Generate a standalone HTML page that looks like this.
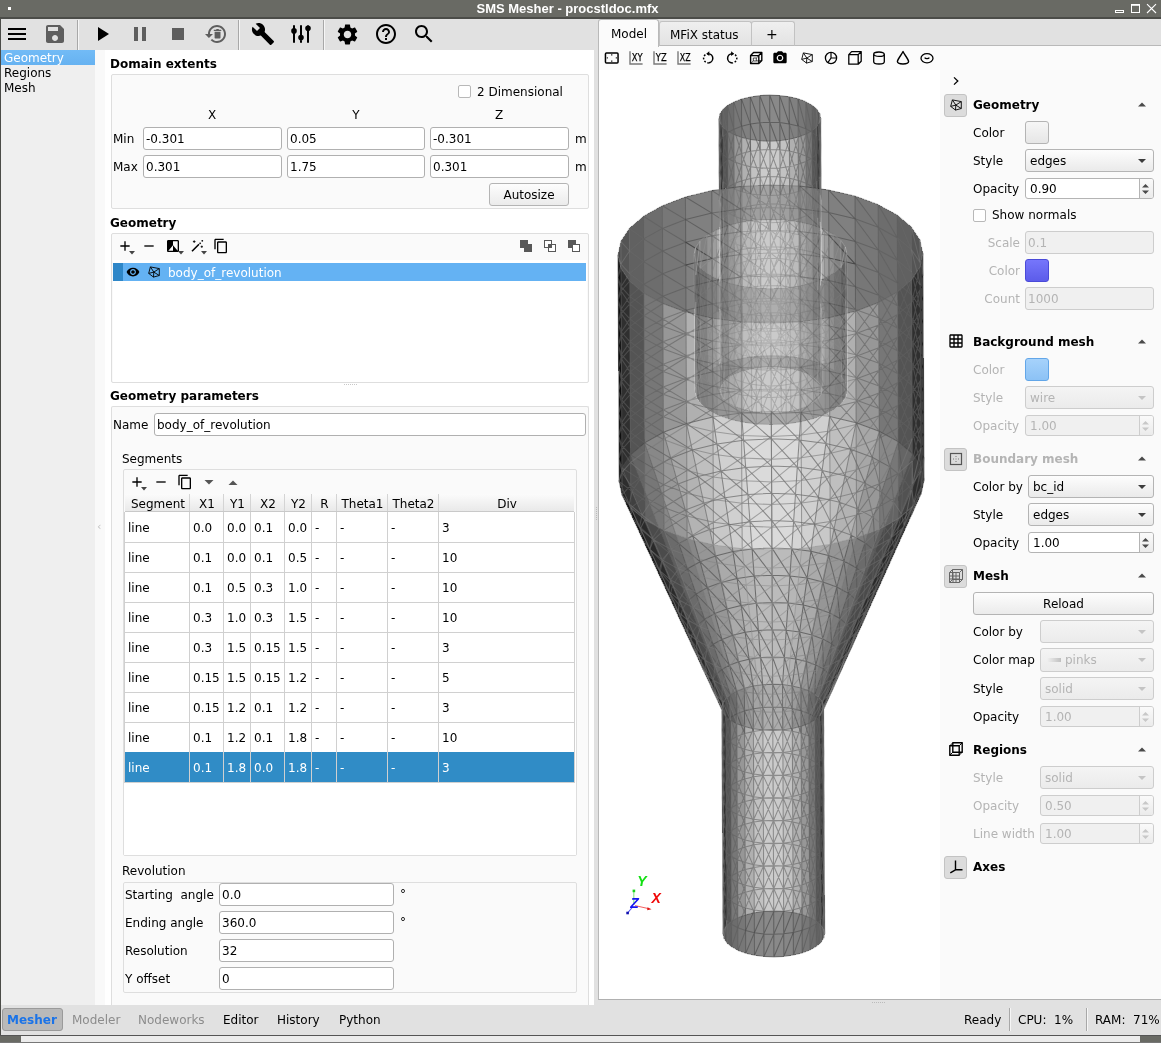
<!DOCTYPE html>
<html><head><meta charset="utf-8"><title>SMS Mesher - procstldoc.mfx</title>
<style>
html,body{margin:0;padding:0;}
body{width:1161px;height:1043px;overflow:hidden;position:relative;will-change:transform;background:#e1e1e1;font-family:"DejaVu Sans","Liberation Sans",sans-serif;font-size:12px;color:#000;}
div,svg{position:absolute;box-sizing:border-box;}
.t{white-space:nowrap;line-height:16px;height:16px;}
.b{font-weight:bold;}
.dis{color:#b4b4b4;}
.inp{background:#fff;border:1px solid #b0b0b0;border-radius:3px;}
.inp .t{left:2px;}
.btn{border:1px solid #b4b4b4;border-radius:3px;background:linear-gradient(#fdfdfd,#ebebeb);}
.grp{border:1px solid #dedede;border-radius:2px;background:#fafafa;}
</style></head><body>
<div style="left:0px;top:0px;width:1161px;height:17px;background:#696a64"></div>
<div style="left:0px;top:17px;width:1161px;height:2px;background:#4b4c48"></div>
<div class="t b" style="left:0;top:0;width:1135px;text-align:center;color:#fff;font-family:'Liberation Sans',sans-serif;font-size:13px;line-height:17px;height:17px">SMS Mesher - procstldoc.mfx</div>
<div style="left:8px;top:7px;width:3px;height:3px;background:#fff"></div>
<svg style="left:1112px;top:0" width="49" height="17" viewBox="0 0 49 17"><g fill="none" stroke="#fff"><rect x="3.5" y="10.5" width="8" height="2"/><rect x="19.5" y="5" width="8" height="7.5"/><rect x="19" y="4" width="9" height="1.6" fill="#fff" stroke="none"/><path d="M35 4.2L44 13M44 4.2L35 13" stroke-width="1.1"/></g></svg>
<div style="left:0px;top:19px;width:1px;height:1024px;background:#4b4c48"></div>
<div style="left:1px;top:19px;width:1160px;height:31px;background:#e1e1e1"></div>
<svg style="position:absolute;left:5px;top:22px" width="24" height="24" viewBox="0 0 24 24"><path fill="#000" d="M3 18h18v-2H3v2zm0-5h18v-2H3v2zm0-7v2h18V6H3z" /></svg>
<svg style="position:absolute;left:43px;top:22px" width="24" height="24" viewBox="0 0 24 24"><path fill="#5e5e5e" d="M17 3H5c-1.11 0-2 .9-2 2v14c0 1.1.89 2 2 2h14c1.1 0 2-.9 2-2V7l-4-4zm-5 16c-1.66 0-3-1.34-3-3s1.34-3 3-3 3 1.34 3 3-1.34 3-3 3zm3-10H5V5h10v4z" /></svg>
<svg style="position:absolute;left:90px;top:22px" width="24" height="24" viewBox="0 0 24 24"><path fill="#000" d="M8 5v14l11-7z" /></svg>
<svg style="position:absolute;left:128px;top:22px" width="24" height="24" viewBox="0 0 24 24"><path fill="#5e5e5e" d="M6 19h4V5H6v14zm8-14v14h4V5h-4z" /></svg>
<svg style="position:absolute;left:166px;top:22px" width="24" height="24" viewBox="0 0 24 24"><path fill="#5e5e5e" d="M6 6h12v12H6z" /></svg>
<svg style="position:absolute;left:204px;top:22px" width="24" height="24" viewBox="0 0 24 24"><path fill="#5e5e5e" d="M13 3c-4.97 0-9 4.030-9 9H1l3.890 3.890.070.140L9 12H6c0-3.870 3.130-7 7-7s7 3.130 7 7-3.130 7-7 7c-1.930 0-3.680-.790-4.940-2.060l-1.420 1.420C8.270 19.990 10.510 21 13 21c4.970 0 9-4.030 9-9s-4.030-9-9-9z M10.600 9.700h5.900v6.100a.7.700 0 0 1-.700.700h-4.500a.7.700 0 0 1-.700-.700z M9.800 7.700h7.500v1.300H9.800z M12.300 6.900h2.500v.900h-2.500z" /></svg>
<svg style="position:absolute;left:251px;top:22px" width="24" height="24" viewBox="0 0 24 24"><path fill="#000" d="M22.7 19l-9.1-9.1c.9-2.3.4-5-1.5-6.9-2-2-5-2.4-7.4-1.3L9 6 6 9 1.6 4.7C.4 7.1.9 10.1 2.9 12.1c1.9 1.9 4.6 2.4 6.9 1.5l9.1 9.1c.4.4 1 .4 1.4 0l2.3-2.3c.5-.4.5-1.1.1-1.4z" /></svg>
<svg style="position:absolute;left:289px;top:22px" width="24" height="24" viewBox="0 0 24 24"><path fill="#000" d="M4 3.200h2v17.600H4z M11 3.200h2v17.600h-2z M18 3.200h2v17.600h-2z M2.200 8.900a2.800 2.800 0 1 1 5.600 0a2.800 2.800 0 1 1-5.600 0z M9.200 15.600a2.800 2.800 0 1 1 5.600 0a2.800 2.800 0 1 1-5.600 0z M16.200 6.300a2.800 2.800 0 1 1 5.600 0a2.800 2.800 0 1 1-5.600 0z" /></svg>
<svg style="position:absolute;left:335.4px;top:21.5px" width="25" height="25" viewBox="0 0 24 24"><path fill="#000" d="M19.14 12.94c.04-.3.06-.61.06-.94 0-.32-.02-.64-.07-.94l2.03-1.58c.18-.14.23-.41.12-.61l-1.92-3.32c-.12-.22-.37-.29-.59-.22l-2.39.96c-.5-.38-1.03-.7-1.62-.94l-.36-2.54c-.04-.24-.24-.41-.48-.41h-3.84c-.24 0-.43.17-.47.41l-.36 2.54c-.59.24-1.13.57-1.62.94l-2.39-.96c-.22-.08-.47 0-.59.22L2.74 8.87c-.12.21-.08.47.12.61l2.03 1.58c-.05.3-.09.63-.09.94s.02.64.07.94l-2.03 1.58c-.18.14-.23.41-.12.61l1.92 3.32c.12.22.37.29.59.22l2.39-.96c.5.38 1.03.7 1.62.94l.36 2.54c.05.24.24.41.48.41h3.84c.24 0 .44-.17.47-.41l.36-2.54c.59-.24 1.13-.56 1.62-.94l2.39.96c.22.08.47 0 .59-.22l1.92-3.32c.12-.22.07-.47-.12-.61l-2.01-1.58zM12 15.6c-1.98 0-3.6-1.62-3.6-3.6s1.62-3.6 3.6-3.6 3.6 1.62 3.6 3.6-1.62 3.6-3.6 3.6z" /></svg>
<svg style="position:absolute;left:374px;top:22px" width="24" height="24" viewBox="0 0 24 24"><path fill="#000" d="M11 18h2v-2h-2v2zm1-16C6.48 2 2 6.48 2 12s4.48 10 10 10 10-4.48 10-10S17.52 2 12 2zm0 18c-4.41 0-8-3.59-8-8s3.59-8 8-8 8 3.59 8 8-3.59 8-8 8zm0-14c-2.21 0-4 1.79-4 4h2c0-1.1.9-2 2-2s2 .9 2 2c0 2-3 1.75-3 5h2c0-2.25 3-2.5 3-5 0-2.21-1.79-4-4-4z" /></svg>
<svg style="position:absolute;left:412px;top:22px" width="24" height="24" viewBox="0 0 24 24"><path fill="#000" d="M15.5 14h-.79l-.28-.27C15.41 12.59 16 11.11 16 9.5 16 5.91 13.09 3 9.5 3S3 5.91 3 9.5 5.91 16 9.5 16c1.61 0 3.09-.59 4.23-1.57l.27.28v.79l5 4.99L20.49 19l-4.99-5zm-6 0C7.01 14 5 11.99 5 9.5S7.01 5 9.5 5 14 7.01 14 9.5 11.99 14 9.5 14z" /></svg>
<div style="left:77px;top:20px;width:1px;height:30px;background:#a8a8a8"></div>
<div style="left:78px;top:20px;width:1px;height:30px;background:#f6f6f6"></div>
<div style="left:238px;top:20px;width:1px;height:30px;background:#a8a8a8"></div>
<div style="left:239px;top:20px;width:1px;height:30px;background:#f6f6f6"></div>
<div style="left:323px;top:20px;width:1px;height:30px;background:#a8a8a8"></div>
<div style="left:324px;top:20px;width:1px;height:30px;background:#f6f6f6"></div>
<div style="left:1px;top:50px;width:94px;height:955px;background:#efefef"></div>
<div style="left:1px;top:50px;width:94px;height:15px;background:linear-gradient(#72bbf6,#66b2f1)"></div>
<div class="t" style="left:4px;top:50px;color:#fff">Geometry</div>
<div class="t" style="left:4px;top:65px;">Regions</div>
<div class="t" style="left:4px;top:80px;">Mesh</div>
<div style="left:95px;top:50px;width:499px;height:955px;background:#fff"></div>
<div style="left:95px;top:50px;width:10px;height:955px;background:#f9f9f9"></div>
<div style="left:594px;top:50px;width:4px;height:955px;background:#e1e1e1"></div>
<div class="t" style="left:97px;top:519px;color:#c4c4c4;font-size:11px">&#8249;</div>
<div class="t b" style="left:110px;top:56px;">Domain extents</div>
<div class="grp" style="left:111px;top:74px;width:478px;height:135px;"></div>
<div style="left:458px;top:85px;width:13px;height:13px;background:#fff;border:1px solid #b8b8b8;border-radius:2px"></div>
<div class="t" style="left:477px;top:84px;">2 Dimensional</div>
<div class="t" style="left:192px;top:107px;width:40px;text-align:center">X</div>
<div class="t" style="left:336px;top:107px;width:40px;text-align:center">Y</div>
<div class="t" style="left:479px;top:107px;width:40px;text-align:center">Z</div>
<div class="t" style="left:113px;top:131px;">Min</div>
<div class="t" style="left:113px;top:159px;">Max</div>
<div class="inp" style="left:143px;top:127px;width:139px;height:23px;"><div class="t" style="top:3px">-0.301</div></div>
<div class="inp" style="left:143px;top:155px;width:139px;height:23px;"><div class="t" style="top:3px">0.301</div></div>
<div class="inp" style="left:287px;top:127px;width:138px;height:23px;"><div class="t" style="top:3px">0.05</div></div>
<div class="inp" style="left:287px;top:155px;width:138px;height:23px;"><div class="t" style="top:3px">1.75</div></div>
<div class="inp" style="left:430px;top:127px;width:139px;height:23px;"><div class="t" style="top:3px">-0.301</div></div>
<div class="inp" style="left:430px;top:155px;width:139px;height:23px;"><div class="t" style="top:3px">0.301</div></div>
<div class="t" style="left:575px;top:131px;">m</div>
<div class="t" style="left:575px;top:159px;">m</div>
<div class="btn" style="left:489px;top:183px;width:80px;height:23px;"><div class="t" style="left:0;width:78px;text-align:center;top:3px">Autosize</div></div>
<div class="t b" style="left:110px;top:215px;">Geometry</div>
<div class="grp" style="left:111px;top:233px;width:478px;height:150px;"></div>
<div style="left:113px;top:260px;width:474px;height:122px;background:#fff"></div>
<svg style="position:absolute;left:117px;top:238px" width="16" height="16" viewBox="0 0 24 24"><path fill="#000" d="M19 13h-6v6h-2v-6H5v-2h6V5h2v6h6v2z" /></svg>
<svg style="left:129px;top:251px" width="6" height="4" viewBox="0 0 6 4"><path d="M0 0h6L3 3.4z" fill="#444"/></svg>
<svg style="position:absolute;left:141px;top:238px" width="16" height="16" viewBox="0 0 24 24"><path fill="#000" d="M19 13H5v-2h14v2z" /></svg>
<svg style="position:absolute;left:165px;top:238px" width="16" height="16" viewBox="0 0 24 24"><path fill="#000" d="M19 3H5c-1.1 0-2 .9-2 2v14c0 1.1.9 2 2 2h14c1.1 0 2-.9 2-2V5c0-1.1-.9-2-2-2zm0 16l-7-8v8H5l7-8V5h7v14z" /></svg>
<svg style="left:178px;top:251px" width="6" height="4" viewBox="0 0 6 4"><path d="M0 0h6L3 3.4z" fill="#444"/></svg>
<svg style="left:189px;top:238px" width="16" height="16" viewBox="0 0 16 16"><g stroke="#000" fill="none"><path d="M3 13.300L10 6.300" stroke-width="1.600"/><path d="M10.600 5.700L11.600 4.700" stroke-width="1.600"/><path d="M5.200 2.300v2.600M3.900 3.600h2.600M12.800 7.600v2.200M11.700 8.700h2.200M13.300 2v1.600M12.500 2.800h1.600" stroke-width="0.900"/></g></svg>
<svg style="left:201px;top:251px" width="6" height="4" viewBox="0 0 6 4"><path d="M0 0h6L3 3.4z" fill="#444"/></svg>
<svg style="position:absolute;left:213px;top:238px" width="16" height="16" viewBox="0 0 24 24"><path fill="#000" d="M16 1H4c-1.1 0-2 .9-2 2v14h2V3h12V1zm3 4H8c-1.1 0-2 .9-2 2v14c0 1.1.9 2 2 2h11c1.1 0 2-.9 2-2V7c0-1.1-.9-2-2-2zm0 16H8V7h11v14z" /></svg>
<svg style="left:520px;top:240px" width="12" height="12"><rect x="0" y="0" width="8" height="8" fill="#585858"/><rect x="4" y="4" width="8" height="8" fill="#585858"/></svg>
<svg style="left:544px;top:240px" width="12" height="12"><rect x="0.5" y="0.5" width="7" height="7" fill="#fff" stroke="#585858"/><rect x="4.5" y="4.5" width="7" height="7" fill="#fff" stroke="#585858"/><rect x="4" y="4" width="4" height="4" fill="#585858"/><rect x="4.5" y="4.5" width="7" height="7" fill="none" stroke="#585858"/></svg>
<svg style="left:568px;top:240px" width="12" height="12"><rect x="0" y="0" width="8" height="8" fill="#585858"/><rect x="4.5" y="4.5" width="7" height="7" fill="#fff" stroke="#585858"/></svg>
<div style="left:113px;top:263px;width:473px;height:18px;background:#64b2f3"></div>
<div style="left:113px;top:263px;width:10px;height:18px;background:#2f87c8"></div>
<svg style="position:absolute;left:126px;top:265px" width="14" height="14" viewBox="0 0 24 24"><path fill="#000" d="M12 4.5C7 4.5 2.73 7.61 1 12c1.73 4.39 6 7.5 11 7.5s9.27-3.11 11-7.5c-1.73-4.39-6-7.5-11-7.5zM12 17c-2.76 0-5-2.24-5-5s2.24-5 5-5 5 2.24 5 5-2.24 5-5 5zm0-8c-1.66 0-3 1.34-3 3s1.34 3 3 3 3-1.34 3-3-1.34-3-3-3z" /></svg>
<svg style="left:148px;top:266px" width="12" height="12" viewBox="0 0 12 12"><g fill="none" stroke="#000" stroke-width="0.9" stroke-linejoin="round"><path d="M2.400 .900L11.300 2.600V9.500L5.500 11.100L.700 7.400Z"/><path d="M5.800 6.100L2.400 .900M5.800 6.100L11.300 2.600M5.800 6.100L11.300 9.500M5.800 6.100L5.500 11.100M5.800 6.100L.700 7.400"/></g></svg>
<div class="t" style="left:168px;top:265px;color:#fff">body_of_revolution</div>
<div style="left:344px;top:384px;width:14px;height:1px;background:repeating-linear-gradient(90deg,#c8c8c8 0 1px,transparent 1px 2px)"></div>
<div class="t b" style="left:110px;top:388px;">Geometry parameters</div>
<div class="grp" style="left:111px;top:406px;width:478px;height:620px;border-bottom:none"></div>
<div class="t" style="left:113px;top:417px;">Name</div>
<div class="inp" style="left:154px;top:413px;width:432px;height:23px;"><div class="t" style="top:3px">body_of_revolution</div></div>
<div class="t" style="left:122px;top:451px;">Segments</div>
<div class="grp" style="left:123px;top:469px;width:454px;height:387px;"></div>
<svg style="position:absolute;left:129px;top:474px" width="16" height="16" viewBox="0 0 24 24"><path fill="#000" d="M19 13h-6v6h-2v-6H5v-2h6V5h2v6h6v2z" /></svg>
<svg style="left:141px;top:487px" width="6" height="4" viewBox="0 0 6 4"><path d="M0 0h6L3 3.4z" fill="#444"/></svg>
<svg style="position:absolute;left:153px;top:474px" width="16" height="16" viewBox="0 0 24 24"><path fill="#000" d="M19 13H5v-2h14v2z" /></svg>
<svg style="position:absolute;left:177px;top:474px" width="16" height="16" viewBox="0 0 24 24"><path fill="#000" d="M16 1H4c-1.1 0-2 .9-2 2v14h2V3h12V1zm3 4H8c-1.1 0-2 .9-2 2v14c0 1.1.9 2 2 2h11c1.1 0 2-.9 2-2V7c0-1.1-.9-2-2-2zm0 16H8V7h11v14z" /></svg>
<svg style="left:204px;top:480px" width="10" height="5" viewBox="0 0 10 5"><path d="M0.5 0h9L5 4.5z" fill="#555"/></svg>
<svg style="left:228px;top:480px" width="10" height="5" viewBox="0 0 10 5"><path d="M0.5 5h9L5 0.5z" fill="#555"/></svg>
<div style="left:125px;top:494px;width:449px;height:18px;background:linear-gradient(#fbfbfb,#e9e9e9);border-bottom:1px solid #c9c9c9"></div>
<div class="t" style="left:126px;top:496px;width:64px;text-align:center">Segment</div>
<div class="t" style="left:190px;top:496px;width:34px;text-align:center">X1</div>
<div style="left:189px;top:494px;width:1px;height:17px;background:#d4d4d4"></div>
<div class="t" style="left:224px;top:496px;width:27px;text-align:center">Y1</div>
<div style="left:223px;top:494px;width:1px;height:17px;background:#d4d4d4"></div>
<div class="t" style="left:251px;top:496px;width:34px;text-align:center">X2</div>
<div style="left:250px;top:494px;width:1px;height:17px;background:#d4d4d4"></div>
<div class="t" style="left:285px;top:496px;width:27px;text-align:center">Y2</div>
<div style="left:284px;top:494px;width:1px;height:17px;background:#d4d4d4"></div>
<div class="t" style="left:312px;top:496px;width:25px;text-align:center">R</div>
<div style="left:311px;top:494px;width:1px;height:17px;background:#d4d4d4"></div>
<div class="t" style="left:337px;top:496px;width:51px;text-align:center">Theta1</div>
<div style="left:336px;top:494px;width:1px;height:17px;background:#d4d4d4"></div>
<div class="t" style="left:388px;top:496px;width:51px;text-align:center">Theta2</div>
<div style="left:387px;top:494px;width:1px;height:17px;background:#d4d4d4"></div>
<div class="t" style="left:439px;top:496px;width:136px;text-align:center">Div</div>
<div style="left:438px;top:494px;width:1px;height:17px;background:#d4d4d4"></div>
<div style="left:124px;top:512px;width:452px;height:343px;background:#fff"></div>
<div class="t" style="left:128px;top:520px;">line</div>
<div class="t" style="left:193px;top:520px;">0.0</div>
<div class="t" style="left:227px;top:520px;">0.0</div>
<div class="t" style="left:254px;top:520px;">0.1</div>
<div class="t" style="left:288px;top:520px;">0.0</div>
<div class="t" style="left:315px;top:520px;">-</div>
<div class="t" style="left:340px;top:520px;">-</div>
<div class="t" style="left:391px;top:520px;">-</div>
<div class="t" style="left:442px;top:520px;">3</div>
<div style="left:125px;top:542px;width:449px;height:1px;background:#d0d0d0"></div>
<div class="t" style="left:128px;top:550px;">line</div>
<div class="t" style="left:193px;top:550px;">0.1</div>
<div class="t" style="left:227px;top:550px;">0.0</div>
<div class="t" style="left:254px;top:550px;">0.1</div>
<div class="t" style="left:288px;top:550px;">0.5</div>
<div class="t" style="left:315px;top:550px;">-</div>
<div class="t" style="left:340px;top:550px;">-</div>
<div class="t" style="left:391px;top:550px;">-</div>
<div class="t" style="left:442px;top:550px;">10</div>
<div style="left:125px;top:572px;width:449px;height:1px;background:#d0d0d0"></div>
<div class="t" style="left:128px;top:580px;">line</div>
<div class="t" style="left:193px;top:580px;">0.1</div>
<div class="t" style="left:227px;top:580px;">0.5</div>
<div class="t" style="left:254px;top:580px;">0.3</div>
<div class="t" style="left:288px;top:580px;">1.0</div>
<div class="t" style="left:315px;top:580px;">-</div>
<div class="t" style="left:340px;top:580px;">-</div>
<div class="t" style="left:391px;top:580px;">-</div>
<div class="t" style="left:442px;top:580px;">10</div>
<div style="left:125px;top:602px;width:449px;height:1px;background:#d0d0d0"></div>
<div class="t" style="left:128px;top:610px;">line</div>
<div class="t" style="left:193px;top:610px;">0.3</div>
<div class="t" style="left:227px;top:610px;">1.0</div>
<div class="t" style="left:254px;top:610px;">0.3</div>
<div class="t" style="left:288px;top:610px;">1.5</div>
<div class="t" style="left:315px;top:610px;">-</div>
<div class="t" style="left:340px;top:610px;">-</div>
<div class="t" style="left:391px;top:610px;">-</div>
<div class="t" style="left:442px;top:610px;">10</div>
<div style="left:125px;top:632px;width:449px;height:1px;background:#d0d0d0"></div>
<div class="t" style="left:128px;top:640px;">line</div>
<div class="t" style="left:193px;top:640px;">0.3</div>
<div class="t" style="left:227px;top:640px;">1.5</div>
<div class="t" style="left:254px;top:640px;">0.15</div>
<div class="t" style="left:288px;top:640px;">1.5</div>
<div class="t" style="left:315px;top:640px;">-</div>
<div class="t" style="left:340px;top:640px;">-</div>
<div class="t" style="left:391px;top:640px;">-</div>
<div class="t" style="left:442px;top:640px;">3</div>
<div style="left:125px;top:662px;width:449px;height:1px;background:#d0d0d0"></div>
<div class="t" style="left:128px;top:670px;">line</div>
<div class="t" style="left:193px;top:670px;">0.15</div>
<div class="t" style="left:227px;top:670px;">1.5</div>
<div class="t" style="left:254px;top:670px;">0.15</div>
<div class="t" style="left:288px;top:670px;">1.2</div>
<div class="t" style="left:315px;top:670px;">-</div>
<div class="t" style="left:340px;top:670px;">-</div>
<div class="t" style="left:391px;top:670px;">-</div>
<div class="t" style="left:442px;top:670px;">5</div>
<div style="left:125px;top:692px;width:449px;height:1px;background:#d0d0d0"></div>
<div class="t" style="left:128px;top:700px;">line</div>
<div class="t" style="left:193px;top:700px;">0.15</div>
<div class="t" style="left:227px;top:700px;">1.2</div>
<div class="t" style="left:254px;top:700px;">0.1</div>
<div class="t" style="left:288px;top:700px;">1.2</div>
<div class="t" style="left:315px;top:700px;">-</div>
<div class="t" style="left:340px;top:700px;">-</div>
<div class="t" style="left:391px;top:700px;">-</div>
<div class="t" style="left:442px;top:700px;">3</div>
<div style="left:125px;top:722px;width:449px;height:1px;background:#d0d0d0"></div>
<div class="t" style="left:128px;top:730px;">line</div>
<div class="t" style="left:193px;top:730px;">0.1</div>
<div class="t" style="left:227px;top:730px;">1.2</div>
<div class="t" style="left:254px;top:730px;">0.1</div>
<div class="t" style="left:288px;top:730px;">1.8</div>
<div class="t" style="left:315px;top:730px;">-</div>
<div class="t" style="left:340px;top:730px;">-</div>
<div class="t" style="left:391px;top:730px;">-</div>
<div class="t" style="left:442px;top:730px;">10</div>
<div style="left:125px;top:752px;width:449px;height:1px;background:#d0d0d0"></div>
<div style="left:125px;top:752px;width:449px;height:30px;background:#308cc6"></div>
<div class="t" style="left:128px;top:760px;color:#fff">line</div>
<div class="t" style="left:193px;top:760px;color:#fff">0.1</div>
<div class="t" style="left:227px;top:760px;color:#fff">1.8</div>
<div class="t" style="left:254px;top:760px;color:#fff">0.0</div>
<div class="t" style="left:288px;top:760px;color:#fff">1.8</div>
<div class="t" style="left:315px;top:760px;color:#fff">-</div>
<div class="t" style="left:340px;top:760px;color:#fff">-</div>
<div class="t" style="left:391px;top:760px;color:#fff">-</div>
<div class="t" style="left:442px;top:760px;color:#fff">3</div>
<div style="left:125px;top:782px;width:449px;height:1px;background:#d0d0d0"></div>
<div style="left:189px;top:512px;width:1px;height:271px;background:#d0d0d0"></div>
<div style="left:223px;top:512px;width:1px;height:271px;background:#d0d0d0"></div>
<div style="left:250px;top:512px;width:1px;height:271px;background:#d0d0d0"></div>
<div style="left:284px;top:512px;width:1px;height:271px;background:#d0d0d0"></div>
<div style="left:311px;top:512px;width:1px;height:271px;background:#d0d0d0"></div>
<div style="left:336px;top:512px;width:1px;height:271px;background:#d0d0d0"></div>
<div style="left:387px;top:512px;width:1px;height:271px;background:#d0d0d0"></div>
<div style="left:438px;top:512px;width:1px;height:271px;background:#d0d0d0"></div>
<div style="left:574px;top:512px;width:1px;height:271px;background:#d0d0d0"></div>
<div style="left:124px;top:512px;width:1px;height:271px;background:#d0d0d0"></div>
<div class="t" style="left:122px;top:863px;">Revolution</div>
<div class="grp" style="left:123px;top:882px;width:454px;height:111px;"></div>
<div class="t" style="left:125px;top:887px;">Starting&nbsp; angle</div>
<div class="inp" style="left:219px;top:883px;width:175px;height:23px;"><div class="t" style="top:3px">0.0</div></div>
<div class="t" style="left:400px;top:886px;">&deg;</div>
<div class="t" style="left:125px;top:915px;">Ending angle</div>
<div class="inp" style="left:219px;top:911px;width:175px;height:23px;"><div class="t" style="top:3px">360.0</div></div>
<div class="t" style="left:400px;top:914px;">&deg;</div>
<div class="t" style="left:125px;top:943px;">Resolution</div>
<div class="inp" style="left:219px;top:939px;width:175px;height:23px;"><div class="t" style="top:3px">32</div></div>
<div class="t" style="left:125px;top:971px;">Y offset</div>
<div class="inp" style="left:219px;top:967px;width:175px;height:23px;"><div class="t" style="top:3px">0</div></div>
<div style="left:598px;top:45px;width:563px;height:955px;background:#fbfbfb;border-top:1px solid #b9b9b9;border-left:1px solid #b9b9b9;border-bottom:1px solid #b0b0b0"></div>
<div style="left:659px;top:21px;width:93px;height:25px;background:linear-gradient(#efefef,#e3e3e3);border:1px solid #c2c2c2;border-bottom:1px solid #b9b9b9;border-radius:3px 3px 0 0"></div>
<div style="left:751px;top:21px;width:44px;height:25px;background:linear-gradient(#efefef,#e3e3e3);border:1px solid #c2c2c2;border-bottom:1px solid #b9b9b9;border-radius:3px 3px 0 0"></div>
<div style="left:598px;top:19px;width:61px;height:28px;background:#fbfbfb;border:1px solid #b9b9b9;border-bottom:none;border-radius:3px 3px 0 0"></div>
<div class="t" style="left:611px;top:26px;">Model</div>
<div class="t" style="left:670px;top:27px;">MFiX status</div>
<div class="t" style="left:766px;top:25px;font-size:14px;line-height:18px;height:18px">+</div>
<div style="left:599px;top:70px;width:341px;height:929px;background:#fff"></div>
<svg style="left:600px;top:70px" width="340" height="928" viewBox="600 70 340 928">
<g shape-rendering="crispEdges" fill-rule="evenodd">
<path d="M823.7 929.2L820.8 924.9L816 920.9L809.7 917.4L802 914.6L793.2 912.5L783.6 911.3L773.7 910.9L763.8 911.4L754.3 912.7L745.5 914.9L737.8 917.8L731.5 921.3L726.8 925.3L723.9 929.7L723 934.2L724 938.7L726.9 943L731.6 946.9L738 950.4L745.7 953.2L754.5 955.3L764 956.6L773.9 957L783.9 956.5L793.4 955.1L802.2 952.9L809.9 950L816.2 946.5L820.9 942.5L823.7 938.2L824.7 933.7Z" fill="#686868"/>
<path d="M824.7 933.7L823.7 929.2L820.8 924.9L816 920.9L809.7 917.4L802 914.6L793.2 912.5L783.6 911.3L773.7 910.9L763.8 911.4L754.3 912.7L745.5 914.9L737.8 917.8L731.5 921.3L726.8 925.3L723.9 929.7L723 934.2L724 938.7L726.9 943L731.6 946.9L738 950.4L745.7 953.2L754.5 955.3L764 956.6L773.9 957L783.9 956.5L793.4 955.1L802.2 952.9L809.9 950L816.2 946.5L820.9 942.5L823.7 938.2Z" fill="#686868" fill-opacity=".500"/>
<path d="M723.9 929.7L722.8 703.1L721.9 707.6L723 934.2Z" fill="#0d0d0d"/>
<path d="M726.8 925.3L725.7 698.7L722.8 703.1L723.9 929.7Z" fill="#2f2f2f"/>
<path d="M731.5 921.3L730.4 694.7L725.7 698.7L726.8 925.3Z" fill="#545454"/>
<path d="M737.8 917.8L736.7 691.2L730.4 694.7L731.5 921.3Z" fill="#777777"/>
<path d="M745.5 914.9L744.4 688.3L736.7 691.2L737.8 917.8Z" fill="#979797"/>
<path d="M754.3 912.7L753.2 686.1L744.4 688.3L745.5 914.9Z" fill="#b0b0b0"/>
<path d="M763.8 911.4L762.7 684.7L753.2 686.1L754.3 912.7Z" fill="#c2c2c2"/>
<path d="M773.7 910.9L772.6 684.3L762.7 684.7L763.8 911.4ZM783.6 911.3L782.5 684.6L772.6 684.3L773.7 910.9Z" fill="#cbcbcb"/>
<path d="M793.2 912.5L792.1 685.9L782.5 684.6L783.6 911.3Z" fill="#c2c2c2"/>
<path d="M802 914.6L800.9 688L792.1 685.9L793.2 912.5Z" fill="#b0b0b0"/>
<path d="M809.7 917.4L808.6 690.8L800.9 688L802 914.6Z" fill="#979797"/>
<path d="M816 920.9L814.9 694.3L808.6 690.8L809.7 917.4Z" fill="#777777"/>
<path d="M820.8 924.9L819.6 698.3L814.9 694.3L816 920.9Z" fill="#545454"/>
<path d="M823.7 929.2L822.6 702.6L819.6 698.3L820.8 924.9Z" fill="#2f2f2f"/>
<path d="M824.7 933.7L823.6 707.1L822.6 702.6L823.7 929.2Z" fill="#0d0d0d"/>
<path d="M822.6 711.6L823.7 929.2L824.7 933.7L823.6 707.1Z" fill="#0d0d0d" fill-opacity=".500"/>
<path d="M824.7 933.7L823.7 929.2L823.7 938.2Z" fill="#0d0d0d" fill-opacity=".333"/>
<path d="M822.6 711.6L819.7 715.9L820.8 924.9L823.7 929.2Z" fill="#2f2f2f" fill-opacity=".500"/>
<path d="M823.7 938.2L823.7 929.2L820.8 924.9L820.9 942.5Z" fill="#2f2f2f" fill-opacity=".333"/>
<path d="M819.7 715.9L815.1 719.9L816 920.9L820.8 924.9Z" fill="#545454" fill-opacity=".500"/>
<path d="M820.9 942.5L820.8 924.9L816 920.9L816.2 946.5Z" fill="#545454" fill-opacity=".333"/>
<path d="M815.1 719.9L808.8 723.4L809.7 917.4L816 920.9Z" fill="#777777" fill-opacity=".500"/>
<path d="M816.2 946.5L816 920.9L809.7 917.4L809.9 950Z" fill="#777777" fill-opacity=".333"/>
<path d="M808.8 723.4L801.1 726.3L802 914.6L809.7 917.4Z" fill="#979797" fill-opacity=".500"/>
<path d="M809.9 950L809.7 917.4L802 914.6L802.2 952.9Z" fill="#979797" fill-opacity=".333"/>
<path d="M801.1 726.3L792.3 728.5L793.2 912.5L802 914.6Z" fill="#b0b0b0" fill-opacity=".500"/>
<path d="M802.2 952.9L802 914.6L793.2 912.5L793.4 955.1Z" fill="#b0b0b0" fill-opacity=".333"/>
<path d="M792.3 728.5L782.7 729.9L783.6 911.3L793.2 912.5Z" fill="#c2c2c2" fill-opacity=".500"/>
<path d="M793.4 955.1L793.2 912.5L783.6 911.3L783.9 956.5Z" fill="#c2c2c2" fill-opacity=".333"/>
<path d="M782.7 729.9L772.8 730.4L773.7 910.9L783.6 911.3Z" fill="#cbcbcb" fill-opacity=".500"/>
<path d="M783.9 956.5L783.6 911.3L773.7 910.9L773.9 957Z" fill="#cbcbcb" fill-opacity=".333"/>
<path d="M772.8 730.4L762.9 730L763.8 911.4L773.7 910.9Z" fill="#cbcbcb" fill-opacity=".500"/>
<path d="M773.9 957L773.7 910.9L763.8 911.4L764 956.6Z" fill="#cbcbcb" fill-opacity=".333"/>
<path d="M762.9 730L753.4 728.7L754.3 912.7L763.8 911.4Z" fill="#c2c2c2" fill-opacity=".500"/>
<path d="M764 956.6L763.8 911.4L754.3 912.7L754.5 955.3Z" fill="#c2c2c2" fill-opacity=".333"/>
<path d="M753.4 728.7L744.6 726.6L745.5 914.9L754.3 912.7Z" fill="#b0b0b0" fill-opacity=".500"/>
<path d="M754.5 955.3L754.3 912.7L745.5 914.9L745.7 953.2Z" fill="#b0b0b0" fill-opacity=".333"/>
<path d="M744.6 726.6L736.8 723.8L737.8 917.8L745.5 914.9Z" fill="#979797" fill-opacity=".500"/>
<path d="M745.7 953.2L745.5 914.9L737.8 917.8L738 950.4Z" fill="#979797" fill-opacity=".333"/>
<path d="M736.8 723.8L730.5 720.3L731.5 921.3L737.8 917.8Z" fill="#777777" fill-opacity=".500"/>
<path d="M738 950.4L737.8 917.8L731.5 921.3L731.6 946.9Z" fill="#777777" fill-opacity=".333"/>
<path d="M730.5 720.3L725.8 716.4L726.8 925.3L731.5 921.3Z" fill="#545454" fill-opacity=".500"/>
<path d="M731.6 946.9L731.5 921.3L726.8 925.3L726.9 943Z" fill="#545454" fill-opacity=".333"/>
<path d="M725.8 716.4L722.9 712L723.9 929.7L726.8 925.3Z" fill="#2f2f2f" fill-opacity=".500"/>
<path d="M726.9 943L726.8 925.3L723.9 929.7L724 938.7Z" fill="#2f2f2f" fill-opacity=".333"/>
<path d="M723 934.2L723.9 929.7L722.9 712L721.9 707.6Z" fill="#0d0d0d" fill-opacity=".500"/>
<path d="M724 938.7L723.9 929.7L723 934.2Z" fill="#0d0d0d" fill-opacity=".333"/>
<path d="M921.3 493.4L924.1 479.9L823.6 707.1L823.6 709.4Z" fill="#0d0d0d"/>
<path d="M822.6 711.6L823.6 709.4L823.6 707.1Z" fill="#0d0d0d" fill-opacity=".333"/>
<path d="M619.1 481.4L622 494.9L721.9 709.9L721.9 707.6Z" fill="#0d0d0d"/>
<path d="M721.9 707.6L721.9 709.9L722.9 712Z" fill="#0d0d0d" fill-opacity=".333"/>
<path d="M722.8 703.1L621.9 467.9L619.1 481.4L721.9 707.6Z" fill="#2d2d2d"/>
<path d="M725.7 698.7L630.5 454.9L621.9 467.9L722.8 703.1Z" fill="#515151"/>
<path d="M730.4 694.7L644.6 442.9L630.5 454.9L725.7 698.7Z" fill="#767676"/>
<path d="M736.7 691.2L663.5 432.3L644.6 442.9L730.4 694.7Z" fill="#989898"/>
<path d="M744.4 688.3L686.6 423.6L663.5 432.3L736.7 691.2Z" fill="#b6b6b6"/>
<path d="M753.2 686.1L712.9 417.1L686.6 423.6L744.4 688.3Z" fill="#cecece"/>
<path d="M762.7 684.7L741.5 413L712.9 417.1L753.2 686.1Z" fill="#dfdfdf"/>
<path d="M772.6 684.3L771.3 411.5L741.5 413L762.7 684.7ZM782.5 684.6L801 412.7L771.3 411.5L772.6 684.3Z" fill="#e8e8e8"/>
<path d="M792.1 685.9L829.7 416.5L801 412.7L782.5 684.6Z" fill="#dfdfdf"/>
<path d="M800.9 688L856.1 422.8L829.7 416.5L792.1 685.9Z" fill="#cecece"/>
<path d="M808.6 690.8L879.2 431.3L856.1 422.8L800.9 688Z" fill="#b6b6b6"/>
<path d="M814.9 694.3L898.2 441.6L879.2 431.3L808.6 690.8Z" fill="#989898"/>
<path d="M819.6 698.3L912.4 453.5L898.2 441.6L814.9 694.3Z" fill="#767676"/>
<path d="M822.6 702.6L921.1 466.5L912.4 453.5L819.6 698.3Z" fill="#515151"/>
<path d="M823.6 707.1L924.1 479.9L921.1 466.5L822.6 702.6Z" fill="#2d2d2d"/>
<path d="M822.6 711.6L823.5 707.5L819.7 715.9ZM912.7 506.5L823.6 707.3L823.6 709.4L921.3 493.4Z" fill="#0a0a0a" fill-opacity=".500"/>
<path d="M823.5 707.5L822.6 711.6L823.6 709.4L823.6 707.3Z" fill="#0a0a0a" fill-opacity=".250"/>
<path d="M819.7 715.9L823.5 707.5L823.6 707.1L823.6 707.3L912.7 506.5L898.6 518.5L815.1 719.9Z" fill="#282828" fill-opacity=".500"/>
<path d="M815.1 719.9L898.6 518.5L879.7 529.1L808.8 723.4Z" fill="#454545" fill-opacity=".500"/>
<path d="M808.8 723.4L879.7 529.1L856.6 537.8L801.1 726.3Z" fill="#606060" fill-opacity=".500"/>
<path d="M801.1 726.3L856.6 537.8L830.3 544.3L792.3 728.5Z" fill="#767676" fill-opacity=".500"/>
<path d="M792.3 728.5L830.3 544.3L801.7 548.4L782.7 729.9Z" fill="#868686" fill-opacity=".500"/>
<path d="M782.7 729.9L801.7 548.4L771.9 549.8L772.8 730.4ZM772.8 730.4L771.9 549.8L742.2 548.7L762.9 730Z" fill="#8e8e8e" fill-opacity=".500"/>
<path d="M762.9 730L742.2 548.7L713.5 544.9L753.4 728.7Z" fill="#868686" fill-opacity=".500"/>
<path d="M753.4 728.7L713.5 544.9L687.1 538.6L744.6 726.6Z" fill="#767676" fill-opacity=".500"/>
<path d="M744.6 726.6L687.1 538.6L664 530.1L736.8 723.8Z" fill="#606060" fill-opacity=".500"/>
<path d="M736.8 723.8L664 530.1L644.9 519.7L730.5 720.3Z" fill="#454545" fill-opacity=".500"/>
<path d="M730.5 720.3L644.9 519.7L630.8 507.8L721.9 707.8L721.9 707.6L722 708L725.8 716.4Z" fill="#282828" fill-opacity=".500"/>
<path d="M725.8 716.4L722 708L722.9 712ZM630.8 507.8L622 494.9L721.9 709.9L721.9 707.8Z" fill="#0a0a0a" fill-opacity=".500"/>
<path d="M721.9 707.8L721.9 709.9L722.9 712L722 708Z" fill="#0a0a0a" fill-opacity=".250"/>
<path d="M621.9 467.9L620.8 241.3L617.9 254.8L619.1 481.4Z" fill="#0d0d0d"/>
<path d="M630.5 454.9L629.4 228.3L620.8 241.3L621.9 467.9Z" fill="#2f2f2f"/>
<path d="M644.6 442.9L643.5 216.3L629.4 228.3L630.5 454.9Z" fill="#545454"/>
<path d="M663.5 432.3L662.4 205.7L643.5 216.3L644.6 442.9Z" fill="#777777"/>
<path d="M686.6 423.6L685.4 197L662.4 205.7L663.5 432.3Z" fill="#979797"/>
<path d="M712.9 417.1L711.8 190.5L685.4 197L686.6 423.6Z" fill="#b0b0b0"/>
<path d="M741.5 413L740.4 186.4L711.8 190.5L712.9 417.1Z" fill="#c2c2c2"/>
<path d="M771.3 411.5L770.1 184.9L740.4 186.4L741.5 413ZM801 412.7L799.9 186.1L770.1 184.9L771.3 411.5Z" fill="#cbcbcb"/>
<path d="M829.7 416.5L828.5 189.9L799.9 186.1L801 412.7Z" fill="#c2c2c2"/>
<path d="M856.1 422.8L855 196.1L828.5 189.9L829.7 416.5Z" fill="#b0b0b0"/>
<path d="M879.2 431.3L878.1 204.6L855 196.1L856.1 422.8Z" fill="#979797"/>
<path d="M898.2 441.6L897.1 215L878.1 204.6L879.2 431.3Z" fill="#777777"/>
<path d="M912.4 453.5L911.3 226.9L897.1 215L898.2 441.6Z" fill="#545454"/>
<path d="M921.1 466.5L920 239.8L911.3 226.9L912.4 453.5Z" fill="#2f2f2f"/>
<path d="M924.1 479.9L923 253.3L920 239.8L921.1 466.5Z" fill="#0d0d0d"/>
<path d="M924.1 479.9L923 253.3L920.2 266.8L921.3 493.4Z" fill="#0d0d0d" fill-opacity=".500"/>
<path d="M921.3 493.4L920.2 266.8L911.6 279.8L912.7 506.5Z" fill="#2f2f2f" fill-opacity=".500"/>
<path d="M912.7 506.5L911.6 279.8L897.5 291.9L898.6 518.5Z" fill="#545454" fill-opacity=".500"/>
<path d="M898.6 518.5L897.5 291.9L878.6 302.4L879.7 529.1Z" fill="#777777" fill-opacity=".500"/>
<path d="M879.7 529.1L878.6 302.4L855.5 311.2L856.6 537.8Z" fill="#979797" fill-opacity=".500"/>
<path d="M856.6 537.8L855.5 311.2L829.2 317.7L830.3 544.3Z" fill="#b0b0b0" fill-opacity=".500"/>
<path d="M830.3 544.3L829.2 317.7L800.6 321.8L801.7 548.4Z" fill="#c2c2c2" fill-opacity=".500"/>
<path d="M801.7 548.4L800.6 321.8L770.8 323.2L771.9 549.8ZM771.9 549.8L770.8 323.2L741.1 322L742.2 548.7Z" fill="#cbcbcb" fill-opacity=".500"/>
<path d="M742.2 548.7L741.1 322L712.4 318.3L713.5 544.9Z" fill="#c2c2c2" fill-opacity=".500"/>
<path d="M713.5 544.9L712.4 318.3L686 312L687.1 538.6Z" fill="#b0b0b0" fill-opacity=".500"/>
<path d="M687.1 538.6L686 312L662.9 303.5L664 530.1Z" fill="#979797" fill-opacity=".500"/>
<path d="M664 530.1L662.9 303.5L643.8 293.1L644.9 519.7Z" fill="#777777" fill-opacity=".500"/>
<path d="M644.9 519.7L643.8 293.1L629.7 281.2L630.8 507.8Z" fill="#545454" fill-opacity=".500"/>
<path d="M630.8 507.8L629.7 281.2L620.9 268.3L622 494.9Z" fill="#2f2f2f" fill-opacity=".500"/>
<path d="M622 494.9L620.9 268.3L617.9 254.8L619.1 481.4Z" fill="#0d0d0d" fill-opacity=".500"/>
<path d="M923 253.3L920 239.8L911.3 226.9L897.1 215L878.1 204.6L855 196.1L828.5 189.9L799.9 186.1L770.1 184.9L740.4 186.4L711.8 190.5L685.4 197L662.4 205.7L643.5 216.3L629.4 228.3L620.8 241.3L617.9 254.8L620.9 268.3L629.7 281.2L643.8 293.1L662.9 303.5L686 312L712.4 318.3L741.1 322L770.8 323.2L800.6 321.8L829.2 317.7L855.5 311.2L878.6 302.4L897.5 291.9L911.6 279.8L920.2 266.8ZM845.3 260.4L841 267L834 273L824.5 278.3L813 282.6L799.8 285.9L785.5 287.9L770.7 288.7L755.8 288.1L741.5 286.2L728.2 283L716.7 278.8L707.2 273.6L700.1 267.7L695.7 261.2L694.2 254.4L695.6 247.7L700 241.2L707 235.2L716.4 229.9L728 225.5L741.1 222.3L755.4 220.2L770.3 219.5L785.2 220.1L799.5 222L812.7 225.1L824.3 229.4L833.8 234.5L840.9 240.5L845.3 247L846.8 253.7Z" fill="#686868" fill-opacity=".500"/>
<path d="M620.9 268.3L629.7 281.2L643.8 293.1L662.9 303.5L686 312L712.4 318.3L741.1 322L770.8 323.2L800.6 321.8L829.2 317.7L855.5 311.2L878.6 302.4L897.5 291.9L911.6 279.8L920.2 266.8L923 253.3L920 239.8L911.3 226.9L897.1 215L878.1 204.6L855 196.1L828.5 189.9L799.9 186.1L770.1 184.9L740.4 186.4L711.8 190.5L685.4 197L662.4 205.7L643.5 216.3L629.4 228.3L620.8 241.3L617.9 254.8ZM845.3 260.4L841 267L834 273L824.5 278.3L813 282.6L799.8 285.9L785.5 287.9L770.7 288.7L755.8 288.1L741.5 286.2L728.2 283L716.7 278.8L707.2 273.6L700.1 267.7L695.7 261.2L694.2 254.4L695.6 247.7L700 241.2L707 235.2L716.4 229.9L728 225.5L741.1 222.3L755.4 220.2L770.3 219.5L785.2 220.1L799.5 222L812.7 225.1L824.3 229.4L833.8 234.5L840.9 240.5L845.3 247L846.8 253.7Z" fill="#686868" fill-opacity=".333"/>
<path d="M846 396.4L847.4 389.7L847.1 313.3L845.6 313.6Z" fill="#0d0d0d" fill-opacity=".333"/>
<path d="M845.3 260.4L845.6 313.6L847.1 313.3L846.8 253.7Z" fill="#0d0d0d" fill-opacity=".250"/>
<path d="M841.7 402.9L846 396.4L845.6 313.6L841.3 314.7Z" fill="#2f2f2f" fill-opacity=".333"/>
<path d="M841 267L841.3 314.7L845.6 313.6L845.3 260.4Z" fill="#2f2f2f" fill-opacity=".250"/>
<path d="M834.7 408.9L841.7 402.9L841.3 314.7L834.2 316.4Z" fill="#545454" fill-opacity=".333"/>
<path d="M834 273L834.2 316.4L841.3 314.7L841 267Z" fill="#545454" fill-opacity=".250"/>
<path d="M825.2 414.2L834.7 408.9L834.2 316.4L829.2 317.7L824.7 318.3Z" fill="#777777" fill-opacity=".333"/>
<path d="M824.5 278.3L824.7 318.3L829.2 317.7L834.2 316.4L834 273Z" fill="#777777" fill-opacity=".250"/>
<path d="M813.7 418.6L825.2 414.2L824.7 318.3L813.2 320Z" fill="#979797" fill-opacity=".333"/>
<path d="M813 282.6L813.2 320L824.7 318.3L824.5 278.3Z" fill="#979797" fill-opacity=".250"/>
<path d="M800.5 421.8L813.7 418.6L813.2 320L800.6 321.8L800 321.8Z" fill="#b0b0b0" fill-opacity=".333"/>
<path d="M799.8 285.9L800 321.8L800.6 321.8L813.2 320L813 282.6Z" fill="#b0b0b0" fill-opacity=".250"/>
<path d="M786.2 423.9L800.5 421.8L800 321.8L785.7 322.5Z" fill="#c2c2c2" fill-opacity=".333"/>
<path d="M785.5 287.9L785.7 322.5L800 321.8L799.8 285.9Z" fill="#c2c2c2" fill-opacity=".250"/>
<path d="M771.3 424.6L786.2 423.9L785.7 322.5L770.8 323.2Z" fill="#cbcbcb" fill-opacity=".333"/>
<path d="M770.7 288.7L770.8 323.2L785.7 322.5L785.5 287.9Z" fill="#cbcbcb" fill-opacity=".250"/>
<path d="M756.4 424L771.3 424.6L770.8 323.2L755.9 322.6Z" fill="#cbcbcb" fill-opacity=".333"/>
<path d="M755.8 288.1L755.9 322.6L770.8 323.2L770.7 288.7Z" fill="#cbcbcb" fill-opacity=".250"/>
<path d="M742.1 422.1L756.4 424L755.9 322.6L741.6 322.1Z" fill="#c2c2c2" fill-opacity=".333"/>
<path d="M741.5 286.2L741.6 322.1L755.9 322.6L755.8 288.1Z" fill="#c2c2c2" fill-opacity=".250"/>
<path d="M728.9 419L742.1 422.1L741.6 322.1L741.1 322L728.4 320.4Z" fill="#b0b0b0" fill-opacity=".333"/>
<path d="M728.2 283L728.4 320.4L741.1 322L741.6 322.1L741.5 286.2Z" fill="#b0b0b0" fill-opacity=".250"/>
<path d="M717.3 414.8L728.9 419L728.4 320.4L716.9 318.8Z" fill="#979797" fill-opacity=".333"/>
<path d="M716.7 278.8L716.9 318.8L728.4 320.4L728.2 283Z" fill="#979797" fill-opacity=".250"/>
<path d="M707.8 409.6L717.3 414.8L716.9 318.8L712.4 318.3L707.4 317.1Z" fill="#777777" fill-opacity=".333"/>
<path d="M707.2 273.6L707.4 317.1L712.4 318.3L716.9 318.8L716.7 278.8Z" fill="#777777" fill-opacity=".250"/>
<path d="M700.8 403.6L707.8 409.6L707.4 317.1L700.3 315.4Z" fill="#545454" fill-opacity=".333"/>
<path d="M700.1 267.7L700.3 315.4L707.4 317.1L707.2 273.6Z" fill="#545454" fill-opacity=".250"/>
<path d="M696.4 397.2L700.8 403.6L700.3 315.4L696 314.4Z" fill="#2f2f2f" fill-opacity=".333"/>
<path d="M695.7 261.2L696 314.4L700.3 315.4L700.1 267.7Z" fill="#2f2f2f" fill-opacity=".250"/>
<path d="M694.9 390.4L696.4 397.2L696 314.4L694.5 314Z" fill="#0d0d0d" fill-opacity=".333"/>
<path d="M694.2 254.4L694.5 314L696 314.4L695.7 261.2Z" fill="#0d0d0d" fill-opacity=".250"/>
<path d="M694.2 254.4L695.7 261.2L695.6 247.7Z" fill="#0d0d0d" fill-opacity=".500"/>
<path d="M696.3 383.7L696 314.4L694.5 314L694.9 390.4Z" fill="#0d0d0d" fill-opacity=".250"/>
<path d="M695.7 261.2L694.2 254.4L694.5 314L696 314.4Z" fill="#0d0d0d" fill-opacity=".200"/>
<path d="M695.6 247.7L695.7 261.2L700.1 267.7L700 241.2Z" fill="#2f2f2f" fill-opacity=".500"/>
<path d="M696.3 383.7L700.6 377.2L700.3 315.4L696 314.4Z" fill="#2f2f2f" fill-opacity=".250"/>
<path d="M700.1 267.7L695.7 261.2L696 314.4L700.3 315.4Z" fill="#2f2f2f" fill-opacity=".200"/>
<path d="M700 241.2L700.1 267.7L707.2 273.6L707 235.2Z" fill="#545454" fill-opacity=".500"/>
<path d="M700.6 377.2L707.6 371.1L707.4 317.1L700.3 315.4Z" fill="#545454" fill-opacity=".250"/>
<path d="M707.2 273.6L700.1 267.7L700.3 315.4L707.4 317.1Z" fill="#545454" fill-opacity=".200"/>
<path d="M707 235.2L707.2 273.6L716.7 278.8L716.4 229.9Z" fill="#777777" fill-opacity=".500"/>
<path d="M707.6 371.1L717.1 365.9L716.9 318.8L712.4 318.3L707.4 317.1Z" fill="#777777" fill-opacity=".250"/>
<path d="M716.7 278.8L707.2 273.6L707.4 317.1L712.4 318.3L716.9 318.8Z" fill="#777777" fill-opacity=".200"/>
<path d="M716.4 229.9L716.7 278.8L728.2 283L728 225.5Z" fill="#979797" fill-opacity=".500"/>
<path d="M717.1 365.9L728.6 361.5L728.4 320.4L716.9 318.8Z" fill="#979797" fill-opacity=".250"/>
<path d="M728.2 283L716.7 278.8L716.9 318.8L728.4 320.4Z" fill="#979797" fill-opacity=".200"/>
<path d="M728 225.5L728.2 283L741.5 286.2L741.1 222.3Z" fill="#b0b0b0" fill-opacity=".500"/>
<path d="M728.6 361.5L741.8 358.2L741.6 322.1L741.1 322L728.4 320.4Z" fill="#b0b0b0" fill-opacity=".250"/>
<path d="M741.5 286.2L728.2 283L728.4 320.4L741.1 322L741.6 322.1Z" fill="#b0b0b0" fill-opacity=".200"/>
<path d="M741.1 222.3L741.5 286.2L755.8 288.1L755.4 220.2Z" fill="#c2c2c2" fill-opacity=".500"/>
<path d="M741.8 358.2L756.1 356.2L755.9 322.6L741.6 322.1Z" fill="#c2c2c2" fill-opacity=".250"/>
<path d="M755.8 288.1L741.5 286.2L741.6 322.1L755.9 322.6Z" fill="#c2c2c2" fill-opacity=".200"/>
<path d="M755.4 220.2L755.8 288.1L770.7 288.7L770.3 219.5Z" fill="#cbcbcb" fill-opacity=".500"/>
<path d="M756.1 356.2L771 355.5L770.8 323.2L755.9 322.6Z" fill="#cbcbcb" fill-opacity=".250"/>
<path d="M770.7 288.7L755.8 288.1L755.9 322.6L770.8 323.2Z" fill="#cbcbcb" fill-opacity=".200"/>
<path d="M770.3 219.5L770.7 288.7L785.5 287.9L785.2 220.1Z" fill="#cbcbcb" fill-opacity=".500"/>
<path d="M771 355.5L785.9 356.1L785.7 322.5L770.8 323.2Z" fill="#cbcbcb" fill-opacity=".250"/>
<path d="M785.5 287.9L770.7 288.7L770.8 323.2L785.7 322.5Z" fill="#cbcbcb" fill-opacity=".200"/>
<path d="M785.2 220.1L785.5 287.9L799.8 285.9L799.5 222Z" fill="#c2c2c2" fill-opacity=".500"/>
<path d="M785.9 356.1L800.2 357.9L800 321.8L785.7 322.5Z" fill="#c2c2c2" fill-opacity=".250"/>
<path d="M799.8 285.9L785.5 287.9L785.7 322.5L800 321.8Z" fill="#c2c2c2" fill-opacity=".200"/>
<path d="M799.5 222L799.8 285.9L813 282.6L812.7 225.1Z" fill="#b0b0b0" fill-opacity=".500"/>
<path d="M800.2 357.9L813.4 361.1L813.2 320L800.6 321.8L800 321.8Z" fill="#b0b0b0" fill-opacity=".250"/>
<path d="M813 282.6L799.8 285.9L800 321.8L800.6 321.8L813.2 320Z" fill="#b0b0b0" fill-opacity=".200"/>
<path d="M812.7 225.1L813 282.6L824.5 278.3L824.3 229.4Z" fill="#979797" fill-opacity=".500"/>
<path d="M813.4 361.1L825 365.3L824.7 318.3L813.2 320Z" fill="#979797" fill-opacity=".250"/>
<path d="M824.5 278.3L813 282.6L813.2 320L824.7 318.3Z" fill="#979797" fill-opacity=".200"/>
<path d="M824.3 229.4L824.5 278.3L834 273L833.8 234.5Z" fill="#777777" fill-opacity=".500"/>
<path d="M825 365.3L834.5 370.5L834.2 316.4L829.2 317.7L824.7 318.3Z" fill="#777777" fill-opacity=".250"/>
<path d="M834 273L824.5 278.3L824.7 318.3L829.2 317.7L834.2 316.4Z" fill="#777777" fill-opacity=".200"/>
<path d="M833.8 234.5L834 273L841 267L840.9 240.5Z" fill="#545454" fill-opacity=".500"/>
<path d="M834.5 370.5L841.6 376.5L841.3 314.7L834.2 316.4Z" fill="#545454" fill-opacity=".250"/>
<path d="M841 267L834 273L834.2 316.4L841.3 314.7Z" fill="#545454" fill-opacity=".200"/>
<path d="M840.9 240.5L841 267L845.3 260.4L845.3 247Z" fill="#2f2f2f" fill-opacity=".500"/>
<path d="M841.6 376.5L845.9 382.9L845.6 313.6L841.3 314.7Z" fill="#2f2f2f" fill-opacity=".250"/>
<path d="M845.3 260.4L841 267L841.3 314.7L845.6 313.6Z" fill="#2f2f2f" fill-opacity=".200"/>
<path d="M845.3 247L845.3 260.4L846.8 253.7Z" fill="#0d0d0d" fill-opacity=".500"/>
<path d="M847.1 313.3L845.6 313.6L845.9 382.9L847.4 389.7Z" fill="#0d0d0d" fill-opacity=".250"/>
<path d="M845.6 313.6L847.1 313.3L846.8 253.7L845.3 260.4Z" fill="#0d0d0d" fill-opacity=".200"/>
<path d="M847.4 389.7L845.9 382.9L841.6 376.5L834.5 370.5L825 365.3L813.4 361.1L800.2 357.9L785.9 356.1L771 355.5L756.1 356.2L741.8 358.2L728.6 361.5L717.1 365.9L707.6 371.1L700.6 377.2L696.3 383.7L694.9 390.4L696.4 397.2L700.8 403.6L707.8 409.6L717.3 414.8L728.9 419L742.1 422.1L756.4 424L771.3 424.6L786.2 423.9L800.5 421.8L813.7 418.6L825.2 414.2L834.7 408.9L841.7 402.9L846 396.4ZM821 394.3L818.2 398.6L813.5 402.6L807.2 406.2L799.5 409.1L790.7 411.2L781.2 412.6L771.3 413.1L761.3 412.7L751.8 411.4L743 409.3L735.3 406.5L728.9 403.1L724.2 399.1L721.3 394.8L720.3 390.3L721.3 385.8L724.1 381.5L728.8 377.4L735.1 373.9L742.8 371L751.6 368.8L761.1 367.5L771 367L781 367.4L790.5 368.6L799.3 370.7L807 373.6L813.4 377L818.1 381L821 385.3L822 389.8Z" fill="#686868" fill-opacity=".250"/>
<path d="M847.4 389.7L845.9 382.9L841.6 376.5L834.5 370.5L825 365.3L813.4 361.1L800.2 357.9L785.9 356.1L771 355.5L756.1 356.2L741.8 358.2L728.6 361.5L717.1 365.9L707.6 371.1L700.6 377.2L696.3 383.7L694.9 390.4L696.4 397.2L700.8 403.6L707.8 409.6L717.3 414.8L728.9 419L742.1 422.1L756.4 424L771.3 424.6L786.2 423.9L800.5 421.8L813.7 418.6L825.2 414.2L834.7 408.9L841.7 402.9L846 396.4ZM821 394.3L818.2 398.6L813.5 402.6L807.2 406.2L799.5 409.1L790.7 411.2L781.2 412.6L771.3 413.1L761.3 412.7L751.8 411.4L743 409.3L735.3 406.5L728.9 403.1L724.2 399.1L721.3 394.8L720.3 390.3L721.3 385.8L724.1 381.5L728.8 377.4L735.1 373.9L742.8 371L751.6 368.8L761.1 367.5L771 367L781 367.4L790.5 368.6L799.3 370.7L807 373.6L813.4 377L818.1 381L821 385.3L822 389.8Z" fill="#686868" fill-opacity=".200"/>
<path d="M719.9 113.8L719 118.4L719.3 189.4L720.3 189.3Z" fill="#0d0d0d"/>
<path d="M720.5 228.4L719.5 228.7L719.8 279.9L720.7 280.3Z" fill="#0d0d0d" fill-opacity=".333"/>
<path d="M720.3 189.3L719.3 189.4L719.5 228.7L720.5 228.4Z" fill="#0d0d0d" fill-opacity=".250"/>
<path d="M720.9 319.4L720 319.3L720.2 364.7L721.2 364.3Z" fill="#0d0d0d" fill-opacity=".200"/>
<path d="M721.3 385.8L721.2 364.3L720.2 364.7L720.3 390.3ZM720.7 280.3L719.8 279.9L720 319.3L720.9 319.4Z" fill="#0d0d0d" fill-opacity=".167"/>
<path d="M722.8 109.5L719.9 113.8L720.3 189.3L723.2 188.8Z" fill="#2f2f2f"/>
<path d="M723.4 227.3L720.5 228.4L720.7 280.3L723.6 281.3Z" fill="#2f2f2f" fill-opacity=".333"/>
<path d="M723.2 188.8L720.3 189.3L720.5 228.4L723.4 227.3Z" fill="#2f2f2f" fill-opacity=".250"/>
<path d="M723.8 319.8L720.9 319.4L721.2 364.3L724 363.2Z" fill="#2f2f2f" fill-opacity=".200"/>
<path d="M724.1 381.5L724 363.2L721.2 364.3L721.3 385.8ZM723.6 281.3L720.7 280.3L720.9 319.4L723.8 319.8Z" fill="#2f2f2f" fill-opacity=".167"/>
<path d="M727.5 105.5L722.8 109.5L723.2 188.8L727.9 188.2Z" fill="#545454"/>
<path d="M728.1 225.5L728 225.5L723.4 227.3L723.6 281.3L728.2 283L728.3 283.1Z" fill="#545454" fill-opacity=".333"/>
<path d="M727.9 188.2L723.2 188.8L723.4 227.3L728 225.5L728.1 225.5Z" fill="#545454" fill-opacity=".250"/>
<path d="M728.5 320.4L723.8 319.8L724 363.2L728.6 361.5L728.7 361.5Z" fill="#545454" fill-opacity=".200"/>
<path d="M728.8 377.4L728.7 361.5L728.6 361.5L724 363.2L724.1 381.5ZM728.3 283.1L728.2 283L723.6 281.3L723.8 319.8L728.5 320.4Z" fill="#545454" fill-opacity=".167"/>
<path d="M733.8 102L727.5 105.5L727.9 188.2L734.2 187.3Z" fill="#777777"/>
<path d="M734.4 223.9L728.1 225.5L728.3 283.1L734.7 284.6Z" fill="#777777" fill-opacity=".333"/>
<path d="M734.2 187.3L727.9 188.2L728.1 225.5L734.4 223.9Z" fill="#777777" fill-opacity=".250"/>
<path d="M734.9 321.2L728.5 320.4L728.7 361.5L735 359.9Z" fill="#777777" fill-opacity=".200"/>
<path d="M735.1 373.9L735 359.9L728.7 361.5L728.8 377.4ZM734.7 284.6L728.3 283.1L728.5 320.4L734.9 321.2Z" fill="#777777" fill-opacity=".167"/>
<path d="M741.5 99.1L733.8 102L734.2 187.3L740.4 186.4L741.9 186.3Z" fill="#979797"/>
<path d="M742.1 222.1L741.1 222.3L734.4 223.9L734.7 284.6L741.5 286.2L742.4 286.3Z" fill="#979797" fill-opacity=".333"/>
<path d="M741.9 186.3L740.4 186.4L734.2 187.3L734.4 223.9L741.1 222.3L742.1 222.1Z" fill="#979797" fill-opacity=".250"/>
<path d="M742.6 322.1L741.1 322L734.9 321.2L735 359.9L741.8 358.2L742.7 358.1Z" fill="#979797" fill-opacity=".200"/>
<path d="M742.8 371L742.7 358.1L741.8 358.2L735 359.9L735.1 373.9ZM742.4 286.3L741.5 286.2L734.7 284.6L734.9 321.2L741.1 322L742.6 322.1Z" fill="#979797" fill-opacity=".167"/>
<path d="M750.3 96.9L741.5 99.1L741.9 186.3L750.7 185.9Z" fill="#b0b0b0"/>
<path d="M750.9 220.9L742.1 222.1L742.4 286.3L751.2 287.5Z" fill="#b0b0b0" fill-opacity=".333"/>
<path d="M750.7 185.9L741.9 186.3L742.1 222.1L750.9 220.9Z" fill="#b0b0b0" fill-opacity=".250"/>
<path d="M751.4 322.5L742.6 322.1L742.7 358.1L751.5 356.9Z" fill="#b0b0b0" fill-opacity=".200"/>
<path d="M751.6 368.8L751.5 356.9L742.7 358.1L742.8 371ZM751.2 287.5L742.4 286.3L742.6 322.1L751.4 322.5Z" fill="#b0b0b0" fill-opacity=".167"/>
<path d="M759.8 95.5L750.3 96.9L750.7 185.9L760.2 185.4Z" fill="#c2c2c2"/>
<path d="M760.4 220L755.4 220.2L750.9 220.9L751.2 287.5L755.8 288.1L760.7 288.3Z" fill="#c2c2c2" fill-opacity=".333"/>
<path d="M760.2 185.4L750.7 185.9L750.9 220.9L755.4 220.2L760.4 220Z" fill="#c2c2c2" fill-opacity=".250"/>
<path d="M760.9 322.8L751.4 322.5L751.5 356.9L756.1 356.2L761.1 356Z" fill="#c2c2c2" fill-opacity=".200"/>
<path d="M761.1 367.5L761.1 356L756.1 356.2L751.5 356.9L751.6 368.8ZM760.7 288.3L755.8 288.1L751.2 287.5L751.4 322.5L760.9 322.8Z" fill="#c2c2c2" fill-opacity=".167"/>
<path d="M769.7 95L759.8 95.5L760.2 185.4L770.1 184.9Z" fill="#cbcbcb"/>
<path d="M770.3 219.5L760.4 220L760.7 288.3L770.7 288.7Z" fill="#cbcbcb" fill-opacity=".333"/>
<path d="M770.1 184.9L760.2 185.4L760.4 220L770.3 219.5Z" fill="#cbcbcb" fill-opacity=".250"/>
<path d="M770.8 323.2L760.9 322.8L761.1 356L771 355.5Z" fill="#cbcbcb" fill-opacity=".200"/>
<path d="M771 367L771 355.5L761.1 356L761.1 367.5ZM770.7 288.7L760.7 288.3L760.9 322.8L770.8 323.2Z" fill="#cbcbcb" fill-opacity=".167"/>
<path d="M779.6 95.4L769.7 95L770.1 184.9L780.1 185.3Z" fill="#cbcbcb"/>
<path d="M780.2 219.9L770.3 219.5L770.7 288.7L780.6 288.2Z" fill="#cbcbcb" fill-opacity=".333"/>
<path d="M780.1 185.3L770.1 184.9L770.3 219.5L780.2 219.9Z" fill="#cbcbcb" fill-opacity=".250"/>
<path d="M780.7 322.7L770.8 323.2L771 355.5L780.9 355.9Z" fill="#cbcbcb" fill-opacity=".200"/>
<path d="M781 367.4L780.9 355.9L771 355.5L771 367ZM780.6 288.2L770.7 288.7L770.8 323.2L780.7 322.7Z" fill="#cbcbcb" fill-opacity=".167"/>
<path d="M789.2 96.7L779.6 95.4L780.1 185.3L789.6 185.7Z" fill="#c2c2c2"/>
<path d="M789.8 220.7L785.2 220.1L780.2 219.9L780.6 288.2L785.5 287.9L790.1 287.3Z" fill="#c2c2c2" fill-opacity=".333"/>
<path d="M789.6 185.7L780.1 185.3L780.2 219.9L785.2 220.1L789.8 220.7Z" fill="#c2c2c2" fill-opacity=".250"/>
<path d="M790.3 322.3L780.7 322.7L780.9 355.9L785.9 356.1L790.4 356.7Z" fill="#c2c2c2" fill-opacity=".200"/>
<path d="M790.5 368.6L790.4 356.7L785.9 356.1L780.9 355.9L781 367.4ZM790.1 287.3L785.5 287.9L780.6 288.2L780.7 322.7L790.3 322.3Z" fill="#c2c2c2" fill-opacity=".167"/>
<path d="M798 98.8L789.2 96.7L789.6 185.7L798.4 186Z" fill="#b0b0b0"/>
<path d="M798.6 221.9L789.8 220.7L790.1 287.3L798.9 286Z" fill="#b0b0b0" fill-opacity=".333"/>
<path d="M798.4 186L789.6 185.7L789.8 220.7L798.6 221.9Z" fill="#b0b0b0" fill-opacity=".250"/>
<path d="M799.1 321.8L790.3 322.3L790.4 356.7L799.2 357.8Z" fill="#b0b0b0" fill-opacity=".200"/>
<path d="M799.3 370.7L799.2 357.8L790.4 356.7L790.5 368.6ZM798.9 286L790.1 287.3L790.3 322.3L799.1 321.8Z" fill="#b0b0b0" fill-opacity=".167"/>
<path d="M805.7 101.6L798 98.8L798.4 186L799.9 186.1L806.1 186.9Z" fill="#979797"/>
<path d="M806.3 223.6L799.5 222L798.6 221.9L798.9 286L799.8 285.9L806.6 284.2Z" fill="#979797" fill-opacity=".333"/>
<path d="M806.1 186.9L799.9 186.1L798.4 186L798.6 221.9L799.5 222L806.3 223.6Z" fill="#979797" fill-opacity=".250"/>
<path d="M806.8 320.9L800.6 321.8L799.1 321.8L799.2 357.8L800.2 357.9L807 359.6Z" fill="#979797" fill-opacity=".200"/>
<path d="M807 373.6L807 359.6L800.2 357.9L799.2 357.8L799.3 370.7ZM806.6 284.2L799.8 285.9L798.9 286L799.1 321.8L800.6 321.8L806.8 320.9Z" fill="#979797" fill-opacity=".167"/>
<path d="M812 105.1L805.7 101.6L806.1 186.9L812.4 187.8Z" fill="#777777"/>
<path d="M812.6 225.1L806.3 223.6L806.6 284.2L812.9 282.6Z" fill="#777777" fill-opacity=".333"/>
<path d="M812.4 187.8L806.1 186.9L806.3 223.6L812.6 225.1Z" fill="#777777" fill-opacity=".250"/>
<path d="M813.1 320L806.8 320.9L807 359.6L813.3 361.1Z" fill="#777777" fill-opacity=".200"/>
<path d="M813.4 377L813.3 361.1L807 359.6L807 373.6ZM812.9 282.6L806.6 284.2L806.8 320.9L813.1 320Z" fill="#777777" fill-opacity=".167"/>
<path d="M816.7 109L812 105.1L812.4 187.8L817.1 188.4Z" fill="#545454"/>
<path d="M817.3 226.8L812.7 225.1L812.6 225.1L812.9 282.6L813 282.6L817.6 280.9Z" fill="#545454" fill-opacity=".333"/>
<path d="M817.1 188.4L812.4 187.8L812.6 225.1L812.7 225.1L817.3 226.8Z" fill="#545454" fill-opacity=".250"/>
<path d="M817.8 319.3L813.1 320L813.3 361.1L813.4 361.1L818 362.8Z" fill="#545454" fill-opacity=".200"/>
<path d="M818.1 381L818 362.8L813.4 361.1L813.3 361.1L813.4 377ZM817.6 280.9L813 282.6L812.9 282.6L813.1 320L817.8 319.3Z" fill="#545454" fill-opacity=".167"/>
<path d="M819.7 113.4L816.7 109L817.1 188.4L820 188.8Z" fill="#2f2f2f"/>
<path d="M820.2 227.9L817.3 226.8L817.6 280.9L820.5 279.8Z" fill="#2f2f2f" fill-opacity=".333"/>
<path d="M820 188.8L817.1 188.4L817.3 226.8L820.2 227.9Z" fill="#2f2f2f" fill-opacity=".250"/>
<path d="M820.7 318.9L817.8 319.3L818 362.8L820.9 363.8Z" fill="#2f2f2f" fill-opacity=".200"/>
<path d="M821 385.3L820.9 363.8L818 362.8L818.1 381ZM820.5 279.8L817.6 280.9L817.8 319.3L820.7 318.9Z" fill="#2f2f2f" fill-opacity=".167"/>
<path d="M820.7 117.9L819.7 113.4L820 188.8L821 188.9Z" fill="#0d0d0d"/>
<path d="M821.2 228.2L820.2 227.9L820.5 279.8L821.5 279.4Z" fill="#0d0d0d" fill-opacity=".333"/>
<path d="M821 188.9L820 188.8L820.2 227.9L821.2 228.2Z" fill="#0d0d0d" fill-opacity=".250"/>
<path d="M821.7 318.8L820.7 318.9L820.9 363.8L821.9 364.2Z" fill="#0d0d0d" fill-opacity=".200"/>
<path d="M822 389.8L821.9 364.2L820.9 363.8L821 385.3ZM821.5 279.4L820.5 279.8L820.7 318.9L821.7 318.8Z" fill="#0d0d0d" fill-opacity=".167"/>
<path d="M819.7 122.4L820 188.8L821 188.9L820.7 117.9Z" fill="#0d0d0d" fill-opacity=".500"/>
<path d="M822 389.8L821 385.3L821 394.3ZM820.5 279.8L821.5 279.4L821.3 250.3L821.2 228.2L820.2 227.9Z" fill="#0d0d0d" fill-opacity=".250"/>
<path d="M820.2 227.9L821.2 228.2L821 188.9L820 188.8Z" fill="#0d0d0d" fill-opacity=".200"/>
<path d="M820.9 363.8L821.9 364.2L821.7 318.8L820.7 318.9Z" fill="#0d0d0d" fill-opacity=".167"/>
<path d="M821 385.3L822 389.8L821.9 364.2L820.9 363.8ZM820.7 318.9L821.7 318.8L821.5 279.4L820.5 279.8Z" fill="#0d0d0d" fill-opacity=".143"/>
<path d="M819.7 122.4L816.8 126.7L817.1 188.4L820 188.8Z" fill="#2f2f2f" fill-opacity=".500"/>
<path d="M821 394.3L821 385.3L818.1 381L818.2 398.6ZM817.6 280.9L820.5 279.8L820.2 227.9L817.3 226.8Z" fill="#2f2f2f" fill-opacity=".250"/>
<path d="M817.3 226.8L820.2 227.9L820 188.8L817.1 188.4Z" fill="#2f2f2f" fill-opacity=".200"/>
<path d="M818 362.8L820.9 363.8L820.7 318.9L817.8 319.3Z" fill="#2f2f2f" fill-opacity=".167"/>
<path d="M818.1 381L821 385.3L820.9 363.8L818 362.8ZM817.8 319.3L820.7 318.9L820.5 279.8L817.6 280.9Z" fill="#2f2f2f" fill-opacity=".143"/>
<path d="M816.8 126.7L812.2 130.7L812.4 187.8L817.1 188.4Z" fill="#545454" fill-opacity=".500"/>
<path d="M818.2 398.6L818.1 381L813.4 377L813.5 402.6ZM812.9 282.6L813 282.6L817.6 280.9L817.3 226.8L812.7 225.1L812.6 225.1Z" fill="#545454" fill-opacity=".250"/>
<path d="M812.6 225.1L812.7 225.1L817.3 226.8L817.1 188.4L812.4 187.8Z" fill="#545454" fill-opacity=".200"/>
<path d="M813.3 361.1L813.4 361.1L818 362.8L817.8 319.3L813.1 320Z" fill="#545454" fill-opacity=".167"/>
<path d="M813.4 377L818.1 381L818 362.8L813.4 361.1L813.3 361.1ZM813.1 320L817.8 319.3L817.6 280.9L813 282.6L812.9 282.6Z" fill="#545454" fill-opacity=".143"/>
<path d="M812.2 130.7L805.9 134.2L806.1 186.9L812.4 187.8Z" fill="#777777" fill-opacity=".500"/>
<path d="M813.5 402.6L813.4 377L807 373.6L807.2 406.2ZM806.6 284.2L812.9 282.6L812.6 225.1L806.3 223.6Z" fill="#777777" fill-opacity=".250"/>
<path d="M806.3 223.6L812.6 225.1L812.4 187.8L806.1 186.9Z" fill="#777777" fill-opacity=".200"/>
<path d="M807 359.6L813.3 361.1L813.1 320L806.8 320.9Z" fill="#777777" fill-opacity=".167"/>
<path d="M807 373.6L813.4 377L813.3 361.1L807 359.6ZM806.8 320.9L813.1 320L812.9 282.6L806.6 284.2Z" fill="#777777" fill-opacity=".143"/>
<path d="M805.9 134.2L798.2 137.1L798.4 186L799.9 186.1L806.1 186.9Z" fill="#979797" fill-opacity=".500"/>
<path d="M807.2 406.2L807 373.6L799.3 370.7L799.5 409.1ZM798.9 286L799.8 285.9L806.6 284.2L806.3 223.6L799.5 222L798.6 221.9Z" fill="#979797" fill-opacity=".250"/>
<path d="M798.6 221.9L799.5 222L806.3 223.6L806.1 186.9L799.9 186.1L798.4 186Z" fill="#979797" fill-opacity=".200"/>
<path d="M799.2 357.8L800.2 357.9L807 359.6L806.8 320.9L800.6 321.8L799.1 321.8Z" fill="#979797" fill-opacity=".167"/>
<path d="M799.3 370.7L807 373.6L807 359.6L800.2 357.9L799.2 357.8ZM799.1 321.8L800.6 321.8L806.8 320.9L806.6 284.2L799.8 285.9L798.9 286Z" fill="#979797" fill-opacity=".143"/>
<path d="M798.2 137.1L789.4 139.3L789.6 185.7L798.4 186Z" fill="#b0b0b0" fill-opacity=".500"/>
<path d="M799.5 409.1L799.3 370.7L790.5 368.6L790.7 411.2ZM790.1 287.3L798.9 286L798.6 221.9L789.8 220.7Z" fill="#b0b0b0" fill-opacity=".250"/>
<path d="M789.8 220.7L798.6 221.9L798.4 186L789.6 185.7Z" fill="#b0b0b0" fill-opacity=".200"/>
<path d="M790.4 356.7L799.2 357.8L799.1 321.8L790.3 322.3Z" fill="#b0b0b0" fill-opacity=".167"/>
<path d="M790.5 368.6L799.3 370.7L799.2 357.8L790.4 356.7ZM790.3 322.3L799.1 321.8L798.9 286L790.1 287.3Z" fill="#b0b0b0" fill-opacity=".143"/>
<path d="M789.4 139.3L779.8 140.7L780.1 185.3L789.6 185.7Z" fill="#c2c2c2" fill-opacity=".500"/>
<path d="M790.7 411.2L790.5 368.6L781 367.4L781.2 412.6ZM780.6 288.2L785.5 287.9L790.1 287.3L789.8 220.7L785.2 220.1L780.2 219.9Z" fill="#c2c2c2" fill-opacity=".250"/>
<path d="M780.2 219.9L785.2 220.1L789.8 220.7L789.6 185.7L780.1 185.3Z" fill="#c2c2c2" fill-opacity=".200"/>
<path d="M780.9 355.9L785.9 356.1L790.4 356.7L790.3 322.3L780.7 322.7Z" fill="#c2c2c2" fill-opacity=".167"/>
<path d="M781 367.4L790.5 368.6L790.4 356.7L785.9 356.1L780.9 355.9ZM780.7 322.7L790.3 322.3L790.1 287.3L785.5 287.9L780.6 288.2Z" fill="#c2c2c2" fill-opacity=".143"/>
<path d="M779.8 140.7L769.9 141.2L770.1 184.9L780.1 185.3Z" fill="#cbcbcb" fill-opacity=".500"/>
<path d="M781.2 412.6L781 367.4L771 367L771.3 413.1ZM770.7 288.7L780.6 288.2L780.2 219.9L770.3 219.5Z" fill="#cbcbcb" fill-opacity=".250"/>
<path d="M770.3 219.5L780.2 219.9L780.1 185.3L770.1 184.9Z" fill="#cbcbcb" fill-opacity=".200"/>
<path d="M771 355.5L780.9 355.9L780.7 322.7L770.8 323.2Z" fill="#cbcbcb" fill-opacity=".167"/>
<path d="M771 367L781 367.4L780.9 355.9L771 355.5ZM770.8 323.2L780.7 322.7L780.6 288.2L770.7 288.7Z" fill="#cbcbcb" fill-opacity=".143"/>
<path d="M769.9 141.2L760 140.8L760.2 185.4L770.1 184.9Z" fill="#cbcbcb" fill-opacity=".500"/>
<path d="M771.3 413.1L771 367L761.1 367.5L761.3 412.7ZM760.7 288.3L770.7 288.7L770.3 219.5L760.4 220Z" fill="#cbcbcb" fill-opacity=".250"/>
<path d="M760.4 220L770.3 219.5L770.1 184.9L760.2 185.4Z" fill="#cbcbcb" fill-opacity=".200"/>
<path d="M761.1 356L771 355.5L770.8 323.2L760.9 322.8Z" fill="#cbcbcb" fill-opacity=".167"/>
<path d="M761.1 367.5L771 367L771 355.5L761.1 356ZM760.9 322.8L770.8 323.2L770.7 288.7L760.7 288.3Z" fill="#cbcbcb" fill-opacity=".143"/>
<path d="M760 140.8L750.5 139.5L750.7 185.9L760.2 185.4Z" fill="#c2c2c2" fill-opacity=".500"/>
<path d="M761.3 412.7L761.1 367.5L751.6 368.8L751.8 411.4ZM751.2 287.5L755.8 288.1L760.7 288.3L760.4 220L755.4 220.2L750.9 220.9Z" fill="#c2c2c2" fill-opacity=".250"/>
<path d="M750.9 220.9L755.4 220.2L760.4 220L760.2 185.4L750.7 185.9Z" fill="#c2c2c2" fill-opacity=".200"/>
<path d="M751.5 356.9L756.1 356.2L761.1 356L760.9 322.8L751.4 322.5Z" fill="#c2c2c2" fill-opacity=".167"/>
<path d="M751.6 368.8L761.1 367.5L761.1 356L756.1 356.2L751.5 356.9ZM751.4 322.5L760.9 322.8L760.7 288.3L755.8 288.1L751.2 287.5Z" fill="#c2c2c2" fill-opacity=".143"/>
<path d="M750.5 139.5L741.7 137.4L741.9 186.3L750.7 185.9Z" fill="#b0b0b0" fill-opacity=".500"/>
<path d="M751.8 411.4L751.6 368.8L742.8 371L743 409.3ZM742.4 286.3L751.2 287.5L750.9 220.9L742.1 222.1Z" fill="#b0b0b0" fill-opacity=".250"/>
<path d="M742.1 222.1L750.9 220.9L750.7 185.9L741.9 186.3Z" fill="#b0b0b0" fill-opacity=".200"/>
<path d="M742.7 358.1L751.5 356.9L751.4 322.5L742.6 322.1Z" fill="#b0b0b0" fill-opacity=".167"/>
<path d="M742.8 371L751.6 368.8L751.5 356.9L742.7 358.1ZM742.6 322.1L751.4 322.5L751.2 287.5L742.4 286.3Z" fill="#b0b0b0" fill-opacity=".143"/>
<path d="M741.7 137.4L733.9 134.6L734.2 187.3L740.4 186.4L741.9 186.3Z" fill="#979797" fill-opacity=".500"/>
<path d="M743 409.3L742.8 371L735.1 373.9L735.3 406.5ZM734.7 284.6L741.5 286.2L742.4 286.3L742.1 222.1L741.1 222.3L734.4 223.9Z" fill="#979797" fill-opacity=".250"/>
<path d="M734.4 223.9L741.1 222.3L742.1 222.1L741.9 186.3L740.4 186.4L734.2 187.3Z" fill="#979797" fill-opacity=".200"/>
<path d="M735 359.9L741.8 358.2L742.7 358.1L742.6 322.1L741.1 322L734.9 321.2Z" fill="#979797" fill-opacity=".167"/>
<path d="M735.1 373.9L742.8 371L742.7 358.1L741.8 358.2L735 359.9ZM734.9 321.2L741.1 322L742.6 322.1L742.4 286.3L741.5 286.2L734.7 284.6Z" fill="#979797" fill-opacity=".143"/>
<path d="M733.9 134.6L727.6 131.1L727.9 188.2L734.2 187.3Z" fill="#777777" fill-opacity=".500"/>
<path d="M735.3 406.5L735.1 373.9L728.8 377.4L728.9 403.1ZM728.3 283.1L734.7 284.6L734.4 223.9L728.1 225.5Z" fill="#777777" fill-opacity=".250"/>
<path d="M728.1 225.5L734.4 223.9L734.2 187.3L727.9 188.2Z" fill="#777777" fill-opacity=".200"/>
<path d="M728.7 361.5L735 359.9L734.9 321.2L728.5 320.4Z" fill="#777777" fill-opacity=".167"/>
<path d="M728.8 377.4L735.1 373.9L735 359.9L728.7 361.5ZM728.5 320.4L734.9 321.2L734.7 284.6L728.3 283.1Z" fill="#777777" fill-opacity=".143"/>
<path d="M727.6 131.1L722.9 127.2L723.2 188.8L727.9 188.2Z" fill="#545454" fill-opacity=".500"/>
<path d="M728.9 403.1L728.8 377.4L724.1 381.5L724.2 399.1ZM723.6 281.3L728.2 283L728.3 283.1L728.1 225.5L728 225.5L723.4 227.3Z" fill="#545454" fill-opacity=".250"/>
<path d="M723.4 227.3L728 225.5L728.1 225.5L727.9 188.2L723.2 188.8Z" fill="#545454" fill-opacity=".200"/>
<path d="M724 363.2L728.6 361.5L728.7 361.5L728.5 320.4L723.8 319.8Z" fill="#545454" fill-opacity=".167"/>
<path d="M724.1 381.5L728.8 377.4L728.7 361.5L728.6 361.5L724 363.2ZM723.8 319.8L728.5 320.4L728.3 283.1L728.2 283L723.6 281.3Z" fill="#545454" fill-opacity=".143"/>
<path d="M722.9 127.2L720 122.8L720.3 189.3L723.2 188.8Z" fill="#2f2f2f" fill-opacity=".500"/>
<path d="M724.2 399.1L724.1 381.5L721.3 385.8L721.3 394.8ZM720.7 280.3L723.6 281.3L723.4 227.3L720.5 228.4Z" fill="#2f2f2f" fill-opacity=".250"/>
<path d="M720.5 228.4L723.4 227.3L723.2 188.8L720.3 189.3Z" fill="#2f2f2f" fill-opacity=".200"/>
<path d="M721.2 364.3L724 363.2L723.8 319.8L720.9 319.4Z" fill="#2f2f2f" fill-opacity=".167"/>
<path d="M721.3 385.8L724.1 381.5L724 363.2L721.2 364.3ZM720.9 319.4L723.8 319.8L723.6 281.3L720.7 280.3Z" fill="#2f2f2f" fill-opacity=".143"/>
<path d="M720 122.8L719 118.4L719.3 189.4L720.3 189.3Z" fill="#0d0d0d" fill-opacity=".500"/>
<path d="M721.3 394.8L721.3 385.8L720.3 390.3ZM719.8 279.9L720.7 280.3L720.5 228.4L719.5 228.7L719.6 256.6Z" fill="#0d0d0d" fill-opacity=".250"/>
<path d="M720.3 189.3L719.3 189.4L719.5 228.7L720.5 228.4Z" fill="#0d0d0d" fill-opacity=".200"/>
<path d="M720.2 364.7L721.2 364.3L720.9 319.4L720 319.3Z" fill="#0d0d0d" fill-opacity=".167"/>
<path d="M720.3 390.3L721.3 385.8L721.2 364.3L720.2 364.7ZM720 319.3L720.9 319.4L720.7 280.3L719.8 279.9Z" fill="#0d0d0d" fill-opacity=".143"/>
<path d="M820.7 117.9L819.7 113.4L816.7 109L812 105.1L805.7 101.6L798 98.8L789.2 96.7L779.6 95.4L769.7 95L759.8 95.5L750.3 96.9L741.5 99.1L733.8 102L727.5 105.5L722.8 109.5L719.9 113.8L719 118.4L720 122.8L722.9 127.2L727.6 131.1L733.9 134.6L741.7 137.4L750.5 139.5L760 140.8L769.9 141.2L779.8 140.7L789.4 139.3L798.2 137.1L805.9 134.2L812.2 130.7L816.8 126.7L819.7 122.4Z" fill="#686868" fill-opacity=".500"/>
<path d="M720 122.8L722.9 127.2L727.6 131.1L733.9 134.6L741.7 137.4L750.5 139.5L760 140.8L769.9 141.2L779.8 140.7L789.4 139.3L798.2 137.1L805.9 134.2L812.2 130.7L816.8 126.7L819.7 122.4L820.7 117.9L819.7 113.4L816.7 109L812 105.1L805.7 101.6L798 98.8L789.2 96.7L779.6 95.4L769.7 95L759.8 95.5L750.3 96.9L741.5 99.1L733.8 102L727.5 105.5L722.8 109.5L719.9 113.8L719 118.4Z" fill="#686868" fill-opacity=".333"/>
</g>
<g fill="none" stroke-width="1.05">
<path d="M711.8 190.5L740.4 186.4M799.9 186.1L828.5 189.9" stroke="#000000" stroke-opacity="0.35"/>
<path d="M712.9 417.1L741.5 413M801 412.7L829.7 416.5M686 310.3L712.3 303.8M829.1 303.2L855.5 309.5M685.9 287.6L712.2 281.1M829 280.5L855.4 286.8M711.9 213.1L740.5 209M800 208.8L828.7 212.5M829.2 317.7L855.5 311.2M686 312L712.4 318.3M685.9 287.6L712.3 303.8M685.8 265L712.2 281.1M711.9 213.1L740.6 231.7M711.8 190.5L740.5 209M800 208.8L828.8 235.2M799.9 186.1L828.7 212.5M829 280.5L855.5 309.5M828.9 257.9L855.4 286.8" stroke="#181818" stroke-opacity="0.25"/>
<path d="M712.7 371.8L741.3 367.7M800.8 367.4L829.4 371.2M712.3 303.8L740.9 299.7M800.5 299.4L829.1 303.2M800.8 367.1L829.4 363M712.6 363.6L741.3 367.4M800.9 389.7L829.4 363M712.8 386.2L741.3 367.4M712.3 303.8L741.1 322.4M712.2 281.1L740.9 299.7M800.5 299.4L829.2 325.9M800.4 276.7L829.1 303.2" stroke="#242424" stroke-opacity="0.15"/>
<path d="M800.6 321.8L829.2 317.7M712.4 318.3L741.1 322" stroke="#242424" stroke-opacity="0.2"/>
<path d="M712.3 303.8L712.5 326.4M712.2 281.1L712.3 303.8M829.1 303.2L829.2 325.9M829 280.5L829.1 303.2" stroke="#242424" stroke-opacity="0.25"/>
<path d="M686.3 378.3L712.7 371.8M829.4 371.2L855.8 377.4M686.2 355.6L712.6 349.1M829.3 348.5L855.7 354.8M686.1 333L712.5 326.4M829.2 325.9L855.6 332.1M712.2 281.1L740.8 277M800.4 276.7L829 280.5M712.1 258.4L740.7 254.4M800.2 254.1L828.9 257.9M829.4 363L855.7 356.5M686.2 357.3L712.6 363.6M712 235.8L740.6 231.7M800.1 231.4L828.8 235.2M829.3 340.3L855.6 333.8M686.1 334.7L712.5 340.9M829.5 385.7L855.7 356.5M829.4 363L855.6 333.8M829.3 340.3L855.5 311.2M686.4 380L712.6 363.6M686.2 357.3L712.5 340.9M686.1 334.7L712.4 318.3M686.2 355.6L712.7 371.8M686.1 333L712.6 349.1M686 310.3L712.5 326.4M712.1 258.4L740.8 277M712 235.8L740.7 254.4M800.2 254.1L829 280.5M800.1 231.4L828.9 257.9M829.3 348.5L855.8 377.4M829.2 325.9L855.7 354.8M829.1 303.2L855.6 332.1" stroke="#242424" stroke-opacity="0.3"/>
<path d="M783.9 956.5L793.4 955.1M773.9 957L783.9 956.5M764 956.6L773.9 957M754.5 955.3L764 956.6M783.7 933.8L793.3 932.5M773.8 934.3L783.7 933.8M763.9 933.9L773.8 934.3M754.4 932.7L763.9 933.9M783.9 956.5L793.3 932.5M783.7 933.8L793.2 909.8M783.7 933.8L783.9 956.5M783.6 911.2L783.7 933.8M773.9 957L783.7 933.8M773.8 934.3L783.6 911.2M773.8 934.3L773.9 957M773.7 911.7L773.8 934.3M764 956.6L773.8 934.3M763.9 933.9L773.7 911.7M763.9 933.9L764 956.6M763.8 911.3L763.9 933.9M754.5 955.3L763.9 933.9M754.4 932.7L763.8 911.3M750.4 124.1L759.9 122.7M759.9 122.7L769.8 122.2M769.8 122.2L779.8 122.6M779.8 122.6L789.3 123.9M750.3 96.9L759.8 95.5M759.8 95.5L769.7 95M769.7 95L779.6 95.4M779.6 95.4L789.2 96.7M750.4 124.1L760.1 149.9M750.3 96.9L759.9 122.7M759.9 122.7L760.1 149.9M759.8 95.5L759.9 122.7M759.9 122.7L770 149.4M759.8 95.5L769.8 122.2M769.8 122.2L770 149.4M769.7 95L769.8 122.2M769.8 122.2L779.9 149.8M769.7 95L779.8 122.6M779.8 122.6L779.9 149.8M779.6 95.4L779.8 122.6M779.8 122.6L789.4 151.1M779.6 95.4L789.3 123.9" stroke="#242424" stroke-opacity="0.4"/>
<path d="M685.8 265L712.1 258.4M828.9 257.9L855.3 264.1M685.7 242.3L712.1 258.4M828.8 235.2L855.3 264.1" stroke="#242424" stroke-opacity="0.6"/>
<path d="M712.6 349.1L741.2 345M800.7 344.7L829.3 348.5M712.5 326.4L741.1 322.4M800.6 322.1L829.2 325.9M800.7 344.4L829.3 340.3M712.5 340.9L741.2 344.7M800.8 367.1L829.3 340.3M800.7 344.4L829.2 317.7M712.6 363.6L741.2 344.7M712.5 340.9L741.1 322M712.6 349.1L741.3 367.7M712.5 326.4L741.2 345M800.7 344.7L829.4 371.2M800.6 322.1L829.3 348.5" stroke="#303030" stroke-opacity="0.2"/>
<path d="M741.5 413L771.3 411.5M771.3 411.5L801 412.7M686.5 400.9L712.8 394.4M829.6 393.8L856 400.1M829.5 385.7L855.9 379.1M686.4 380L712.8 386.2M829.6 408.3L855.9 379.1M686.5 402.6L712.8 386.2M686.3 378.3L712.8 394.4M740.5 209L740.6 231.7M740.4 186.4L740.5 209M800 208.8L800.1 231.4M799.9 186.1L800 208.8M829.4 371.2L856 400.1M716.4 229.9L728 225.5M812.7 225.1L824.3 229.4" stroke="#303030" stroke-opacity="0.25"/>
<path d="M793.4 955.1L802.2 952.9M745.7 953.2L754.5 955.3M793.3 932.5L802.1 930.3M745.6 930.6L754.4 932.7M793.4 955.1L802.1 930.3M793.3 932.5L802 907.6M793.3 932.5L793.4 955.1M793.2 909.8L793.3 932.5M754.4 932.7L754.5 955.3M754.3 910L754.4 932.7M745.7 953.2L754.4 932.7M745.6 930.6L754.3 910M685.7 242.3L712 235.8M828.8 235.2L855.2 241.5M685.6 219.6L711.9 213.1M828.7 212.5L855.1 218.8M685.4 197L711.8 190.5M828.5 189.9L855 196.1M685.6 219.6L712 235.8M685.4 197L711.9 213.1M711.9 213.1L712 235.8M711.8 190.5L711.9 213.1M828.7 212.5L828.8 235.2M828.5 189.9L828.7 212.5M828.7 212.5L855.2 241.5M828.5 189.9L855.1 218.8M741.6 126.3L750.4 124.1M789.3 123.9L798.1 126M741.5 99.1L750.3 96.9M789.2 96.7L798 98.8M741.5 99.1L750.4 124.1M750.4 124.1L750.5 151.3M750.3 96.9L750.4 124.1M789.3 123.9L789.4 151.1M789.2 96.7L789.3 123.9M789.2 96.7L798.1 126" stroke="#303030" stroke-opacity="0.4"/>
<path d="M740.9 299.7L741.1 322.4M740.8 277L740.9 299.7M800.5 299.4L800.6 322.1M800.4 276.7L800.5 299.4M813.1 309.8L824.7 305.5M716.8 306L728.4 310.2M716.7 284.3L728.2 279.9M813 279.5L824.6 283.7M716.8 311.5L728.4 307.1M813.1 306.7L824.7 310.9M813 282.6L824.7 305.5M716.7 278.8L728.4 310.2M716.8 311.5L728.2 279.9M813.1 306.7L824.6 283.7" stroke="#3c3c3c" stroke-opacity="0.15"/>
<path d="M813 282.6L824.5 278.3M716.7 278.8L728.2 283" stroke="#3c3c3c" stroke-opacity="0.2"/>
<path d="M801 412.4L829.6 408.3M771.3 413.9L801 412.4M741.5 412.7L771.3 413.9M712.9 408.9L741.5 412.7M740.5 209L770.3 207.6M770.3 207.6L800 208.8M829.5 385.7L829.6 408.3M829.4 363L829.5 385.7M712.8 386.2L712.9 408.9M712.6 363.6L712.8 386.2M712.8 394.4L712.9 417.1M712.7 371.8L712.8 394.4M712.8 394.4L741.5 413M740.5 209L770.4 230.2M740.4 186.4L770.3 207.6M770.3 207.6L770.4 230.2M770.1 184.9L770.3 207.6M770.3 207.6L800.1 231.4M770.1 184.9L800 208.8M800.9 390L829.7 416.5M829.6 393.8L829.7 416.5M829.4 371.2L829.6 393.8M750.8 205.7L760.3 204.3M760.3 204.3L770.2 203.8M770.2 203.8L780.2 204.2M780.2 204.2L789.7 205.5M780.1 195.1L789.6 193.7M770.2 195.5L780.1 195.1M760.3 195.1L770.2 195.5M750.7 193.9L760.3 195.1M780.2 222.2L789.6 193.7M780.1 195.1L780.2 222.2M770.3 222.7L780.1 195.1M770.2 195.5L770.3 222.7M760.4 222.3L770.2 195.5M760.3 195.1L760.4 222.3M750.9 221.1L760.3 195.1M750.8 205.7L760.5 231.5M750.7 178.5L760.3 204.3M760.3 204.3L760.5 231.5M760.2 177.1L760.3 204.3M760.3 204.3L770.4 231M760.2 177.1L770.2 203.8M770.2 203.8L770.4 231M770.1 176.6L770.2 203.8M770.2 203.8L780.3 231.4M770.1 176.6L780.2 204.2M780.2 204.2L780.3 231.4M780 177L780.2 204.2M780.2 204.2L789.8 232.7M780 177L789.7 205.5" stroke="#3c3c3c" stroke-opacity="0.25"/>
<path d="M712.8 394.4L741.4 390.3M800.9 390L829.6 393.8M800.9 389.7L829.5 385.7M712.8 386.2L741.4 390M801 412.4L829.5 385.7M712.9 408.9L741.4 390M712.7 371.8L741.4 390.3M800.8 367.4L829.6 393.8M716.6 257.1L728.1 252.7M812.9 252.3L824.4 256.5M716.6 257.1L728 225.5M716.7 284.3L728.1 252.7M812.9 252.3L824.3 229.4M813 279.5L824.4 256.5" stroke="#3c3c3c" stroke-opacity="0.3"/>
<path d="M802.1 930.3L802.2 952.9M802 907.6L802.1 930.3M745.6 930.6L745.7 953.2M745.5 907.9L745.6 930.6M685.9 287.6L686 310.3M685.8 265L685.9 287.6M685.7 242.3L685.8 265M685.6 219.6L685.7 242.3M685.4 197L685.6 219.6M855.4 286.8L855.5 309.5M855.3 264.1L855.4 286.8M855.2 241.5L855.3 264.1M855.1 218.8L855.2 241.5M855 196.1L855.1 218.8M741.5 99.1L741.6 126.3M798 98.8L798.1 126" stroke="#3c3c3c" stroke-opacity="0.4"/>
<path d="M738.6 661.8L749.1 659.2M749.1 659.2L760.6 657.6M760.6 657.6L772.5 657M772.5 657L784.4 657.5M784.4 657.5L795.8 659M795.8 659L806.4 661.5M732.8 635.3L745.1 632.3M745.1 632.3L758.4 630.4M758.4 630.4L772.3 629.7M772.3 629.7L786.2 630.3M786.2 630.3L799.6 632M799.6 632L811.9 635M727 608.9L741.1 605.4M741.1 605.4L756.3 603.2M756.3 603.2L772.2 602.4M772.2 602.4L788.1 603.1M788.1 603.1L803.3 605.1M803.3 605.1L817.4 608.4M721.2 582.4L737.1 578.5M737.1 578.5L754.2 576M754.2 576L772.1 575.2M772.1 575.2L789.9 575.9M789.9 575.9L807.1 578.1M807.1 578.1L822.9 581.9M715.5 555.9L733 551.6M733 551.6L752.1 548.9M791.8 548.7L810.9 551.2M810.9 551.2L828.5 555.4M738.6 661.8L753.2 686.1M732.8 635.3L749.1 659.2M727 608.9L745.1 632.3M721.2 582.4L741.1 605.4M715.5 555.9L737.1 578.5M749.1 659.2L753.2 686.1M745.1 632.3L749.1 659.2M741.1 605.4L745.1 632.3M737.1 578.5L741.1 605.4M733 551.6L737.1 578.5M749.1 659.2L762.7 684.7M745.1 632.3L760.6 657.6M741.1 605.4L758.4 630.4M737.1 578.5L756.3 603.2M733 551.6L754.2 576M760.6 657.6L762.7 684.7M758.4 630.4L760.6 657.6M756.3 603.2L758.4 630.4M754.2 576L756.3 603.2M752.1 548.9L754.2 576M760.6 657.6L772.6 684.3M758.4 630.4L772.5 657M756.3 603.2L772.3 629.7M754.2 576L772.2 602.4M752.1 548.9L772.1 575.2M772.5 657L772.6 684.3M772.3 629.7L772.5 657M772.2 602.4L772.3 629.7M772.1 575.2L772.2 602.4M771.9 547.9L772.1 575.2M772.5 657L782.5 684.6M772.3 629.7L784.4 657.5M772.2 602.4L786.2 630.3M772.1 575.2L788.1 603.1M771.9 547.9L789.9 575.9M782.5 684.6L784.4 657.5M784.4 657.5L786.2 630.3M786.2 630.3L788.1 603.1M788.1 603.1L789.9 575.9M789.9 575.9L791.8 548.7M784.4 657.5L792.1 685.9M786.2 630.3L795.8 659M788.1 603.1L799.6 632M789.9 575.9L803.3 605.1M791.8 548.7L807.1 578.1M792.1 685.9L795.8 659M795.8 659L799.6 632M799.6 632L803.3 605.1M803.3 605.1L807.1 578.1M807.1 578.1L810.9 551.2M795.8 659L800.9 688M799.6 632L806.4 661.5M803.3 605.1L811.9 635M807.1 578.1L817.4 608.4M810.9 551.2L822.9 581.9" stroke="#3c3c3c" stroke-opacity="0.6"/>
<path d="M741.3 367.7L771 366.2M771 366.2L800.8 367.4M741.1 322.4L770.8 320.9M770.8 320.9L800.6 322.1M740.9 299.7L770.7 298.2M770.7 298.2L800.5 299.4M770.9 345.9L771 368.6M740.9 299.7L770.8 320.9M770.7 298.2L770.8 320.9M770.7 298.2L800.6 322.1M800 313.1L813.1 309.8M785.7 315.1L800 313.1M770.8 315.8L785.7 315.1M755.9 315.3L770.8 315.8M741.6 313.4L755.9 315.3M728.4 310.2L741.6 313.4M800.2 367.5L813.4 364.2M785.9 369.5L800.2 367.5M741.9 367.7L756.2 369.6M728.7 364.6L741.9 367.7M728.4 307.1L741.5 303.8M741.5 303.8L755.8 301.8M755.8 301.8L770.7 301.1M770.7 301.1L785.6 301.7M785.6 301.7L799.9 303.6M799.9 303.6L813.1 306.7M813.4 364.2L825.1 387M813 282.6L813.1 309.8M799.8 285.9L813.1 309.8M799.8 285.9L800 313.1M785.5 287.9L800 313.1M785.5 287.9L785.7 315.1M770.7 288.7L785.7 315.1M770.9 343L785.9 369.5M770.7 288.7L770.8 315.8M770.9 343L771.1 370.2M755.8 288.1L770.8 315.8M756 342.4L771.1 370.2M755.8 288.1L755.9 315.3M741.5 286.2L755.9 315.3M741.5 286.2L741.6 313.4M728.2 283L741.6 313.4M728.2 283L728.4 310.2M717.1 360.4L728.8 391.8M728.2 279.9L728.4 307.1M728.4 307.1L741.4 276.7M728.5 334.3L741.5 303.8M741.4 276.7L741.5 303.8M741.5 303.8L741.7 331M741.5 303.8L755.7 274.6M741.7 331L755.8 301.8M755.7 274.6L755.8 301.8M755.8 301.8L756 329M756 329L770.7 301.1M770.7 301.1L770.8 328.3M770.8 328.3L785.6 301.7M785.5 274.5L785.6 301.7M785.6 301.7L785.7 328.9M785.6 301.7L799.8 276.4M785.7 328.9L799.9 303.6M799.8 276.4L799.9 303.6M799.9 303.6L800.1 330.8M799.9 303.6L813 279.5M800.1 330.8L813.1 306.7M813 279.5L813.1 306.7M771 358.7L780.9 358.2M761.1 358.3L771 358.7M760.9 313.1L770.8 312.6M770.8 312.6L780.7 313M770.7 304.3L780.6 303.8M760.8 303.9L770.7 304.3M780.8 331L790.2 302.5M780.6 303.8L790 275.3M780.6 303.8L780.8 331M780.5 276.6L780.6 303.8M770.9 331.5L780.6 303.8M770.7 304.3L780.5 276.6M770.7 304.3L770.9 331.5M770.6 277.1L770.7 304.3M760.9 331.1L770.7 304.3M760.8 303.9L770.6 277.1M760.8 303.9L760.9 331.1M760.7 276.7L760.8 303.9M751.4 329.9L760.8 303.9M751.3 302.7L760.7 276.7M751.2 287.3L760.9 313.1M760.7 285.9L760.9 313.1M760.7 285.9L770.8 312.6M770.6 285.4L770.8 312.6M770.6 285.4L780.7 313M780.6 285.8L780.7 313M780.6 285.8L790.2 314.3" stroke="#484848" stroke-opacity="0.15"/>
<path d="M717.1 365.9L728.6 361.5M813.4 361.1L825 365.3" stroke="#484848" stroke-opacity="0.2"/>
<path d="M741.1 222.3L755.4 220.2M785.2 220.1L799.5 222M742 207.8L750.8 205.7M789.7 205.5L798.5 207.6M789.8 220.9L798.6 218.7M742.1 219L750.9 221.1M789.6 193.7L798.4 191.5M741.9 191.8L750.7 193.9M789.8 220.9L798.4 191.5M789.6 193.7L789.8 220.9M750.7 193.9L750.9 221.1M742.1 219L750.7 193.9M742 207.8L750.9 232.9M741.9 180.7L750.8 205.7M750.8 205.7L750.9 232.9M750.7 178.5L750.8 205.7M789.7 205.5L789.8 232.7M789.6 178.3L789.7 205.5M789.7 205.5L798.6 234.8M789.6 178.3L798.5 207.6" stroke="#484848" stroke-opacity="0.25"/>
<path d="M829.3 340.3L829.4 363M829.2 317.7L829.3 340.3M712.5 340.9L712.6 363.6M712.4 318.3L712.5 340.9M712.6 349.1L712.7 371.8M712.5 326.4L712.6 349.1M740.7 254.4L740.8 277M740.6 231.7L740.7 254.4M800.2 254.1L800.4 276.7M800.1 231.4L800.2 254.1M829.3 348.5L829.4 371.2M829.2 325.9L829.3 348.5M728 225.5L728.1 252.7M728.1 252.7L728.2 279.9M812.7 225.1L812.9 252.3M812.9 252.3L813 279.5" stroke="#484848" stroke-opacity="0.3"/>
<path d="M740.4 186.4L770.1 184.9M770.1 184.9L799.9 186.1" stroke="#484848" stroke-opacity="0.35"/>
<path d="M802.2 952.9L809.9 950M738 950.4L745.7 953.2M802.1 930.3L809.8 927.4M737.8 927.7L745.6 930.6M802.2 952.9L809.8 927.4M802.1 930.3L809.6 904.7M738 950.4L745.6 930.6M737.8 927.7L745.5 907.9M662.8 296.3L685.9 287.6M855.4 286.8L878.6 295.3M662.7 273.7L685.8 265M855.3 264.1L878.4 272.6M662.6 251L685.7 242.3M855.2 241.5L878.3 250M662.5 228.4L685.6 219.6M855.1 218.8L878.2 227.3M662.4 205.7L685.4 197M855 196.1L878.1 204.6M662.8 296.3L686 310.3M662.7 273.7L685.9 287.6M662.6 251L685.8 265M662.5 228.4L685.7 242.3M662.4 205.7L685.6 219.6M855.4 286.8L878.7 317.9M855.3 264.1L878.6 295.3M855.2 241.5L878.4 272.6M855.1 218.8L878.3 250M855 196.1L878.2 227.3M733.9 129.2L741.6 126.3M798.1 126L805.8 128.8M733.8 102L741.5 99.1M798 98.8L805.7 101.6M733.8 102L741.6 126.3M798 98.8L805.8 128.8" stroke="#484848" stroke-opacity="0.4"/>
<path d="M745.5 914.9L754.3 912.7M754.3 912.7L763.8 911.4M763.8 911.4L773.7 910.9M773.7 910.9L783.6 911.3M783.6 911.3L793.2 912.5M793.2 912.5L802 914.6M773.7 911.7L783.6 911.2M763.8 911.3L773.7 911.7M789.4 139.3L798.2 137.1M779.8 140.7L789.4 139.3M769.9 141.2L779.8 140.7M760 140.8L769.9 141.2M750.5 139.5L760 140.8M741.7 137.4L750.5 139.5M741.6 126.3L750.5 151.3" stroke="#484848" stroke-opacity="0.5"/>
<path d="M730.5 717.4L736.8 713.8M744.5 710.9L753.3 708.8M753.3 708.8L762.8 707.4M762.8 707.4L772.7 706.9M772.7 706.9L782.6 707.3M782.6 707.3L792.2 708.6M792.2 708.6L801 710.7M808.7 713.5L815 716.9M762.7 684.7L772.6 684.3M772.6 684.3L782.5 684.6M736.8 713.8L744.6 733.6M744.5 710.9L744.6 733.6M744.4 688.3L744.5 710.9M744.5 710.9L753.4 731.4M753.3 708.8L753.4 731.4M753.2 686.1L753.3 708.8M753.3 708.8L762.9 730.1M753.2 686.1L762.8 707.4M762.8 707.4L762.9 730.1M762.7 684.7L762.8 707.4M762.8 707.4L772.8 729.6M762.7 684.7L772.7 706.9M772.7 706.9L772.8 729.6M772.6 684.3L772.7 706.9M772.7 706.9L782.7 730M772.6 684.3L782.6 707.3M782.6 707.3L782.7 730M782.5 684.6L782.6 707.3M782.6 707.3L792.3 731.2M782.5 684.6L792.2 708.6M792.2 708.6L792.3 731.2M792.1 685.9L792.2 708.6M792.2 708.6L801.1 733.3M801 710.7L801.1 733.3M800.9 688L801 710.7M801 710.7L808.8 736.1M721.8 669.5L729.4 665.3M729.4 665.3L738.6 661.8M806.4 661.5L815.7 664.9M815.7 664.9L823.3 669M713.2 644.3L722 639.4M722 639.4L732.8 635.3M811.9 635L822.7 638.9M822.7 638.9L831.6 643.8M704.6 619.2L714.7 613.5M714.7 613.5L727 608.9M817.4 608.4L829.8 613M829.8 613L839.9 618.5M696.1 594L707.4 587.6M707.4 587.6L721.2 582.4M822.9 581.9L836.8 587M836.8 587L848.3 593.2M687.5 568.8L700.1 561.7M700.1 561.7L715.5 555.9M828.5 555.4L843.9 561M843.9 561L856.6 568M678.9 543.6L692.8 535.9M851 535.1L864.9 542.7M619.1 481.4L621.9 467.9M621.9 467.9L630.5 454.9M630.5 454.9L644.6 442.9M644.6 442.9L663.5 432.3M663.5 432.3L686.6 423.6M686.6 423.6L712.9 417.1M829.7 416.5L856.1 422.8M856.1 422.8L879.2 431.3M879.2 431.3L898.2 441.6M898.2 441.6L912.4 453.5M912.4 453.5L921.1 466.5M921.1 466.5L924.1 479.9M721.8 669.5L736.7 691.2M713.2 644.3L729.4 665.3M704.6 619.2L722 639.4M696.1 594L714.7 613.5M687.5 568.8L707.4 587.6M678.9 543.6L700.1 561.7M729.4 665.3L736.7 691.2M722 639.4L729.4 665.3M714.7 613.5L722 639.4M707.4 587.6L714.7 613.5M700.1 561.7L707.4 587.6M692.8 535.9L700.1 561.7M729.4 665.3L744.4 688.3M722 639.4L738.6 661.8M714.7 613.5L732.8 635.3M707.4 587.6L727 608.9M700.1 561.7L721.2 582.4M692.8 535.9L715.5 555.9M738.6 661.8L744.4 688.3M732.8 635.3L738.6 661.8M727 608.9L732.8 635.3M721.2 582.4L727 608.9M715.5 555.9L721.2 582.4M800.9 688L806.4 661.5M806.4 661.5L811.9 635M811.9 635L817.4 608.4M817.4 608.4L822.9 581.9M822.9 581.9L828.5 555.4M806.4 661.5L808.6 690.8M811.9 635L815.7 664.9M817.4 608.4L822.7 638.9M822.9 581.9L829.8 613M828.5 555.4L836.8 587M834 528.9L843.9 561M808.6 690.8L815.7 664.9M815.7 664.9L822.7 638.9M822.7 638.9L829.8 613M829.8 613L836.8 587M836.8 587L843.9 561M843.9 561L851 535.1M814.9 694.3L815.7 664.9M822.7 638.9L823.3 669M829.8 613L831.6 643.8M836.8 587L839.9 618.5M843.9 561L848.3 593.2M851 535.1L856.6 568M712.1 258.4L712.2 281.1M712 235.8L712.1 258.4M828.9 257.9L829 280.5M828.8 235.2L828.9 257.9" stroke="#484848" stroke-opacity="0.6"/>
<path d="M780.9 358.2L790.4 356.9M751.5 357L761.1 358.3M742.5 316.6L751.3 314.5M751.3 314.5L760.9 313.1M780.7 313L790.2 314.3M790.2 314.3L799 316.3M742.4 289.4L751.2 287.3M790.1 287.1L798.9 289.2M790.2 302.5L799 300.3M780.6 303.8L790.2 302.5M751.3 302.7L760.8 303.9M742.5 300.6L751.3 302.7M790.6 384.1L799.2 354.7M790.3 329.7L799 300.3M790.2 302.5L798.8 273.1M790.2 302.5L790.3 329.7M790 275.3L790.2 302.5M751.3 302.7L751.4 329.9M751.1 275.5L751.3 302.7M742.6 327.8L751.3 302.7M742.5 300.6L751.1 275.5M742.4 289.4L751.3 314.5M751.2 287.3L751.3 314.5M790.1 287.1L790.2 314.3M790.1 287.1L799 316.3" stroke="#545454" stroke-opacity="0.15"/>
<path d="M771 368.6L800.8 367.1M741.3 367.4L771 368.6M770.8 323.2L800.6 321.8M741.1 322L770.8 323.2M800.7 344.4L800.8 367.1M800.6 321.8L800.7 344.4M771 368.6L800.7 344.4M741.3 367.4L770.9 345.9M741.2 344.7L741.3 367.4M741.1 322L741.2 344.7M741.2 345L741.3 367.7M741.1 322.4L741.2 345M740.8 277L770.7 298.2M770.6 275.6L800.5 299.4M800.7 344.7L800.8 367.4M800.6 322.1L800.7 344.7M799.8 285.9L813 282.6M785.5 287.9L799.8 285.9M770.7 288.7L785.5 287.9M755.8 288.1L770.7 288.7M741.5 286.2L755.8 288.1M728.2 283L741.5 286.2M813.3 337L824.8 332.6M716.9 333.2L728.5 337.4M813.4 364.2L824.9 359.8M717.1 360.4L728.7 364.6M717 338.7L728.5 334.3M813.3 333.9L824.8 338.1M728.6 361.5L741.8 358.2M741.8 358.2L756.1 356.2M756.1 356.2L771 355.5M771 355.5L785.9 356.1M785.9 356.1L800.2 357.9M800.2 357.9L813.4 361.1M813.1 309.8L824.8 332.6M813.3 337L824.9 359.8M813.1 309.8L813.3 337M813.3 337L813.4 364.2M728.4 310.2L728.5 337.4M728.5 337.4L728.7 364.6M716.8 306L728.5 337.4M716.9 333.2L728.7 364.6M717 338.7L728.4 307.1M717.1 365.9L728.5 334.3M728.4 307.1L728.5 334.3M728.5 334.3L728.6 361.5M813.1 306.7L813.3 333.9M813.3 333.9L813.4 361.1M813.3 333.9L824.7 310.9M813.4 361.1L824.8 338.1M761.1 367.5L771 367M771 367L781 367.4" stroke="#545454" stroke-opacity="0.2"/>
<path d="M728 225.5L741.1 222.3M755.4 220.2L770.3 219.5M770.3 219.5L785.2 220.1M799.5 222L812.7 225.1M813.5 391.4L813.7 418.6M800.4 394.7L813.7 418.6M728.8 391.8L728.9 419M771.3 413.1L781.2 412.6M761.3 412.7L771.3 413.1M734.3 210.8L742 207.8M798.5 207.6L806.2 210.4M798.6 218.7L806.3 215.8M734.3 216.2L742.1 219M798.4 191.5L806.1 188.6M734.2 189L741.9 191.8M798.6 218.7L806.1 188.6M798.4 191.5L798.6 218.7M741.9 191.8L742.1 219M734.3 216.2L741.9 191.8M734.3 210.8L742.1 235M734.2 183.6L742 207.8M742 207.8L742.1 235M741.9 180.7L742 207.8M798.5 207.6L798.6 234.8M798.4 180.4L798.5 207.6M798.4 180.4L806.2 210.4" stroke="#545454" stroke-opacity="0.25"/>
<path d="M800.9 389.7L801 412.4M800.8 367.1L800.9 389.7M741.4 390L741.5 412.7M741.3 367.4L741.4 390M741.4 390.3L741.5 413M741.3 367.7L741.4 390.3M800.9 390L801 412.7M800.8 367.4L800.9 390M728.1 252.7L741.1 222.3M728.2 279.9L741.3 249.5M741.1 222.3L741.3 249.5M741.3 249.5L741.4 276.7M799.5 222L799.6 249.2M799.6 249.2L799.8 276.4M799.6 249.2L812.7 225.1M799.8 276.4L812.9 252.3" stroke="#545454" stroke-opacity="0.3"/>
<path d="M809.9 950L816.2 946.5M731.6 946.9L738 950.4M809.8 927.4L816.1 923.9M731.5 924.3L737.8 927.7M809.9 950L816.1 923.9M809.8 927.4L809.9 950M737.8 927.7L738 950.4M731.6 946.9L737.8 927.7M643.8 284.3L662.7 273.7M878.4 272.6L897.5 283M643.7 261.6L662.6 251M878.3 250L897.4 260.3M643.6 238.9L662.5 228.4M878.2 227.3L897.2 237.7M643.5 216.3L662.4 205.7M878.1 204.6L897.1 215M643.8 284.3L662.8 296.3M643.7 261.6L662.7 273.7M643.6 238.9L662.6 251M643.5 216.3L662.5 228.4M662.7 273.7L662.8 296.3M662.6 251L662.7 273.7M662.5 228.4L662.6 251M662.4 205.7L662.5 228.4M878.4 272.6L878.6 295.3M878.3 250L878.4 272.6M878.2 227.3L878.3 250M878.1 204.6L878.2 227.3M878.4 272.6L897.6 305.7M878.3 250L897.5 283M878.2 227.3L897.4 260.3M878.1 204.6L897.2 237.7M727.6 132.7L733.9 129.2M805.8 128.8L812.2 132.3M727.5 105.5L733.8 102M805.7 101.6L812 105.1M727.5 105.5L733.9 129.2M733.8 102L733.9 129.2M805.7 101.6L805.8 128.8M805.7 101.6L812.2 132.3" stroke="#545454" stroke-opacity="0.4"/>
<path d="M737.8 917.8L745.5 914.9M802 914.6L809.7 917.4M855.5 311.2L878.6 302.4M662.9 303.5L686 312M798.2 137.1L805.9 134.2M733.9 134.6L741.7 137.4" stroke="#545454" stroke-opacity="0.5"/>
<path d="M762.9 730.1L772.8 729.6M772.8 729.6L782.7 730M736.8 713.8L744.5 710.9M801 710.7L808.7 713.5M815.1 719.9L819.7 715.9M808.8 723.4L815.1 719.9M801.1 726.3L808.8 723.4M792.3 728.5L801.1 726.3M782.7 729.9L792.3 728.5M772.8 730.4L782.7 729.9M762.9 730L772.8 730.4M753.4 728.7L762.9 730M744.6 726.6L753.4 728.7M736.8 723.8L744.6 726.6M730.5 720.3L736.8 723.8M725.8 716.4L730.5 720.3M744.4 688.3L753.2 686.1M753.2 686.1L762.7 684.7M782.5 684.6L792.1 685.9M792.1 685.9L800.9 688M722.8 703.1L725.8 721.4M730.4 694.7L736.8 713.8M736.7 691.2L736.8 713.8M736.7 691.2L744.5 710.9M744.4 688.3L753.3 708.8M792.1 685.9L801 710.7M800.9 688L808.7 713.5M808.6 690.8L808.7 713.5M808.6 690.8L815 716.9M819.6 698.3L822.7 725.2M716.2 674.3L721.8 669.5M823.3 669L828.9 673.8M706.7 650L713.2 644.3M831.6 643.8L838.2 649.3M697.1 625.6L704.6 619.2M839.9 618.5L847.5 624.8M687.6 601.2L696.1 594M848.3 593.2L856.8 600.4M678.1 576.8L687.5 568.8M752.1 548.9L771.9 547.9M771.9 547.9L791.8 548.7M856.6 568L866 575.9M668.6 552.4L678.9 543.6M729 524.7L750 521.7M750 521.7L771.8 520.6M771.8 520.6L793.6 521.5M793.6 521.5L814.6 524.3M864.9 542.7L875.3 551.4M725 497.8L747.9 494.5M747.9 494.5L771.7 493.3M771.7 493.3L795.5 494.3M795.5 494.3L818.4 497.3M698.1 476.5L721 470.9M721 470.9L745.7 467.4M745.7 467.4L771.5 466.1M771.5 466.1L797.3 467.1M797.3 467.1L822.1 470.4M822.1 470.4L845 475.8M653.2 468.1L670.8 458.2M670.8 458.2L692.3 450.1M692.3 450.1L716.9 444M716.9 444L743.6 440.2M743.6 440.2L771.4 438.8M771.4 438.8L799.2 439.9M799.2 439.9L825.9 443.4M825.9 443.4L850.5 449.3M850.5 449.3L872.2 457.2M872.2 457.2L889.9 466.9M642.1 515L652.2 538.5M716.2 674.3L725.7 698.7M706.7 650L716.2 674.3M697.1 625.6L706.7 650M687.6 601.2L697.1 625.6M678.1 576.8L687.6 601.2M668.6 552.4L678.1 576.8M659.1 528.1L668.6 552.4M716.2 674.3L730.4 694.7M706.7 650L721.8 669.5M697.1 625.6L713.2 644.3M687.6 601.2L704.6 619.2M678.1 576.8L696.1 594M668.6 552.4L687.5 568.8M659.1 528.1L678.9 543.6M630.5 454.9L653.2 468.1M721.8 669.5L730.4 694.7M713.2 644.3L721.8 669.5M704.6 619.2L713.2 644.3M696.1 594L704.6 619.2M687.5 568.8L696.1 594M678.9 543.6L687.5 568.8M644.6 442.9L670.8 458.2M670.8 458.2L698.1 476.5M663.5 432.3L692.3 450.1M698.1 476.5L725 497.8M692.3 450.1L721 470.9M686.6 423.6L716.9 444M729 524.7L733 551.6M725 497.8L729 524.7M721 470.9L725 497.8M716.9 444L721 470.9M712.9 417.1L716.9 444M729 524.7L752.1 548.9M725 497.8L750 521.7M721 470.9L747.9 494.5M716.9 444L745.7 467.4M712.9 417.1L743.6 440.2M750 521.7L752.1 548.9M747.9 494.5L750 521.7M745.7 467.4L747.9 494.5M743.6 440.2L745.7 467.4M741.5 413L743.6 440.2M750 521.7L771.9 547.9M747.9 494.5L771.8 520.6M745.7 467.4L771.7 493.3M743.6 440.2L771.5 466.1M741.5 413L771.4 438.8M771.8 520.6L771.9 547.9M771.7 493.3L771.8 520.6M771.5 466.1L771.7 493.3M771.4 438.8L771.5 466.1M771.3 411.5L771.4 438.8M771.8 520.6L791.8 548.7M771.7 493.3L793.6 521.5M771.5 466.1L795.5 494.3M771.4 438.8L797.3 467.1M771.3 411.5L799.2 439.9M791.8 548.7L793.6 521.5M793.6 521.5L795.5 494.3M795.5 494.3L797.3 467.1M797.3 467.1L799.2 439.9M799.2 439.9L801 412.7M793.6 521.5L810.9 551.2M795.5 494.3L814.6 524.3M797.3 467.1L818.4 497.3M799.2 439.9L822.1 470.4M801 412.7L825.9 443.4M810.9 551.2L814.6 524.3M814.6 524.3L818.4 497.3M818.4 497.3L822.1 470.4M822.1 470.4L825.9 443.4M825.9 443.4L829.7 416.5M822.1 470.4L839.5 502.3M825.9 443.4L845 475.8M829.7 416.5L850.5 449.3M850.5 449.3L865.1 483.2M856.1 422.8L872.2 457.2M879.2 431.3L889.9 466.9M814.9 694.3L823.3 669M823.3 669L831.6 643.8M831.6 643.8L839.9 618.5M839.9 618.5L848.3 593.2M848.3 593.2L856.6 568M856.6 568L864.9 542.7M819.6 698.3L823.3 669M828.9 673.8L831.6 643.8M838.2 649.3L839.9 618.5M847.5 624.8L848.3 593.2M856.6 568L856.8 600.4M864.9 542.7L866 575.9M873.3 517.4L875.3 551.4M898.2 441.6L903.1 478M819.6 698.3L828.9 673.8M828.9 673.8L838.2 649.3M838.2 649.3L847.5 624.8M847.5 624.8L856.8 600.4M856.8 600.4L866 575.9M866 575.9L875.3 551.4M875.3 551.4L884.6 526.9M891.6 537.3L901.4 513.7M912.6 483.8L912.7 506.5M898.5 495.8L898.6 518.5M644.8 497.1L644.9 519.7M630.7 485.2L630.8 507.8" stroke="#545454" stroke-opacity="0.6"/>
<path d="M734.8 319.5L742.5 316.6M799 316.3L806.8 319.2M734.7 292.3L742.4 289.4M798.9 289.2L806.6 292M799 300.3L806.7 297.4M734.7 297.7L742.5 300.6M799.1 327.5L806.7 297.4M799.2 354.7L799.4 381.9M799 300.3L799.1 327.5M798.8 273.1L799 300.3M742.7 355L742.9 382.2M742.5 300.6L742.6 327.8M742.3 273.4L742.5 300.6M734.9 324.9L742.5 300.6M734.7 297.7L742.3 273.4M734.7 292.3L742.5 316.6M742.4 289.4L742.5 316.6M798.9 289.2L799 316.3M798.9 289.2L806.8 319.2" stroke="#606060" stroke-opacity="0.15"/>
<path d="M741.2 345L770.9 343.5M770.9 343.5L800.7 344.7M770.9 345.9L800.7 344.4M741.2 344.7L770.9 345.9M770.9 345.9L800.6 321.8M770.8 323.2L770.9 345.9M741.2 344.7L770.8 323.2M741.2 345L771 366.2M741.1 322.4L770.9 343.5M770.9 343.5L771 366.2M770.8 320.9L770.9 343.5M770.9 343.5L800.8 367.4M770.8 320.9L800.7 344.7M800.1 340.3L813.3 337M785.8 342.3L800.1 340.3M770.9 343L785.8 342.3M756 342.4L770.9 343M741.7 340.6L756 342.4M728.5 337.4L741.7 340.6M728.5 334.3L741.7 331M741.7 331L756 329M756 329L770.8 328.3M770.8 328.3L785.7 328.9M785.7 328.9L800.1 330.8M800.1 330.8L813.3 333.9M800 313.1L813.3 337M800.1 340.3L813.4 364.2M800 313.1L800.1 340.3M800.1 340.3L800.2 367.5M785.7 315.1L800.1 340.3M785.8 342.3L800.2 367.5M785.7 315.1L785.8 342.3M785.8 342.3L785.9 369.5M770.8 315.8L785.8 342.3M770.8 315.8L770.9 343M755.9 315.3L770.9 343M755.9 315.3L756 342.4M756 342.4L756.2 369.6M741.6 313.4L756 342.4M741.7 340.6L756.2 369.6M741.6 313.4L741.7 340.6M741.7 340.6L741.9 367.7M728.4 310.2L741.7 340.6M728.5 337.4L741.9 367.7M728.6 361.5L741.7 331M741.7 331L741.8 358.2M741.8 358.2L756 329M756 329L756.1 356.2M756.1 356.2L770.8 328.3M770.8 328.3L771 355.5M771 355.5L785.7 328.9M785.7 328.9L785.9 356.1M785.9 356.1L800.1 330.8M800.1 330.8L800.2 357.9M800.2 357.9L813.3 333.9M751.6 368.8L761.1 367.5M781 367.4L790.5 368.6M761 340.3L770.9 339.8M770.9 339.8L780.8 340.2M770.9 331.5L780.8 331M760.9 331.1L770.9 331.5M771 358.7L780.8 331M770.9 331.5L771 358.7M761.1 358.3L770.9 331.5M761 340.3L771 367M760.9 313.1L770.9 339.8M770.9 339.8L771 367M770.8 312.6L770.9 339.8M770.9 339.8L781 367.4M770.8 312.6L780.8 340.2" stroke="#606060" stroke-opacity="0.2"/>
<path d="M824.5 278.3L824.7 305.5M813.5 391.4L825.2 414.2M728.8 391.8L742.1 422.1M717.2 387.6L728.9 419M716.7 278.8L716.8 306M716.7 284.3L716.8 311.5M824.6 283.7L824.7 310.9M790.7 411.2L799.5 409.1M781.2 412.6L790.7 411.2M751.8 411.4L761.3 412.7M743 409.3L751.8 411.4M806.1 188.6L806.3 215.8M734.2 189L734.3 216.2M734.2 183.6L734.3 210.8M806.1 183.2L806.2 210.4" stroke="#606060" stroke-opacity="0.25"/>
<path d="M741.4 390.3L771.1 388.9M771.1 388.9L800.9 390M740.8 277L770.6 275.6M770.6 275.6L800.4 276.7M771.2 391.2L800.9 389.7M741.4 390L771.2 391.2M740.7 254.4L770.5 252.9M770.5 252.9L800.2 254.1M740.6 231.7L770.4 230.2M770.4 230.2L800.1 231.4M771.3 413.9L800.9 389.7M771.2 391.2L800.8 367.1M771.2 391.2L771.3 413.9M771 368.6L771.2 391.2M741.5 412.7L771.2 391.2M741.4 390L771 368.6M741.4 390.3L771.3 411.5M741.3 367.7L771.1 388.9M740.7 254.4L770.6 275.6M740.6 231.7L770.5 252.9M771.1 388.9L771.3 411.5M771 366.2L771.1 388.9M770.6 275.6L770.7 298.2M770.5 252.9L770.6 275.6M770.4 230.2L770.5 252.9M771.1 388.9L801 412.7M771 366.2L800.9 390M770.5 252.9L800.4 276.7M770.4 230.2L800.2 254.1M728.1 252.7L741.3 249.5M741.3 249.5L755.6 247.4M755.6 247.4L770.4 246.7M770.4 246.7L785.3 247.3M785.3 247.3L799.6 249.2M799.6 249.2L812.9 252.3M728.2 279.9L741.4 276.7M741.4 276.7L755.7 274.6M755.7 274.6L770.6 273.9M770.6 273.9L785.5 274.5M785.5 274.5L799.8 276.4M799.8 276.4L813 279.5M771.1 370.2L785.9 369.5M756.2 369.6L771.1 370.2M813.5 391.4L825.1 387M786.1 396.7L800.4 394.7M771.2 397.4L786.1 396.7M756.3 396.8L771.2 397.4M742 394.9L756.3 396.8M717.2 387.6L728.8 391.8M813.4 364.2L813.5 391.4M800.2 367.5L813.5 391.4M800.2 367.5L800.4 394.7M800.4 394.7L800.5 421.8M785.9 369.5L800.4 394.7M786.1 396.7L800.5 421.8M785.9 369.5L786.1 396.7M786.1 396.7L786.2 423.9M771.1 370.2L786.1 396.7M771.2 397.4L786.2 423.9M771.1 370.2L771.2 397.4M771.2 397.4L771.3 424.6M756.2 369.6L771.2 397.4M756.3 396.8L771.3 424.6M756.2 369.6L756.3 396.8M756.3 396.8L756.4 424M741.9 367.7L756.3 396.8M742 394.9L756.4 424M741.9 367.7L742 394.9M742 394.9L742.1 422.1M728.7 364.6L742 394.9M728.7 364.6L728.8 391.8M741.3 249.5L755.4 220.2M741.4 276.7L755.6 247.4M755.4 220.2L755.6 247.4M755.6 247.4L755.7 274.6M755.6 247.4L770.3 219.5M755.7 274.6L770.4 246.7M755.8 301.8L770.6 273.9M770.3 219.5L770.4 246.7M770.4 246.7L770.6 273.9M770.6 273.9L770.7 301.1M770.4 246.7L785.2 220.1M770.6 273.9L785.3 247.3M770.7 301.1L785.5 274.5M785.2 220.1L785.3 247.3M785.3 247.3L785.5 274.5M785.3 247.3L799.5 222M785.5 274.5L799.6 249.2M771.1 385.9L781.1 385.4M761.2 385.5L771.1 385.9M760.7 285.9L770.6 285.4M770.6 285.4L780.6 285.8M760.6 258.7L770.5 258.2M770.5 258.2L780.4 258.6M770.6 277.1L780.5 276.6M760.7 276.7L770.6 277.1M760.5 231.5L770.4 231M770.4 231L780.3 231.4M770.5 249.9L780.4 249.4M760.5 249.5L770.5 249.9M770.3 222.7L780.2 222.2M760.4 222.3L770.3 222.7M771.3 413.1L781.1 385.4M771.1 385.9L780.9 358.2M770.6 277.1L780.4 249.4M770.5 249.9L780.2 222.2M771.1 385.9L771.3 413.1M771 358.7L771.1 385.9M770.5 249.9L770.6 277.1M770.3 222.7L770.5 249.9M761.3 412.7L771.1 385.9M761.2 385.5L771 358.7M760.7 276.7L770.5 249.9M760.5 249.5L770.3 222.7M760.6 258.7L770.6 285.4M760.5 231.5L770.5 258.2M770.5 258.2L770.6 285.4M770.4 231L770.5 258.2M770.5 258.2L780.6 285.8M770.4 231L780.4 258.6" stroke="#606060" stroke-opacity="0.3"/>
<path d="M786.2 423.9L800.5 421.8M771.3 424.6L786.2 423.9M756.4 424L771.3 424.6M742.1 422.1L756.4 424" stroke="#606060" stroke-opacity="0.35"/>
<path d="M816.1 923.9L816.2 946.5M731.5 924.3L731.6 946.9M643.7 261.6L643.8 284.3M643.6 238.9L643.7 261.6M643.5 216.3L643.6 238.9M897.4 260.3L897.5 283M897.2 237.7L897.4 260.3M897.1 215L897.2 237.7M727.5 105.5L727.6 132.7M812 105.1L812.2 132.3" stroke="#606060" stroke-opacity="0.4"/>
<path d="M731.5 921.3L737.8 917.8M809.7 917.4L816 920.9M878.6 302.4L897.5 291.9M643.8 293.1L662.9 303.5M805.9 134.2L812.2 130.7M727.6 131.1L733.9 134.6" stroke="#606060" stroke-opacity="0.5"/>
<path d="M820.7 919.8L823.6 915.5M816.1 923.9L820.7 919.8M726.8 920.3L731.5 924.3M723.9 916L726.8 920.3M723.8 907L726.7 902.7M726.7 902.7L731.4 898.7M731.4 898.7L737.7 895.1M737.7 895.1L745.4 892.2M745.4 892.2L754.2 890.1M754.2 890.1L763.7 888.7M763.7 888.7L773.6 888.2M773.6 888.2L783.5 888.6M783.5 888.6L793.1 889.9M793.1 889.9L801.9 892M801.9 892L809.6 894.8M809.6 894.8L815.9 898.2M815.9 898.2L820.7 902.2M820.7 902.2L823.6 906.5M820.6 897.2L823.5 892.8M815.9 901.2L820.6 897.2M809.6 904.7L815.9 901.2M802 907.6L809.6 904.7M793.2 909.8L802 907.6M783.6 911.2L793.2 909.8M754.3 910L763.8 911.3M745.5 907.9L754.3 910M737.7 905.1L745.5 907.9M731.4 901.6L737.7 905.1M726.7 897.7L731.4 901.6M723.8 893.3L726.7 897.7M723.7 884.3L726.6 880M726.6 880L731.3 876M731.3 876L737.6 872.5M737.6 872.5L745.3 869.6M745.3 869.6L754 867.4M754 867.4L763.6 866M763.6 866L773.5 865.5M773.5 865.5L783.4 865.9M783.4 865.9L793 867.2M793 867.2L801.8 869.3M801.8 869.3L809.5 872.1M809.5 872.1L815.8 875.6M815.8 875.6L820.5 879.5M820.5 879.5L823.5 883.9M820.5 874.5L823.4 870.2M815.8 878.5L820.5 874.5M809.5 882.1L815.8 878.5M801.8 885L809.5 882.1M793.1 887.1L801.8 885M783.5 888.5L793.1 887.1M773.6 889L783.5 888.5M763.7 888.6L773.6 889M754.1 887.3L763.7 888.6M745.3 885.2L754.1 887.3M737.6 882.4L745.3 885.2M731.3 879L737.6 882.4M726.6 875L731.3 879M723.6 870.7L726.6 875M723.6 861.7L726.5 857.3M726.5 857.3L731.2 853.3M731.2 853.3L737.5 849.8M737.5 849.8L745.2 846.9M745.2 846.9L753.9 844.7M753.9 844.7L763.5 843.4M763.5 843.4L773.4 842.9M773.4 842.9L783.3 843.3M783.3 843.3L792.8 844.5M792.8 844.5L801.7 846.6M801.7 846.6L809.4 849.5M809.4 849.5L815.7 852.9M815.7 852.9L820.4 856.9M820.4 856.9L823.3 861.2M820.4 851.9L823.3 847.5M815.7 855.9L820.4 851.9M809.4 859.4L815.7 855.9M801.7 862.3L809.4 859.4M792.9 864.5L801.7 862.3M783.4 865.8L792.9 864.5M773.5 866.3L783.4 865.8M763.6 865.9L773.5 866.3M754 864.7L763.6 865.9M745.2 862.6L754 864.7M737.5 859.8L745.2 862.6M731.2 856.3L737.5 859.8M726.4 852.3L731.2 856.3M723.5 848L726.4 852.3M723.5 839L726.4 834.7M726.4 834.7L731 830.7M731 830.7L737.3 827.1M737.3 827.1L745 824.2M745 824.2L753.8 822.1M753.8 822.1L763.4 820.7M763.4 820.7L773.3 820.2M773.3 820.2L783.2 820.6M783.2 820.6L792.7 821.9M792.7 821.9L801.5 824M801.5 824L809.3 826.8M809.3 826.8L815.6 830.3M815.6 830.3L820.3 834.2M820.3 834.2L823.2 838.5M820.3 829.2L823.2 824.9M815.6 833.2L820.3 829.2M809.3 836.7L815.6 833.2M801.6 839.6L809.3 836.7M792.8 841.8L801.6 839.6M783.3 843.2L792.8 841.8M773.4 843.7L783.3 843.2M763.5 843.3L773.4 843.7M753.9 842L763.5 843.3M745.1 839.9L753.9 842M737.4 837.1L745.1 839.9M731.1 833.6L737.4 837.1M726.3 829.7L731.1 833.6M723.4 825.4L726.3 829.7M723.4 816.4L726.3 812M726.3 812L730.9 808M730.9 808L737.2 804.5M737.2 804.5L744.9 801.6M744.9 801.6L753.7 799.4M753.7 799.4L763.2 798.1M763.2 798.1L773.2 797.6M773.2 797.6L783.1 798M783.1 798L792.6 799.2M792.6 799.2L801.4 801.3M801.4 801.3L809.1 804.1M809.1 804.1L815.5 807.6M815.5 807.6L820.2 811.6M820.2 811.6L823.1 815.9M820.2 806.5L823.1 802.2M815.5 810.6L820.2 806.5M809.2 814.1L815.5 810.6M801.5 817L809.2 814.1M792.7 819.2L801.5 817M783.2 820.5L792.7 819.2M773.3 821L783.2 820.5M763.4 820.6L773.3 821M753.8 819.3L763.4 820.6M745 817.3L753.8 819.3M737.3 814.4L745 817.3M730.9 811L737.3 814.4M726.2 807L730.9 811M723.3 802.7L726.2 807M723.3 793.7L726.1 789.4M726.1 789.4L730.8 785.4M730.8 785.4L737.1 781.8M737.1 781.8L744.8 778.9M744.8 778.9L753.6 776.7M753.6 776.7L763.1 775.4M763.1 775.4L773 774.9M773 774.9L783 775.3M783 775.3L792.5 776.6M792.5 776.6L801.3 778.6M801.3 778.6L809 781.5M809 781.5L815.4 784.9M815.4 784.9L820.1 788.9M820.1 788.9L823 793.2M820.1 783.9L822.9 779.5M815.4 787.9L820.1 783.9M809.1 791.4L815.4 787.9M801.4 794.3L809.1 791.4M792.6 796.5L801.4 794.3M783.1 797.9L792.6 796.5M773.2 798.3L783.1 797.9M763.2 797.9L773.2 798.3M753.7 796.7L763.2 797.9M744.9 794.6L753.7 796.7M737.2 791.8L744.9 794.6M730.8 788.3L737.2 791.8M726.1 784.3L730.8 788.3M723.2 780L726.1 784.3M723.2 771L726 766.7M726 766.7L730.7 762.7M730.7 762.7L737 759.2M737 759.2L744.7 756.3M744.7 756.3L753.5 754.1M753.5 754.1L763 752.7M763 752.7L772.9 752.2M772.9 752.2L782.9 752.6M782.9 752.6L792.4 753.9M792.4 753.9L801.2 756M801.2 756L808.9 758.8M808.9 758.8L815.3 762.3M815.3 762.3L820 766.2M820 766.2L822.9 770.5M820 761.2L822.8 756.9M815.3 765.2L820 761.2M809 768.8L815.3 765.2M801.3 771.7L809 768.8M792.5 773.8L801.3 771.7M783 775.2L792.5 773.8M773.1 775.7L783 775.2M763.1 775.3L773.1 775.7M753.6 774L763.1 775.3M744.8 771.9L753.6 774M737.1 769.1L744.8 771.9M730.7 765.6L737.1 769.1M726 761.7L730.7 765.6M723.1 757.4L726 761.7M723 748.4L725.9 744M725.9 744L730.6 740M730.6 740L736.9 736.5M736.9 736.5L744.6 733.6M744.6 733.6L753.4 731.4M753.4 731.4L762.9 730.1M782.7 730L792.3 731.2M792.3 731.2L801.1 733.3M801.1 733.3L808.8 736.1M808.8 736.1L815.2 739.6M815.2 739.6L819.9 743.6M819.9 743.6L822.8 747.9M819.8 738.6L822.7 734.2M815.2 742.6L819.8 738.6M808.9 746.1L815.2 742.6M801.2 749L808.9 746.1M792.4 751.2L801.2 749M782.9 752.5L792.4 751.2M772.9 753L782.9 752.5M763 752.6L772.9 753M753.5 751.4L763 752.6M744.7 749.3L753.5 751.4M737 746.4L744.7 749.3M730.6 743L737 746.4M725.9 739L730.6 743M723 734.7L725.9 739M722.9 725.7L725.8 721.4M725.8 721.4L730.5 717.4M815 716.9L819.8 720.9M819.8 720.9L822.7 725.2M819.7 715.9L822.6 711.6M722.9 712L725.8 716.4M730.4 694.7L736.7 691.2M736.7 691.2L744.4 688.3M800.9 688L808.6 690.8M808.6 690.8L814.9 694.3M824.6 911L824.7 933.7M824.5 888.3L824.6 911M824.3 865.7L824.5 888.3M824.2 843L824.3 865.7M824.1 820.4L824.2 843M824 797.7L824.1 820.4M823.9 775L824 797.7M823.8 752.4L823.9 775M823.7 729.7L823.8 752.4M823.6 707.1L823.7 729.7M823.6 915.5L823.7 938.2M823.5 892.8L823.6 915.5M823.4 870.2L823.5 892.8M823.3 847.5L823.4 870.2M823.2 824.9L823.3 847.5M823.1 802.2L823.2 824.9M822.9 779.5L823.1 802.2M822.8 756.9L822.9 779.5M822.7 734.2L822.8 756.9M822.6 711.6L822.7 734.2M820.7 919.8L823.5 892.8M820.6 897.2L823.4 870.2M820.5 874.5L823.3 847.5M820.4 851.9L823.2 824.9M820.3 829.2L823.1 802.2M820.2 806.5L822.9 779.5M820.1 783.9L822.8 756.9M820 761.2L822.7 734.2M819.8 738.6L822.6 711.6M820.6 897.2L820.7 919.8M820.5 874.5L820.6 897.2M820.4 851.9L820.5 874.5M820.3 829.2L820.4 851.9M820.2 806.5L820.3 829.2M820.1 783.9L820.2 806.5M820 761.2L820.1 783.9M819.8 738.6L820 761.2M819.7 715.9L819.8 738.6M816.1 923.9L820.6 897.2M815.9 901.2L820.5 874.5M815.8 878.5L820.4 851.9M815.7 855.9L820.3 829.2M815.6 833.2L820.2 806.5M815.5 810.6L820.1 783.9M815.4 787.9L820 761.2M815.3 765.2L819.8 738.6M815.2 742.6L819.7 715.9M815.9 901.2L816.1 923.9M815.8 878.5L815.9 901.2M815.7 855.9L815.8 878.5M815.6 833.2L815.7 855.9M815.5 810.6L815.6 833.2M815.4 787.9L815.5 810.6M815.3 765.2L815.4 787.9M815.2 742.6L815.3 765.2M815.1 719.9L815.2 742.6M809.8 927.4L815.9 901.2M809.6 904.7L815.8 878.5M809.5 882.1L815.7 855.9M809.4 859.4L815.6 833.2M809.3 836.7L815.5 810.6M809.2 814.1L815.4 787.9M809.1 791.4L815.3 765.2M809 768.8L815.2 742.6M808.9 746.1L815.1 719.9M809.6 904.7L809.8 927.4M809.5 882.1L809.6 904.7M809.4 859.4L809.5 882.1M809.3 836.7L809.4 859.4M809.2 814.1L809.3 836.7M809.1 791.4L809.2 814.1M809 768.8L809.1 791.4M808.9 746.1L809 768.8M808.8 723.4L808.9 746.1M802 907.6L809.5 882.1M801.8 885L809.4 859.4M801.7 862.3L809.3 836.7M801.6 839.6L809.2 814.1M801.5 817L809.1 791.4M801.4 794.3L809 768.8M801.3 771.7L808.9 746.1M801.2 749L808.8 723.4M801.8 885L802 907.6M801.7 862.3L801.8 885M801.6 839.6L801.7 862.3M801.5 817L801.6 839.6M801.4 794.3L801.5 817M801.3 771.7L801.4 794.3M801.2 749L801.3 771.7M801.1 726.3L801.2 749M793.2 909.8L801.8 885M793.1 887.1L801.7 862.3M792.9 864.5L801.6 839.6M792.8 841.8L801.5 817M792.7 819.2L801.4 794.3M792.6 796.5L801.3 771.7M792.5 773.8L801.2 749M792.4 751.2L801.1 726.3M793.1 887.1L793.2 909.8M792.9 864.5L793.1 887.1M792.8 841.8L792.9 864.5M792.7 819.2L792.8 841.8M792.6 796.5L792.7 819.2M792.5 773.8L792.6 796.5M792.4 751.2L792.5 773.8M792.3 728.5L792.4 751.2M783.6 911.2L793.1 887.1M783.5 888.5L792.9 864.5M783.4 865.8L792.8 841.8M783.3 843.2L792.7 819.2M783.2 820.5L792.6 796.5M783.1 797.9L792.5 773.8M783 775.2L792.4 751.2M782.9 752.5L792.3 728.5M783.5 888.5L783.6 911.2M783.4 865.8L783.5 888.5M783.3 843.2L783.4 865.8M783.2 820.5L783.3 843.2M783.1 797.9L783.2 820.5M783 775.2L783.1 797.9M782.9 752.5L783 775.2M782.7 729.9L782.9 752.5M773.7 911.7L783.5 888.5M773.6 889L783.4 865.8M773.5 866.3L783.3 843.2M773.4 843.7L783.2 820.5M773.3 821L783.1 797.9M773.2 798.3L783 775.2M773.1 775.7L782.9 752.5M772.9 753L782.7 729.9M773.6 889L773.7 911.7M773.5 866.3L773.6 889M773.4 843.7L773.5 866.3M773.3 821L773.4 843.7M773.2 798.3L773.3 821M773.1 775.7L773.2 798.3M772.9 753L773.1 775.7M772.8 730.4L772.9 753M763.8 911.3L773.6 889M763.7 888.6L773.5 866.3M763.6 865.9L773.4 843.7M763.5 843.3L773.3 821M763.4 820.6L773.2 798.3M763.2 797.9L773.1 775.7M763.1 775.3L772.9 753M763 752.6L772.8 730.4M763.7 888.6L763.8 911.3M763.6 865.9L763.7 888.6M763.5 843.3L763.6 865.9M763.4 820.6L763.5 843.3M763.2 797.9L763.4 820.6M763.1 775.3L763.2 797.9M763 752.6L763.1 775.3M762.9 730L763 752.6M754.3 910L763.7 888.6M754.1 887.3L763.6 865.9M754 864.7L763.5 843.3M753.9 842L763.4 820.6M753.8 819.3L763.2 797.9M753.7 796.7L763.1 775.3M753.6 774L763 752.6M753.5 751.4L762.9 730M754.1 887.3L754.3 910M754 864.7L754.1 887.3M753.9 842L754 864.7M753.8 819.3L753.9 842M753.7 796.7L753.8 819.3M753.6 774L753.7 796.7M753.5 751.4L753.6 774M753.4 728.7L753.5 751.4M745.5 907.9L754.1 887.3M745.3 885.2L754 864.7M745.2 862.6L753.9 842M745.1 839.9L753.8 819.3M745 817.3L753.7 796.7M744.9 794.6L753.6 774M744.8 771.9L753.5 751.4M744.7 749.3L753.4 728.7M745.3 885.2L745.5 907.9M745.2 862.6L745.3 885.2M745.1 839.9L745.2 862.6M745 817.3L745.1 839.9M744.9 794.6L745 817.3M744.8 771.9L744.9 794.6M744.7 749.3L744.8 771.9M744.6 726.6L744.7 749.3M737.7 905.1L745.3 885.2M737.6 882.4L745.2 862.6M737.5 859.8L745.1 839.9M737.4 837.1L745 817.3M737.3 814.4L744.9 794.6M737.2 791.8L744.8 771.9M737.1 769.1L744.7 749.3M737 746.4L744.6 726.6M737.7 905.1L737.8 927.7M737.6 882.4L737.7 905.1M737.5 859.8L737.6 882.4M737.4 837.1L737.5 859.8M737.3 814.4L737.4 837.1M737.2 791.8L737.3 814.4M737.1 769.1L737.2 791.8M737 746.4L737.1 769.1M736.8 723.8L737 746.4M731.5 924.3L737.7 905.1M731.4 901.6L737.6 882.4M731.3 879L737.5 859.8M731.2 856.3L737.4 837.1M731.1 833.6L737.3 814.4M730.9 811L737.2 791.8M730.8 788.3L737.1 769.1M730.7 765.6L737 746.4M730.6 743L736.8 723.8M731.4 901.6L731.5 924.3M731.3 879L731.4 901.6M731.2 856.3L731.3 879M731.1 833.6L731.2 856.3M730.9 811L731.1 833.6M730.8 788.3L730.9 811M730.7 765.6L730.8 788.3M730.6 743L730.7 765.6M730.5 720.3L730.6 743M726.8 920.3L731.4 901.6M726.7 897.7L731.3 879M726.6 875L731.2 856.3M726.4 852.3L731.1 833.6M726.3 829.7L730.9 811M726.2 807L730.8 788.3M726.1 784.3L730.7 765.6M726 761.7L730.6 743M725.9 739L730.5 720.3M726.7 897.7L726.8 920.3M726.6 875L726.7 897.7M726.4 852.3L726.6 875M726.3 829.7L726.4 852.3M726.2 807L726.3 829.7M726.1 784.3L726.2 807M726 761.7L726.1 784.3M725.9 739L726 761.7M725.8 716.4L725.9 739M723.9 916L726.7 897.7M723.8 893.3L726.6 875M723.6 870.7L726.4 852.3M723.5 848L726.3 829.7M723.4 825.4L726.2 807M723.3 802.7L726.1 784.3M723.2 780L726 761.7M723.1 757.4L725.9 739M723 734.7L725.8 716.4M723.9 916L724 938.7M723.8 893.3L723.9 916M723.6 870.7L723.8 893.3M723.5 848L723.6 870.7M723.4 825.4L723.5 848M723.3 802.7L723.4 825.4M723.2 780L723.3 802.7M723.1 757.4L723.2 780M723 734.7L723.1 757.4M722.9 712L723 734.7M722.9 911.5L723 934.2M722.8 888.8L722.9 911.5M722.6 866.2L722.8 888.8M722.5 843.5L722.6 866.2M722.4 820.9L722.5 843.5M722.3 798.2L722.4 820.9M722.2 775.5L722.3 798.2M722.1 752.9L722.2 775.5M722 730.2L722.1 752.9M721.9 707.6L722 730.2M723.8 907L723.9 929.7M723.7 884.3L723.8 907M723.6 861.7L723.7 884.3M723.5 839L723.6 861.7M723.4 816.4L723.5 839M723.3 793.7L723.4 816.4M723.2 771L723.3 793.7M723 748.4L723.2 771M722.9 725.7L723 748.4M722.8 703.1L722.9 725.7M723.8 907L726.8 925.3M723.7 884.3L726.7 902.7M723.6 861.7L726.6 880M723.5 839L726.5 857.3M723.4 816.4L726.4 834.7M723.3 793.7L726.3 812M723.2 771L726.1 789.4M723 748.4L726 766.7M722.9 725.7L725.9 744M726.7 902.7L726.8 925.3M726.6 880L726.7 902.7M726.5 857.3L726.6 880M726.4 834.7L726.5 857.3M726.3 812L726.4 834.7M726.1 789.4L726.3 812M726 766.7L726.1 789.4M725.9 744L726 766.7M725.8 721.4L725.9 744M725.7 698.7L725.8 721.4M726.7 902.7L731.5 921.3M726.6 880L731.4 898.7M726.5 857.3L731.3 876M726.4 834.7L731.2 853.3M726.3 812L731 830.7M726.1 789.4L730.9 808M726 766.7L730.8 785.4M725.9 744L730.7 762.7M725.8 721.4L730.6 740M725.7 698.7L730.5 717.4M731.4 898.7L731.5 921.3M731.3 876L731.4 898.7M731.2 853.3L731.3 876M731 830.7L731.2 853.3M730.9 808L731 830.7M730.8 785.4L730.9 808M730.7 762.7L730.8 785.4M730.6 740L730.7 762.7M730.5 717.4L730.6 740M730.4 694.7L730.5 717.4M731.4 898.7L737.8 917.8M731.3 876L737.7 895.1M731.2 853.3L737.6 872.5M731 830.7L737.5 849.8M730.9 808L737.3 827.1M730.8 785.4L737.2 804.5M730.7 762.7L737.1 781.8M730.6 740L737 759.2M730.5 717.4L736.9 736.5M737.7 895.1L737.8 917.8M737.6 872.5L737.7 895.1M737.5 849.8L737.6 872.5M737.3 827.1L737.5 849.8M737.2 804.5L737.3 827.1M737.1 781.8L737.2 804.5M737 759.2L737.1 781.8M736.9 736.5L737 759.2M736.8 713.8L736.9 736.5M737.7 895.1L745.5 914.9M737.6 872.5L745.4 892.2M737.5 849.8L745.3 869.6M737.3 827.1L745.2 846.9M737.2 804.5L745 824.2M737.1 781.8L744.9 801.6M737 759.2L744.8 778.9M736.9 736.5L744.7 756.3M745.4 892.2L745.5 914.9M745.3 869.6L745.4 892.2M745.2 846.9L745.3 869.6M745 824.2L745.2 846.9M744.9 801.6L745 824.2M744.8 778.9L744.9 801.6M744.7 756.3L744.8 778.9M744.6 733.6L744.7 756.3M745.4 892.2L754.3 912.7M745.3 869.6L754.2 890.1M745.2 846.9L754 867.4M745 824.2L753.9 844.7M744.9 801.6L753.8 822.1M744.8 778.9L753.7 799.4M744.7 756.3L753.6 776.7M744.6 733.6L753.5 754.1M754.2 890.1L754.3 912.7M754 867.4L754.2 890.1M753.9 844.7L754 867.4M753.8 822.1L753.9 844.7M753.7 799.4L753.8 822.1M753.6 776.7L753.7 799.4M753.5 754.1L753.6 776.7M753.4 731.4L753.5 754.1M754.2 890.1L763.8 911.4M754 867.4L763.7 888.7M753.9 844.7L763.6 866M753.8 822.1L763.5 843.4M753.7 799.4L763.4 820.7M753.6 776.7L763.2 798.1M753.5 754.1L763.1 775.4M753.4 731.4L763 752.7M763.7 888.7L763.8 911.4M763.6 866L763.7 888.7M763.5 843.4L763.6 866M763.4 820.7L763.5 843.4M763.2 798.1L763.4 820.7M763.1 775.4L763.2 798.1M763 752.7L763.1 775.4M762.9 730.1L763 752.7M763.7 888.7L773.7 910.9M763.6 866L773.6 888.2M763.5 843.4L773.5 865.5M763.4 820.7L773.4 842.9M763.2 798.1L773.3 820.2M763.1 775.4L773.2 797.6M763 752.7L773 774.9M762.9 730.1L772.9 752.2M773.6 888.2L773.7 910.9M773.5 865.5L773.6 888.2M773.4 842.9L773.5 865.5M773.3 820.2L773.4 842.9M773.2 797.6L773.3 820.2M773 774.9L773.2 797.6M772.9 752.2L773 774.9M772.8 729.6L772.9 752.2M773.6 888.2L783.6 911.3M773.5 865.5L783.5 888.6M773.4 842.9L783.4 865.9M773.3 820.2L783.3 843.3M773.2 797.6L783.2 820.6M773 774.9L783.1 798M772.9 752.2L783 775.3M772.8 729.6L782.9 752.6M783.5 888.6L783.6 911.3M783.4 865.9L783.5 888.6M783.3 843.3L783.4 865.9M783.2 820.6L783.3 843.3M783.1 798L783.2 820.6M783 775.3L783.1 798M782.9 752.6L783 775.3M782.7 730L782.9 752.6M783.5 888.6L793.2 912.5M783.4 865.9L793.1 889.9M783.3 843.3L793 867.2M783.2 820.6L792.8 844.5M783.1 798L792.7 821.9M783 775.3L792.6 799.2M782.9 752.6L792.5 776.6M782.7 730L792.4 753.9M793.1 889.9L793.2 912.5M793 867.2L793.1 889.9M792.8 844.5L793 867.2M792.7 821.9L792.8 844.5M792.6 799.2L792.7 821.9M792.5 776.6L792.6 799.2M792.4 753.9L792.5 776.6M792.3 731.2L792.4 753.9M793.1 889.9L802 914.6M793 867.2L801.9 892M792.8 844.5L801.8 869.3M792.7 821.9L801.7 846.6M792.6 799.2L801.5 824M792.5 776.6L801.4 801.3M792.4 753.9L801.3 778.6M792.3 731.2L801.2 756M801.9 892L802 914.6M801.8 869.3L801.9 892M801.7 846.6L801.8 869.3M801.5 824L801.7 846.6M801.4 801.3L801.5 824M801.3 778.6L801.4 801.3M801.2 756L801.3 778.6M801.1 733.3L801.2 756M801.9 892L809.7 917.4M801.8 869.3L809.6 894.8M801.7 846.6L809.5 872.1M801.5 824L809.4 849.5M801.4 801.3L809.3 826.8M801.3 778.6L809.1 804.1M801.2 756L809 781.5M801.1 733.3L808.9 758.8M809.6 894.8L809.7 917.4M809.5 872.1L809.6 894.8M809.4 849.5L809.5 872.1M809.3 826.8L809.4 849.5M809.1 804.1L809.3 826.8M809 781.5L809.1 804.1M808.9 758.8L809 781.5M808.8 736.1L808.9 758.8M808.7 713.5L808.8 736.1M809.6 894.8L816 920.9M809.5 872.1L815.9 898.2M809.4 849.5L815.8 875.6M809.3 826.8L815.7 852.9M809.1 804.1L815.6 830.3M809 781.5L815.5 807.6M808.9 758.8L815.4 784.9M808.8 736.1L815.3 762.3M808.7 713.5L815.2 739.6M815.9 898.2L816 920.9M815.8 875.6L815.9 898.2M815.7 852.9L815.8 875.6M815.6 830.3L815.7 852.9M815.5 807.6L815.6 830.3M815.4 784.9L815.5 807.6M815.3 762.3L815.4 784.9M815.2 739.6L815.3 762.3M815 716.9L815.2 739.6M814.9 694.3L815 716.9M815.9 898.2L820.8 924.9M815.8 875.6L820.7 902.2M815.7 852.9L820.5 879.5M815.6 830.3L820.4 856.9M815.5 807.6L820.3 834.2M815.4 784.9L820.2 811.6M815.3 762.3L820.1 788.9M815.2 739.6L820 766.2M815 716.9L819.9 743.6M814.9 694.3L819.8 720.9M820.7 902.2L820.8 924.9M820.5 879.5L820.7 902.2M820.4 856.9L820.5 879.5M820.3 834.2L820.4 856.9M820.2 811.6L820.3 834.2M820.1 788.9L820.2 811.6M820 766.2L820.1 788.9M819.9 743.6L820 766.2M819.8 720.9L819.9 743.6M819.6 698.3L819.8 720.9M820.7 902.2L823.7 929.2M820.5 879.5L823.6 906.5M820.4 856.9L823.5 883.9M820.3 834.2L823.3 861.2M820.2 811.6L823.2 838.5M820.1 788.9L823.1 815.9M820 766.2L823 793.2M819.9 743.6L822.9 770.5M819.8 720.9L822.8 747.9M823.6 906.5L823.7 929.2M823.5 883.9L823.6 906.5M823.3 861.2L823.5 883.9M823.2 838.5L823.3 861.2M823.1 815.9L823.2 838.5M823 793.2L823.1 815.9M822.9 770.5L823 793.2M822.8 747.9L822.9 770.5M822.7 725.2L822.8 747.9M822.6 702.6L822.7 725.2M815.8 704L823.4 699.8M721.9 700.3L729.6 704.4M711.6 684.9L712.7 679.5M712.7 679.5L716.2 674.3M828.9 673.8L832.4 679M832.4 679L833.6 684.3M701.3 662.3L702.6 656M702.6 656L706.7 650M838.2 649.3L842.3 655.3M842.3 655.3L843.7 661.6M847.6 653.1L852.2 646.1M692.6 646.9L697.3 653.8M691 639.7L692.5 632.5M692.5 632.5L697.1 625.6M847.5 624.8L852.1 631.7M852.1 631.7L853.7 638.9M862.1 624.3L863.8 616.2M856.9 632.1L862.1 624.3M682.5 625.2L687.8 633M680.7 617.1L682.5 625.2M680.7 617.1L682.5 609M682.5 609L687.6 601.2M856.8 600.4L862 608.1M862 608.1L863.8 616.2M871.9 602.5L873.9 593.5M866.2 611.2L871.9 602.5M672.5 603.5L678.3 612.1M670.5 594.5L672.5 603.5M670.5 594.5L672.4 585.5M672.4 585.5L678.1 576.8M866 575.9L871.9 584.5M871.9 584.5L873.9 593.5M881.8 580.7L883.9 570.8M875.5 590.2L881.8 580.7M662.4 581.8L668.8 591.3M660.2 571.9L662.4 581.8M660.2 571.9L662.3 562M662.3 562L668.6 552.4M692.8 535.9L709.7 529.5M709.7 529.5L729 524.7M814.6 524.3L834 528.9M834 528.9L851 535.1M875.3 551.4L881.7 560.9M881.7 560.9L883.9 570.8M891.7 558.9L894 548.1M884.8 569.3L891.7 558.9M652.3 560.1L659.3 570.4M649.9 549.3L652.3 560.1M649.9 549.3L652.2 538.5M652.2 538.5L659.1 528.1M670.3 518.4L685.4 510M685.4 510L703.9 503M703.9 503L725 497.8M818.4 497.3L839.5 502.3M839.5 502.3L858 509.1M858 509.1L873.3 517.4M884.6 526.9L891.6 537.3M891.6 537.3L894 548.1M901.5 537.1L904 525.4M894.1 548.3L901.5 537.1M642.2 538.3L649.8 549.5M639.6 526.7L642.2 538.3M639.6 526.7L642.1 515M649.6 503.7L661.7 493.3M661.7 493.3L678.1 484.1M678.1 484.1L698.1 476.5M845 475.8L865.1 483.2M865.1 483.2L881.6 492.2M881.6 492.2L893.9 502.5M901.4 513.7L904 525.4M911.4 515.3L914.1 502.6M903.4 527.4L911.4 515.3M632.1 516.6L640.3 528.7M629.3 504.1L632.1 516.6M632 491.4L640 479.3M640 479.3L653.2 468.1M889.9 466.9L903.1 478M903.1 478L911.3 490.1M921.3 493.4L924.1 479.9M619.1 481.4L622 494.9M823.6 707.1L833.6 684.3M833.6 684.3L843.7 661.6M843.7 661.6L853.7 638.9M853.7 638.9L863.8 616.2M863.8 616.2L873.9 593.5M873.9 593.5L883.9 570.8M883.9 570.8L894 548.1M894 548.1L904 525.4M904 525.4L914.1 502.6M871.9 602.5L883.9 570.8M881.8 580.7L894 548.1M891.7 558.9L904 525.4M901.5 537.1L914.1 502.6M822.6 711.6L832.5 689.7M832.5 689.7L842.3 667.9M842.3 667.9L852.2 646.1M852.2 646.1L862.1 624.3M862.1 624.3L871.9 602.5M871.9 602.5L881.8 580.7M881.8 580.7L891.7 558.9M891.7 558.9L901.5 537.1M901.5 537.1L911.4 515.3M911.4 515.3L921.3 493.4M847.6 653.1L862.1 624.3M856.9 632.1L871.9 602.5M866.2 611.2L881.8 580.7M875.5 590.2L891.7 558.9M884.8 569.3L901.5 537.1M894.1 548.3L911.4 515.3M903.4 527.4L921.3 493.4M815.1 719.9L829 695M678.3 612.1L682.5 625.2M668.8 591.3L672.5 603.5M659.3 570.4L662.4 581.8M649.8 549.5L652.3 560.1M640.3 528.7L642.2 538.3M630.8 507.8L632.1 516.6M712.8 690.3L722.9 712M702.7 668.6L712.8 690.3M692.6 646.9L702.7 668.6M682.5 625.2L692.6 646.9M672.5 603.5L682.5 625.2M662.4 581.8L672.5 603.5M652.3 560.1L662.4 581.8M642.2 538.3L652.3 560.1M632.1 516.6L642.2 538.3M622 494.9L632.1 516.6M682.5 625.2L691 639.7M672.5 603.5L680.7 617.1M662.4 581.8L670.5 594.5M652.3 560.1L660.2 571.9M642.2 538.3L649.9 549.3M632.1 516.6L639.6 526.7M711.6 684.9L721.9 707.6M701.3 662.3L711.6 684.9M691 639.7L701.3 662.3M680.7 617.1L691 639.7M670.5 594.5L680.7 617.1M660.2 571.9L670.5 594.5M649.9 549.3L660.2 571.9M639.6 526.7L649.9 549.3M629.3 504.1L639.6 526.7M711.6 684.9L722.8 703.1M701.3 662.3L712.7 679.5M691 639.7L702.6 656M680.7 617.1L692.5 632.5M670.5 594.5L682.5 609M660.2 571.9L672.4 585.5M649.9 549.3L662.3 562M639.6 526.7L652.2 538.5M619.1 481.4L632 491.4M712.7 679.5L722.8 703.1M702.6 656L712.7 679.5M692.5 632.5L702.6 656M682.5 609L692.5 632.5M672.4 585.5L682.5 609M662.3 562L672.4 585.5M652.2 538.5L662.3 562M621.9 467.9L632 491.4M712.7 679.5L725.7 698.7M702.6 656L716.2 674.3M692.5 632.5L706.7 650M682.5 609L697.1 625.6M672.4 585.5L687.6 601.2M662.3 562L678.1 576.8M652.2 538.5L668.6 552.4M632 491.4L649.6 503.7M621.9 467.9L640 479.3M640 479.3L649.6 503.7M630.5 454.9L640 479.3M649.6 503.7L670.3 518.4M640 479.3L661.7 493.3M653.2 468.1L661.7 493.3M644.6 442.9L653.2 468.1M670.3 518.4L692.8 535.9M661.7 493.3L685.4 510M653.2 468.1L678.1 484.1M678.1 484.1L685.4 510M670.8 458.2L678.1 484.1M663.5 432.3L670.8 458.2M685.4 510L709.7 529.5M678.1 484.1L703.9 503M709.7 529.5L715.5 555.9M703.9 503L709.7 529.5M698.1 476.5L703.9 503M692.3 450.1L698.1 476.5M686.6 423.6L692.3 450.1M709.7 529.5L733 551.6M703.9 503L729 524.7M814.6 524.3L828.5 555.4M818.4 497.3L834 528.9M828.5 555.4L834 528.9M834 528.9L839.5 502.3M839.5 502.3L845 475.8M845 475.8L850.5 449.3M850.5 449.3L856.1 422.8M839.5 502.3L851 535.1M845 475.8L858 509.1M858 509.1L865.1 483.2M865.1 483.2L872.2 457.2M872.2 457.2L879.2 431.3M858 509.1L864.9 542.7M865.1 483.2L873.3 517.4M872.2 457.2L881.6 492.2M881.6 492.2L889.9 466.9M889.9 466.9L898.2 441.6M881.6 492.2L884.6 526.9M889.9 466.9L893.9 502.5M893.9 502.5L903.1 478M903.1 478L912.4 453.5M822.6 702.6L828.9 673.8M832.4 679L838.2 649.3M842.3 655.3L847.5 624.8M852.1 631.7L856.8 600.4M862 608.1L866 575.9M871.9 584.5L875.3 551.4M881.7 560.9L884.6 526.9M901.4 513.7L903.1 478M911.3 490.1L912.4 453.5M822.6 702.6L832.4 679M832.4 679L842.3 655.3M842.3 655.3L852.1 631.7M852.1 631.7L862 608.1M862 608.1L871.9 584.5M871.9 584.5L881.7 560.9M881.7 560.9L891.6 537.3M911.3 490.1L921.1 466.5M823.6 707.1L832.4 679M833.6 684.3L842.3 655.3M843.7 661.6L852.1 631.7M853.7 638.9L862 608.1M863.8 616.2L871.9 584.5M873.9 593.5L881.7 560.9M883.9 570.8L891.6 537.3M894 548.1L901.4 513.7M914.1 502.6L921.1 466.5M921.2 470.8L924 457.3M898.5 495.8L912.6 483.8M879.6 506.4L898.5 495.8M856.5 515.1L879.6 506.4M663.9 507.5L687 515.9M644.8 497.1L663.9 507.5M630.7 485.2L644.8 497.1M618.9 458.8L621.9 472.3M618.9 458.8L621.8 445.3M621.8 445.3L630.4 432.3M630.4 432.3L644.5 420.2M644.5 420.2L663.4 409.7M663.4 409.7L686.5 400.9M856 400.1L879.1 408.6M879.1 408.6L898.1 419M898.1 419L912.3 430.9M912.3 430.9L921 443.8M921 443.8L924 457.3M921.1 448.1L923.9 434.6M912.4 461.1L921.1 448.1M879.5 483.7L898.4 473.2M856.4 492.5L879.5 483.7M663.7 484.8L686.9 493.3M644.7 474.4L663.7 484.8M621.8 449.6L630.6 462.5M618.8 436.1L621.8 449.6M618.8 436.1L621.7 422.6M621.7 422.6L630.3 409.6M630.3 409.6L644.3 397.6M644.3 397.6L663.3 387M663.3 387L686.3 378.3M855.8 377.4L879 385.9M879 385.9L898 396.3M898 396.3L912.2 408.2M912.2 408.2L920.9 421.1M920.9 421.1L923.9 434.6M920.9 425.5L923.8 412M912.3 438.5L920.9 425.5M898.3 450.5L912.3 438.5M630.5 439.9L644.6 451.8M621.7 426.9L630.5 439.9M618.7 413.5L621.7 426.9M618.7 413.5L621.6 399.9M621.6 399.9L630.2 386.9M630.2 386.9L644.2 374.9M644.2 374.9L663.2 364.3M663.2 364.3L686.2 355.6M855.7 354.8L878.9 363.3M878.9 363.3L897.9 373.7M897.9 373.7L912.1 385.5M912.1 385.5L920.8 398.5M920.8 398.5L923.8 412M920.8 402.8L923.7 389.3M912.2 415.8L920.8 402.8M898.2 427.8L912.2 415.8M879.3 438.4L898.2 427.8M644.5 429.1L663.5 439.5M630.3 417.2L644.5 429.1M621.6 404.3L630.3 417.2M618.6 390.8L621.6 404.3M618.6 390.8L621.5 377.3M621.5 377.3L630.1 364.3M630.1 364.3L644.1 352.2M644.1 352.2L663 341.7M663 341.7L686.1 333M855.6 332.1L878.8 340.6M878.8 340.6L897.8 351M897.8 351L912 362.9M912 362.9L920.7 375.8M920.7 375.8L923.7 389.3M920.7 380.1L923.6 366.6M912.1 393.2L920.7 380.1M898.1 405.2L912.1 393.2M879.2 415.8L898.1 405.2M856.1 424.5L879.2 415.8M663.4 416.8L686.6 425.3M644.4 406.4L663.4 416.8M630.2 394.5L644.4 406.4M621.5 381.6L630.2 394.5M618.5 368.1L621.5 381.6M618.5 368.1L621.4 354.6M621.4 354.6L630 341.6M630 341.6L644 329.6M644 329.6L662.9 319M662.9 319L686 310.3M855.5 309.5L878.7 317.9M878.7 317.9L897.7 328.3M897.7 328.3L911.8 340.2M911.8 340.2L920.6 353.2M920.6 353.2L923.6 366.6M920.6 357.5L923.5 344M912 370.5L920.6 357.5M898 382.5L912 370.5M879 393.1L898 382.5M856 401.8L879 393.1M829.6 408.3L856 401.8M686.5 402.6L712.9 408.9M663.3 394.2L686.5 402.6M644.3 383.8L663.3 394.2M630.1 371.9L644.3 383.8M621.4 358.9L630.1 371.9M618.4 345.5L621.4 358.9M618.4 345.5L621.2 332M621.2 332L629.9 318.9M629.9 318.9L643.9 306.9M643.9 306.9L662.8 296.3M878.6 295.3L897.6 305.7M897.6 305.7L911.7 317.6M911.7 317.6L920.5 330.5M920.5 330.5L923.5 344M920.5 334.8L923.4 321.3M911.9 347.8L920.5 334.8M897.8 359.9L911.9 347.8M878.9 370.4L897.8 359.9M855.9 379.1L878.9 370.4M663.2 371.5L686.4 380M644.2 361.1L663.2 371.5M630 349.2L644.2 361.1M621.3 336.3L630 349.2M618.3 322.8L621.3 336.3M618.3 322.8L621.1 309.3M621.1 309.3L629.8 296.3M629.8 296.3L643.8 284.3M897.5 283L911.6 294.9M911.6 294.9L920.4 307.8M920.4 307.8L923.4 321.3M920.4 312.2L923.3 298.6M911.8 325.2L920.4 312.2M897.7 337.2L911.8 325.2M878.8 347.8L897.7 337.2M855.7 356.5L878.8 347.8M663.1 348.8L686.2 357.3M644.1 338.4L663.1 348.8M629.9 326.6L644.1 338.4M621.2 313.6L629.9 326.6M618.2 300.1L621.2 313.6M618.2 300.1L621 286.6M621 286.6L629.6 273.6M911.5 272.2L920.3 285.2M920.3 285.2L923.3 298.6M920.3 289.5L923.1 276M911.7 302.5L920.3 289.5M897.6 314.5L911.7 302.5M878.7 325.1L897.6 314.5M855.6 333.8L878.7 325.1M663 326.2L686.1 334.7M643.9 315.8L663 326.2M629.8 303.9L643.9 315.8M621 291L629.8 303.9M618 277.5L621 291M618 277.5L620.9 264M920.1 262.5L923.1 276M924 457.3L924.1 479.9M923.9 434.6L924 457.3M923.8 412L923.9 434.6M923.7 389.3L923.8 412M923.6 366.6L923.7 389.3M923.5 344L923.6 366.6M923.4 321.3L923.5 344M923.3 298.6L923.4 321.3M923.1 276L923.3 298.6M923 253.3L923.1 276M921.2 470.8L923.9 434.6M921.1 448.1L923.8 412M920.9 425.5L923.7 389.3M920.8 402.8L923.6 366.6M920.7 380.1L923.5 344M920.6 357.5L923.4 321.3M920.5 334.8L923.3 298.6M920.4 312.2L923.1 276M920.3 289.5L923 253.3M921.1 448.1L921.2 470.8M920.9 425.5L921.1 448.1M920.8 402.8L920.9 425.5M920.7 380.1L920.8 402.8M920.6 357.5L920.7 380.1M920.5 334.8L920.6 357.5M920.4 312.2L920.5 334.8M920.3 289.5L920.4 312.2M920.2 266.8L920.3 289.5M912.7 506.5L921.2 470.8M912.4 461.1L920.9 425.5M912.3 438.5L920.8 402.8M912.2 415.8L920.7 380.1M912.1 393.2L920.6 357.5M912 370.5L920.5 334.8M911.9 347.8L920.4 312.2M911.8 325.2L920.3 289.5M911.7 302.5L920.2 266.8M912.3 438.5L912.4 461.1M912.2 415.8L912.3 438.5M912.1 393.2L912.2 415.8M912 370.5L912.1 393.2M911.9 347.8L912 370.5M911.8 325.2L911.9 347.8M911.7 302.5L911.8 325.2M911.6 279.8L911.7 302.5M898.6 518.5L912.6 483.8M898.5 495.8L912.4 461.1M898.3 450.5L912.2 415.8M898.2 427.8L912.1 393.2M898.1 405.2L912 370.5M898 382.5L911.9 347.8M897.8 359.9L911.8 325.2M897.7 337.2L911.7 302.5M897.6 314.5L911.6 279.8M898.2 427.8L898.3 450.5M898.1 405.2L898.2 427.8M898 382.5L898.1 405.2M897.8 359.9L898 382.5M897.7 337.2L897.8 359.9M897.6 314.5L897.7 337.2M897.5 291.9L897.6 314.5M879.7 529.1L898.5 495.8M879.6 506.4L898.4 473.2M879.3 438.4L898.1 405.2M879.2 415.8L898 382.5M879 393.1L897.8 359.9M878.9 370.4L897.7 337.2M878.8 347.8L897.6 314.5M878.7 325.1L897.5 291.9M879.6 506.4L879.7 529.1M879.2 415.8L879.3 438.4M879 393.1L879.2 415.8M878.9 370.4L879 393.1M878.8 347.8L878.9 370.4M878.7 325.1L878.8 347.8M878.6 302.4L878.7 325.1M856.6 537.8L879.6 506.4M856.5 515.1L879.5 483.7M856.4 492.5L879.4 461.1M856.1 424.5L879 393.1M856 401.8L878.9 370.4M855.9 379.1L878.8 347.8M855.7 356.5L878.7 325.1M855.6 333.8L878.6 302.4M856.5 515.1L856.6 537.8M856 401.8L856.1 424.5M855.9 379.1L856 401.8M855.7 356.5L855.9 379.1M855.6 333.8L855.7 356.5M855.5 311.2L855.6 333.8M829.7 431L856 401.8M686.6 425.3L712.9 408.9M687 515.9L687.1 538.6M686.5 402.6L686.6 425.3M686.4 380L686.5 402.6M686.2 357.3L686.4 380M686.1 334.7L686.2 357.3M686 312L686.1 334.7M664 530.1L687 515.9M663.9 507.5L686.9 493.3M663.7 484.8L686.8 470.6M663.4 416.8L686.5 402.6M663.3 394.2L686.4 380M663.2 371.5L686.2 357.3M663.1 348.8L686.1 334.7M663 326.2L686 312M663.9 507.5L664 530.1M663.4 416.8L663.5 439.5M663.3 394.2L663.4 416.8M663.2 371.5L663.3 394.2M663.1 348.8L663.2 371.5M663 326.2L663.1 348.8M662.9 303.5L663 326.2M644.9 519.7L663.9 507.5M644.8 497.1L663.7 484.8M644.5 429.1L663.4 416.8M644.4 406.4L663.3 394.2M644.3 383.8L663.2 371.5M644.2 361.1L663.1 348.8M644.1 338.4L663 326.2M643.9 315.8L662.9 303.5M644.5 429.1L644.6 451.8M644.4 406.4L644.5 429.1M644.3 383.8L644.4 406.4M644.2 361.1L644.3 383.8M644.1 338.4L644.2 361.1M643.9 315.8L644.1 338.4M643.8 293.1L643.9 315.8M630.8 507.8L644.8 497.1M630.7 485.2L644.7 474.4M630.5 439.9L644.5 429.1M630.3 417.2L644.4 406.4M630.2 394.5L644.3 383.8M630.1 371.9L644.2 361.1M630 349.2L644.1 338.4M629.9 326.6L643.9 315.8M629.8 303.9L643.8 293.1M630.5 439.9L630.6 462.5M630.3 417.2L630.5 439.9M630.2 394.5L630.3 417.2M630.1 371.9L630.2 394.5M630 349.2L630.1 371.9M629.9 326.6L630 349.2M629.8 303.9L629.9 326.6M629.7 281.2L629.8 303.9M622 494.9L630.7 485.2M621.8 449.6L630.5 439.9M621.7 426.9L630.3 417.2M621.6 404.3L630.2 394.5M621.5 381.6L630.1 371.9M621.4 358.9L630 349.2M621.3 336.3L629.9 326.6M621.2 313.6L629.8 303.9M621 291L629.7 281.2M621.8 449.6L621.9 472.3M621.7 426.9L621.8 449.6M621.6 404.3L621.7 426.9M621.5 381.6L621.6 404.3M621.4 358.9L621.5 381.6M621.3 336.3L621.4 358.9M621.2 313.6L621.3 336.3M621 291L621.2 313.6M620.9 268.3L621 291M618.9 458.8L621.8 449.6M618.8 436.1L621.7 426.9M618.7 413.5L621.6 404.3M618.6 390.8L621.5 381.6M618.5 368.1L621.4 358.9M618.4 345.5L621.3 336.3M618.3 322.8L621.2 313.6M618.2 300.1L621 291M618 277.5L620.9 268.3M618.9 458.8L619.1 481.4M618.8 436.1L618.9 458.8M618.7 413.5L618.8 436.1M618.6 390.8L618.7 413.5M618.5 368.1L618.6 390.8M618.4 345.5L618.5 368.1M618.3 322.8L618.4 345.5M618.2 300.1L618.3 322.8M618 277.5L618.2 300.1M617.9 254.8L618 277.5M618.9 458.8L621.9 467.9M618.8 436.1L621.8 445.3M618.7 413.5L621.7 422.6M618.6 390.8L621.6 399.9M618.5 368.1L621.5 377.3M618.4 345.5L621.4 354.6M618.3 322.8L621.2 332M618.2 300.1L621.1 309.3M618 277.5L621 286.6M621.8 445.3L621.9 467.9M621.7 422.6L621.8 445.3M621.6 399.9L621.7 422.6M621.5 377.3L621.6 399.9M621.4 354.6L621.5 377.3M621.2 332L621.4 354.6M621.1 309.3L621.2 332M621 286.6L621.1 309.3M620.9 264L621 286.6M621.8 445.3L630.5 454.9M621.7 422.6L630.4 432.3M621.6 399.9L630.3 409.6M621.5 377.3L630.2 386.9M621.4 354.6L630.1 364.3M621.2 332L630 341.6M621.1 309.3L629.9 318.9M621 286.6L629.8 296.3M630.4 432.3L630.5 454.9M630.3 409.6L630.4 432.3M630.2 386.9L630.3 409.6M630.1 364.3L630.2 386.9M630 341.6L630.1 364.3M629.9 318.9L630 341.6M629.8 296.3L629.9 318.9M629.6 273.6L629.8 296.3M630.4 432.3L644.6 442.9M630.3 409.6L644.5 420.2M630.2 386.9L644.3 397.6M630.1 364.3L644.2 374.9M630 341.6L644.1 352.2M629.9 318.9L644 329.6M629.8 296.3L643.9 306.9M644.5 420.2L644.6 442.9M644.3 397.6L644.5 420.2M644.2 374.9L644.3 397.6M644.1 352.2L644.2 374.9M644 329.6L644.1 352.2M643.9 306.9L644 329.6M643.8 284.3L643.9 306.9M644.5 420.2L663.5 432.3M644.3 397.6L663.4 409.7M644.2 374.9L663.3 387M644.1 352.2L663.2 364.3M644 329.6L663 341.7M643.9 306.9L662.9 319M663.4 409.7L663.5 432.3M663.3 387L663.4 409.7M663.2 364.3L663.3 387M663 341.7L663.2 364.3M662.9 319L663 341.7M662.8 296.3L662.9 319M663.4 409.7L686.6 423.6M663.3 387L686.5 400.9M663.2 364.3L686.3 378.3M663 341.7L686.2 355.6M662.9 319L686.1 333M686.5 400.9L686.6 423.6M686.3 378.3L686.5 400.9M686.2 355.6L686.3 378.3M686.1 333L686.2 355.6M686 310.3L686.1 333M686.5 400.9L712.9 417.1M829.6 393.8L856.1 422.8M856 400.1L856.1 422.8M855.8 377.4L856 400.1M855.7 354.8L855.8 377.4M855.6 332.1L855.7 354.8M855.5 309.5L855.6 332.1M856 400.1L879.2 431.3M855.8 377.4L879.1 408.6M855.7 354.8L879 385.9M855.6 332.1L878.9 363.3M855.5 309.5L878.8 340.6M879.1 408.6L879.2 431.3M879 385.9L879.1 408.6M878.9 363.3L879 385.9M878.8 340.6L878.9 363.3M878.7 317.9L878.8 340.6M878.6 295.3L878.7 317.9M879.1 408.6L898.2 441.6M879 385.9L898.1 419M878.9 363.3L898 396.3M878.8 340.6L897.9 373.7M878.7 317.9L897.8 351M878.6 295.3L897.7 328.3M898.1 419L898.2 441.6M898 396.3L898.1 419M897.9 373.7L898 396.3M897.8 351L897.9 373.7M897.7 328.3L897.8 351M897.6 305.7L897.7 328.3M897.5 283L897.6 305.7M898.1 419L912.4 453.5M898 396.3L912.3 430.9M897.9 373.7L912.2 408.2M897.8 351L912.1 385.5M897.7 328.3L912 362.9M897.6 305.7L911.8 340.2M897.5 283L911.7 317.6M912.3 430.9L912.4 453.5M912.2 408.2L912.3 430.9M912.1 385.5L912.2 408.2M912 362.9L912.1 385.5M911.8 340.2L912 362.9M911.7 317.6L911.8 340.2M911.6 294.9L911.7 317.6M911.5 272.2L911.6 294.9M912.3 430.9L921.1 466.5M912.2 408.2L921 443.8M912.1 385.5L920.9 421.1M912 362.9L920.8 398.5M911.8 340.2L920.7 375.8M911.7 317.6L920.6 353.2M911.6 294.9L920.5 330.5M911.5 272.2L920.4 307.8M921 443.8L921.1 466.5M920.9 421.1L921 443.8M920.8 398.5L920.9 421.1M920.7 375.8L920.8 398.5M920.6 353.2L920.7 375.8M920.5 330.5L920.6 353.2M920.4 307.8L920.5 330.5M920.3 285.2L920.4 307.8M920.1 262.5L920.3 285.2M921 443.8L924.1 479.9M920.9 421.1L924 457.3M920.8 398.5L923.9 434.6M920.7 375.8L923.8 412M920.6 353.2L923.7 389.3M920.5 330.5L923.6 366.6M920.4 307.8L923.5 344M920.3 285.2L923.4 321.3M920.1 262.5L923.3 298.6M727.9 187.1L734.2 183.6M734.2 183.6L741.9 180.7M741.9 180.7L750.7 178.5M750.7 178.5L760.2 177.1M760.2 177.1L770.1 176.6M770.1 176.6L780 177M780 177L789.6 178.3M789.6 178.3L798.4 180.4M798.4 180.4L806.1 183.2M806.1 183.2L812.4 186.7M817.1 181.1L820 176.7M812.4 185.1L817.1 181.1M723.1 181.5L727.9 185.5M720.2 177.2L723.1 181.5M720.2 168.2L723.1 163.9M723.1 163.9L727.7 159.9M727.7 159.9L734 156.4M734 156.4L741.7 153.5M741.7 153.5L750.5 151.3M750.5 151.3L760.1 149.9M760.1 149.9L770 149.4M770 149.4L779.9 149.8M779.9 149.8L789.4 151.1M789.4 151.1L798.2 153.2M798.2 153.2L806 156M806 156L812.3 159.5M812.3 159.5L817 163.4M817 163.4L819.9 167.7M817 153.9L819.8 149.5M812.3 157.9L817 153.9M806 161.4L812.3 157.9M798.3 164.3L806 161.4M789.5 166.5L798.3 164.3M780 167.9L789.5 166.5M770.1 168.3L780 167.9M760.1 168L770.1 168.3M750.6 166.7L760.1 168M741.8 164.6L750.6 166.7M734.1 161.8L741.8 164.6M727.7 158.3L734.1 161.8M723 154.3L727.7 158.3M720.1 150L723 154.3M720.1 141L722.9 136.7M722.9 136.7L727.6 132.7M812.2 132.3L816.9 136.2M816.9 136.2L819.8 140.6M820.9 172.2L821.1 199.4M820.8 145L820.9 172.2M820.7 117.9L820.8 145M819.8 149.5L820 176.7M819.7 122.4L819.8 149.5M817.1 181.1L819.8 149.5M817 153.9L819.7 122.4M817 153.9L817.1 181.1M816.8 126.7L817 153.9M812.4 185.1L817 153.9M812.3 157.9L816.8 126.7M812.3 157.9L812.4 185.1M812.2 130.7L812.3 157.9M806.1 188.6L812.3 157.9M806 161.4L812.2 130.7M806 161.4L806.1 188.6M805.9 134.2L806 161.4M798.4 191.5L806 161.4M798.3 164.3L805.9 134.2M798.3 164.3L798.4 191.5M798.2 137.1L798.3 164.3M789.6 193.7L798.3 164.3M789.5 166.5L798.2 137.1M789.5 166.5L789.6 193.7M789.4 139.3L789.5 166.5M780.1 195.1L789.5 166.5M780 167.9L789.4 139.3M780 167.9L780.1 195.1M779.8 140.7L780 167.9M770.2 195.5L780 167.9M770.1 168.3L779.8 140.7M770.1 168.3L770.2 195.5M769.9 141.2L770.1 168.3M760.3 195.1L770.1 168.3M760.1 168L769.9 141.2M760.1 168L760.3 195.1M760 140.8L760.1 168M750.7 193.9L760.1 168M750.6 166.7L760 140.8M750.6 166.7L750.7 193.9M750.5 139.5L750.6 166.7M741.9 191.8L750.6 166.7M741.8 164.6L750.5 139.5M741.8 164.6L741.9 191.8M741.7 137.4L741.8 164.6M734.2 189L741.8 164.6M734.1 161.8L741.7 137.4M734.1 161.8L734.2 189M733.9 134.6L734.1 161.8M727.9 185.5L734.1 161.8M727.7 158.3L733.9 134.6M727.7 158.3L727.9 185.5M727.6 131.1L727.7 158.3M723.1 181.5L727.7 158.3M723 154.3L727.6 131.1M723 154.3L723.1 181.5M722.9 127.2L723 154.3M720.2 177.2L723 154.3M720.1 150L722.9 127.2M720.1 150L720.2 177.2M720 122.8L720.1 150M719.2 172.7L719.4 199.9M719.1 145.5L719.2 172.7M719 118.4L719.1 145.5M720.2 168.2L720.3 195.4M720.1 141L720.2 168.2M719.9 113.8L720.1 141M720.2 168.2L723.2 191.1M720.1 141L723.1 163.9M723.1 163.9L723.2 191.1M722.9 136.7L723.1 163.9M723.1 163.9L727.9 187.1M722.9 136.7L727.7 159.9M727.7 159.9L727.9 187.1M727.6 132.7L727.7 159.9M727.7 159.9L734.2 183.6M727.6 132.7L734 156.4M734 156.4L734.2 183.6M733.9 129.2L734 156.4M734 156.4L741.9 180.7M733.9 129.2L741.7 153.5M741.7 153.5L741.9 180.7M741.6 126.3L741.7 153.5M741.7 153.5L750.7 178.5M750.5 151.3L750.7 178.5M750.5 151.3L760.2 177.1M760.1 149.9L760.2 177.1M760.1 149.9L770.1 176.6M770 149.4L770.1 176.6M770 149.4L780 177M779.9 149.8L780 177M779.9 149.8L789.6 178.3M789.4 151.1L789.6 178.3M789.4 151.1L798.4 180.4M789.3 123.9L798.2 153.2M798.2 153.2L798.4 180.4M798.1 126L798.2 153.2M798.2 153.2L806.1 183.2M798.1 126L806 156M806 156L806.1 183.2M805.8 128.8L806 156M806 156L812.4 186.7M805.8 128.8L812.3 159.5M812.3 159.5L812.4 186.7M812.2 132.3L812.3 159.5M812.3 159.5L817.2 190.6M812.2 132.3L817 163.4M817 163.4L817.2 190.6M816.9 136.2L817 163.4M817 163.4L820.1 194.9M816.9 136.2L819.9 167.7M819.9 167.7L820.1 194.9M819.8 140.6L819.9 167.7M819.7 113.4L819.8 140.6" stroke="#606060" stroke-opacity="0.6"/>
<path d="M806.9 351.8L807.1 379M806.7 297.4L806.8 324.6M799.4 381.9L806.9 351.8M735.1 379.3L742.7 355M735 352.1L735.1 379.3M734.7 297.7L734.9 324.9M735 346.7L735.1 373.9M734.7 292.3L734.8 319.5M806.9 346.4L807 373.6M806.6 292L806.8 319.2" stroke="#6c6c6c" stroke-opacity="0.15"/>
<path d="M742.8 371L751.6 368.8M790.5 368.6L799.3 370.7M751.5 341.6L761 340.3M780.8 340.2L790.4 341.5M780.8 331L790.3 329.7M751.4 329.9L760.9 331.1M799 300.3L806.5 270.2M790.3 329.7L790.4 356.9M780.9 358.2L790.3 329.7M780.8 331L780.9 358.2M760.9 331.1L761.1 358.3M751.5 357L760.9 331.1M751.4 329.9L751.5 357M742.9 382.2L751.5 357M751.5 341.6L751.6 368.8M751.3 314.5L751.5 341.6M751.5 341.6L761.1 367.5M751.3 314.5L761 340.3M761 340.3L761.1 367.5M760.9 313.1L761 340.3M780.8 340.2L781 367.4M780.7 313L780.8 340.2M780.8 340.2L790.5 368.6M780.7 313L790.4 341.5M790.4 341.5L790.5 368.6M790.2 314.3L790.4 341.5M799.2 343.5L807 373.6" stroke="#6c6c6c" stroke-opacity="0.2"/>
<path d="M824.7 305.5L834.1 300.2M707.3 300.8L716.8 306M707.2 289.6L716.7 284.3M824.6 283.7L834.1 288.9M707.4 316.8L716.8 311.5M824.7 310.9L834.2 316.1M824.5 278.3L834.1 300.2M824.7 305.5L834.3 327.4M824.9 359.8L825.1 387M825.1 387L825.2 414.2M717.1 360.4L717.2 387.6M717.2 387.6L717.3 414.8M707.2 273.6L716.8 306M707.3 300.8L716.9 333.2M707.4 316.8L716.7 284.3M824.7 310.9L834.1 288.9M728 214.3L734.3 210.8M806.2 210.4L812.6 213.9M806.3 215.8L812.6 212.3M728 212.7L734.3 216.2M806.3 215.8L812.4 185.1M728 212.7L734.2 189M727.9 187.1L734.3 210.8M798.5 207.6L806.4 237.6M806.1 183.2L812.6 213.9" stroke="#6c6c6c" stroke-opacity="0.25"/>
<path d="M800.4 394.7L813.5 391.4M728.8 391.8L742 394.9M781.1 385.4L790.6 384.1M751.7 384.2L761.2 385.5M751.2 287.3L760.7 285.9M780.6 285.8L790.1 287.1M742.3 262.2L751.1 260.1M751.1 260.1L760.6 258.7M780.4 258.6L790 259.9M790 259.9L798.8 262M790 275.3L798.8 273.1M780.5 276.6L790 275.3M751.1 275.5L760.7 276.7M742.3 273.4L751.1 275.5M742.1 235L750.9 232.9M750.9 232.9L760.5 231.5M780.3 231.4L789.8 232.7M789.8 232.7L798.6 234.8M789.9 248.1L798.7 245.9M780.4 249.4L789.9 248.1M751 248.3L760.5 249.5M742.2 246.2L751 248.3M780.2 222.2L789.8 220.9M750.9 221.1L760.4 222.3M790 275.3L798.7 245.9M789.9 248.1L798.6 218.7M790.6 384.1L790.7 411.2M790.4 356.9L790.6 384.1M789.9 248.1L790 275.3M789.8 220.9L789.9 248.1M781.2 412.6L790.6 384.1M781.1 385.4L790.4 356.9M780.5 276.6L789.9 248.1M780.4 249.4L789.8 220.9M781.1 385.4L781.2 412.6M780.9 358.2L781.1 385.4M780.4 249.4L780.5 276.6M780.2 222.2L780.4 249.4M761.2 385.5L761.3 412.7M761.1 358.3L761.2 385.5M760.5 249.5L760.7 276.7M760.4 222.3L760.5 249.5M751.8 411.4L761.2 385.5M751.7 384.2L761.1 358.3M751.1 275.5L760.5 249.5M751 248.3L760.4 222.3M751.7 384.2L751.8 411.4M751.5 357L751.7 384.2M751 248.3L751.1 275.5M750.9 221.1L751 248.3M742.3 273.4L751 248.3M742.2 246.2L750.9 221.1M742.3 262.2L751.2 287.3M742.1 235L751.1 260.1M751.1 260.1L751.2 287.3M750.9 232.9L751.1 260.1M751.1 260.1L760.7 285.9M750.9 232.9L760.6 258.7M760.6 258.7L760.7 285.9M760.5 231.5L760.6 258.7M780.4 258.6L780.6 285.8M780.3 231.4L780.4 258.6M780.4 258.6L790.1 287.1M780.3 231.4L790 259.9M790 259.9L790.1 287.1M789.8 232.7L790 259.9M790 259.9L798.9 289.2M789.8 232.7L798.8 262" stroke="#6c6c6c" stroke-opacity="0.3"/>
<path d="M800.5 421.8L813.7 418.6M728.9 419L742.1 422.1M806.1 188.6L812.4 185.1M727.9 185.5L734.2 189" stroke="#6c6c6c" stroke-opacity="0.35"/>
<path d="M816.2 946.5L820.9 942.5M726.9 943L731.6 946.9M816.2 946.5L820.7 919.8M726.9 943L731.5 924.3M629.6 273.6L643.7 261.6M897.4 260.3L911.5 272.2M629.5 251L643.6 238.9M897.2 237.7L911.4 249.6M629.4 228.3L643.5 216.3M897.1 215L911.3 226.9M629.6 273.6L643.8 284.3M629.5 251L643.7 261.6M629.4 228.3L643.6 238.9M897.4 260.3L911.6 294.9M897.2 237.7L911.5 272.2M897.1 215L911.4 249.6M722.8 109.5L727.5 105.5M812 105.1L816.7 109M722.8 109.5L727.6 132.7M812 105.1L816.9 136.2" stroke="#6c6c6c" stroke-opacity="0.4"/>
<path d="M726.8 925.3L731.5 921.3M816 920.9L820.8 924.9M897.5 291.9L911.6 279.8M629.7 281.2L643.8 293.1M812.2 130.7L816.8 126.7M722.9 127.2L727.6 131.1" stroke="#6c6c6c" stroke-opacity="0.5"/>
<path d="M823.4 699.8L829 695M806.6 707.5L815.8 704M729.6 704.4L738.8 707.8M716.3 695.5L721.9 700.3M831.8 679.6L838.3 674M822.9 684.6L831.8 679.6M713.4 680.2L722.3 685.1M706.8 674.7L713.4 680.2M852.2 646.1L853.7 638.9M840.1 659.5L847.6 653.1M830 665.1L840.1 659.5M704.8 660.1L715 665.7M697.3 653.8L704.8 660.1M691 639.7L692.6 646.9M848.5 639.3L856.9 632.1M837.1 645.7L848.5 639.3M696.3 640.1L707.7 646.3M687.8 633L696.3 640.1M856.8 619.2L866.2 611.2M844.2 626.2L856.8 619.2M687.7 620L700.4 627M678.3 612.1L687.7 620M865.2 599.1L875.5 590.2M851.3 606.8L865.2 599.1M679.2 600L693.1 607.6M668.8 591.3L679.2 600M873.6 578.9L884.8 569.3M858.4 587.4L873.6 578.9M670.6 579.9L685.8 588.2M659.3 570.4L670.6 579.9M881.9 558.8L894.1 548.3M865.5 567.9L881.9 558.8M662.1 559.9L678.5 568.9M649.8 549.5L662.1 559.9M890.3 538.6L903.4 527.4M872.6 548.5L890.3 538.6M653.5 539.8L671.3 549.5M640.3 528.7L653.5 539.8M629.3 504.1L632 491.4M911.3 490.1L914.1 502.6M912.7 506.5L921.3 493.4M622 494.9L630.8 507.8M914.1 502.6L924.1 479.9M852.2 646.1L863.8 616.2M862.1 624.3L873.9 593.5M911.4 515.3L924.1 479.9M819.7 715.9L829 695M829 695L838.3 674M838.3 674L847.6 653.1M847.6 653.1L856.9 632.1M856.9 632.1L866.2 611.2M866.2 611.2L875.5 590.2M875.5 590.2L884.8 569.3M884.8 569.3L894.1 548.3M894.1 548.3L903.4 527.4M903.4 527.4L912.7 506.5M823.4 699.8L838.3 674M831.8 679.6L847.6 653.1M840.1 659.5L856.9 632.1M848.5 639.3L866.2 611.2M856.8 619.2L875.5 590.2M865.2 599.1L884.8 569.3M873.6 578.9L894.1 548.3M881.9 558.8L903.4 527.4M890.3 538.6L912.7 506.5M815.1 719.9L823.4 699.8M823.4 699.8L831.8 679.6M831.8 679.6L840.1 659.5M840.1 659.5L848.5 639.3M848.5 639.3L856.8 619.2M856.8 619.2L865.2 599.1M865.2 599.1L873.6 578.9M873.6 578.9L881.9 558.8M881.9 558.8L890.3 538.6M890.3 538.6L898.6 518.5M808.8 723.4L823.4 699.8M815.8 704L831.8 679.6M822.9 684.6L840.1 659.5M830 665.1L848.5 639.3M837.1 645.7L856.8 619.2M844.2 626.2L865.2 599.1M851.3 606.8L873.6 578.9M858.4 587.4L881.9 558.8M865.5 567.9L890.3 538.6M872.6 548.5L898.6 518.5M806.6 707.5L822.9 684.6M806.6 707.5L812.2 688.6M733.1 689L738.8 707.8M729.6 704.4L733.1 689M721.9 700.3L722.3 685.1M713.4 680.2L715 665.7M704.8 660.1L707.7 646.3M696.3 640.1L700.4 627M687.7 620L693.1 607.6M679.2 600L685.8 588.2M670.6 579.9L678.5 568.9M662.1 559.9L671.3 549.5M653.5 539.8L664 530.1M721.9 700.3L730.5 720.3M713.4 680.2L721.9 700.3M704.8 660.1L713.4 680.2M696.3 640.1L704.8 660.1M687.7 620L696.3 640.1M679.2 600L687.7 620M670.6 579.9L679.2 600M662.1 559.9L670.6 579.9M653.5 539.8L662.1 559.9M644.9 519.7L653.5 539.8M721.9 700.3L725.8 716.4M713.4 680.2L716.3 695.5M704.8 660.1L706.8 674.7M696.3 640.1L697.3 653.8M687.7 620L687.8 633M678.3 612.1L679.2 600M668.8 591.3L670.6 579.9M659.3 570.4L662.1 559.9M649.8 549.5L653.5 539.8M640.3 528.7L644.9 519.7M716.3 695.5L725.8 716.4M706.8 674.7L716.3 695.5M697.3 653.8L706.8 674.7M687.8 633L697.3 653.8M678.3 612.1L687.8 633M668.8 591.3L678.3 612.1M659.3 570.4L668.8 591.3M649.8 549.5L659.3 570.4M640.3 528.7L649.8 549.5M630.8 507.8L640.3 528.7M687.8 633L692.6 646.9M692.6 646.9L701.3 662.3M622 494.9L629.3 504.1M619.1 481.4L629.3 504.1M632 491.4L642.1 515M649.6 503.7L659.1 528.1M670.3 518.4L678.9 543.6M661.7 493.3L670.3 518.4M685.4 510L692.8 535.9M851 535.1L858 509.1M864.9 542.7L873.3 517.4M873.3 517.4L881.6 492.2M884.6 526.9L893.9 502.5M901.4 513.7L911.3 490.1M912.6 483.8L921.2 470.8M830.2 521.6L856.5 515.1M801.6 525.7L830.2 521.6M713.4 522.2L742.1 526M687 515.9L713.4 522.2M621.9 472.3L630.7 485.2M830.1 499L856.4 492.5M686.9 493.3L713.3 499.5M921.3 493.4L924 457.3M921.2 470.8L921.3 493.4M912.4 461.1L912.6 483.8M898.4 473.2L898.5 495.8M898.3 450.5L898.4 473.2M879.5 483.7L879.6 506.4M879.4 461.1L879.5 483.7M879.3 438.4L879.4 461.1M856.4 492.5L856.5 515.1M856.3 469.8L856.4 492.5M856.2 447.1L856.3 469.8M856.1 424.5L856.2 447.1M830.3 544.3L856.5 515.1M830.2 521.6L856.4 492.5M830.1 499L856.3 469.8M830.2 521.6L830.3 544.3M830.1 499L830.2 521.6M830 476.3L830.1 499M829.8 453.6L830 476.3M829.7 431L829.8 453.6M801.7 548.4L830.2 521.6M801.6 525.7L830.1 499M801.6 525.7L801.7 548.4M801.5 503L801.6 525.7M801.4 480.4L801.5 503M801.2 457.7L801.4 480.4M801.1 435.1L801.2 457.7M801 412.4L801.1 435.1M742.1 526L742.2 548.7M741.9 503.3L742.1 526M741.8 480.7L741.9 503.3M741.7 458L741.8 480.7M741.6 435.4L741.7 458M741.5 412.7L741.6 435.4M713.5 544.9L742.1 526M713.4 522.2L713.5 544.9M713.3 499.5L713.4 522.2M713.2 476.9L713.3 499.5M713.1 454.2L713.2 476.9M713 431.6L713.1 454.2M687.1 538.6L713.4 522.2M687 515.9L713.3 499.5M686.9 493.3L713.2 476.9M686.9 493.3L687 515.9M686.8 470.6L686.9 493.3M686.7 448L686.8 470.6M686.6 425.3L686.7 448M663.7 484.8L663.9 507.5M663.6 462.1L663.7 484.8M663.5 439.5L663.6 462.1M644.7 474.4L644.8 497.1M644.6 451.8L644.7 474.4M630.6 462.5L630.7 485.2M621.9 472.3L622 494.9M619.1 481.4L621.9 472.3" stroke="#6c6c6c" stroke-opacity="0.6"/>
<path d="M728.4 295.9L734.7 292.3M806.6 292L813 295.4M806.7 297.4L813 293.9M728.4 294.3L734.7 297.7M807.1 379L813.2 348.3M806.8 324.6L813 293.9M728.8 375.9L735 352.1M728.5 321.5L734.7 297.7M728.7 350.2L735.1 373.9M728.4 295.9L734.8 319.5M806.9 346.4L813.4 377M806.6 292L813.1 322.6" stroke="#787878" stroke-opacity="0.15"/>
<path d="M735.1 373.9L742.8 371M799.3 370.7L807 373.6M735 346.7L742.7 343.8M742.7 343.8L751.5 341.6M790.4 341.5L799.2 343.5M799.2 343.5L806.9 346.4M799.2 354.7L806.9 351.8M790.4 356.9L799.2 354.7M742.7 355L751.5 357M735 352.1L742.7 355M799.1 327.5L806.8 324.6M790.3 329.7L799.1 327.5M742.6 327.8L751.4 329.9M734.9 324.9L742.6 327.8M799.2 354.7L806.8 324.6M799.1 327.5L799.2 354.7M790.4 356.9L799.1 327.5M742.7 355L751.4 329.9M742.6 327.8L742.7 355M735 352.1L742.6 327.8M735 346.7L742.8 371M734.8 319.5L742.7 343.8M742.7 343.8L742.8 371M742.5 316.6L742.7 343.8M742.7 343.8L751.6 368.8M742.5 316.6L751.5 341.6M790.4 341.5L799.3 370.7M790.2 314.3L799.2 343.5M799.2 343.5L799.3 370.7M799 316.3L799.2 343.5M799 316.3L806.9 346.4" stroke="#787878" stroke-opacity="0.2"/>
<path d="M825.1 387L834.5 381.7M707.7 382.4L717.2 387.6M834 273L834.1 300.2M834.1 300.2L834.3 327.4M824.9 359.8L834.5 381.7M825.1 387L834.7 408.9M707.6 355.2L717.2 387.6M707.7 382.4L717.3 414.8M707.2 273.6L707.3 300.8M707.3 300.8L707.4 328M707.1 262.4L707.2 289.6M707.2 289.6L707.4 316.8M833.9 261.7L834.1 288.9M834.1 288.9L834.2 316.1M799.5 409.1L807.2 406.2M735.3 406.5L743 409.3M812.4 185.1L812.6 212.3M727.9 185.5L728 212.7M727.9 187.1L728 214.3M812.4 186.7L812.6 213.9" stroke="#787878" stroke-opacity="0.25"/>
<path d="M790.6 384.1L799.4 381.9M742.9 382.2L751.7 384.2M734.6 265.1L742.3 262.2M798.8 262L806.5 264.8M798.8 273.1L806.5 270.2M734.6 270.5L742.3 273.4M734.4 237.9L742.1 235M798.6 234.8L806.4 237.6M798.7 245.9L806.4 243M734.5 243.4L742.2 246.2M806.5 270.2L806.7 297.4M806.4 243L806.5 270.2M806.3 215.8L806.4 243M798.8 273.1L806.4 243M798.7 245.9L806.3 215.8M798.7 245.9L798.8 273.1M798.6 218.7L798.7 245.9M790.7 411.2L799.4 381.9M743 409.3L751.7 384.2M742.2 246.2L742.3 273.4M742.1 219L742.2 246.2M734.6 270.5L742.2 246.2M734.5 243.4L742.1 219M734.6 270.5L734.7 297.7M734.5 243.4L734.6 270.5M734.3 216.2L734.5 243.4M734.6 265.1L734.7 292.3M734.4 237.9L734.6 265.1M734.3 210.8L734.4 237.9M734.6 265.1L742.4 289.4M734.4 237.9L742.3 262.2M742.3 262.2L742.4 289.4M742.1 235L742.3 262.2M798.8 262L798.9 289.2M798.6 234.8L798.8 262M798.8 262L806.6 292M798.6 234.8L806.5 264.8M806.5 264.8L806.6 292M806.4 237.6L806.5 264.8M806.2 210.4L806.4 237.6" stroke="#787878" stroke-opacity="0.3"/>
<path d="M824.5 278.3L834 273M707.2 273.6L716.7 278.8M723.2 191.1L727.9 187.1M812.4 186.7L817.2 190.6" stroke="#787878" stroke-opacity="0.35"/>
<path d="M820.7 919.8L820.9 942.5M726.8 920.3L726.9 943M629.5 251L629.6 273.6M629.4 228.3L629.5 251M911.4 249.6L911.5 272.2M911.3 226.9L911.4 249.6M722.8 109.5L722.9 136.7M816.7 109L816.9 136.2" stroke="#787878" stroke-opacity="0.4"/>
<path d="M723.9 929.7L726.8 925.3M820.8 924.9L823.7 929.2M911.6 279.8L920.2 266.8M620.9 268.3L629.7 281.2M707 235.2L716.4 229.9M824.3 229.4L833.8 234.5M816.8 126.7L819.7 122.4M720 122.8L722.9 127.2M719.9 113.8L722.9 136.7M816.7 109L819.8 140.6" stroke="#787878" stroke-opacity="0.5"/>
<path d="M722.8 703.1L725.7 698.7M725.7 698.7L730.4 694.7M814.9 694.3L819.6 698.3M819.6 698.3L822.6 702.6M796.1 710.1L806.6 707.5M738.8 707.8L749.4 710.3M842.3 667.9L843.7 661.6M838.3 674L842.3 667.9M812.2 688.6L822.9 684.6M799.9 691.7L812.2 688.6M786.5 693.6L799.9 691.7M745.4 691.9L758.8 693.7M733.1 689L745.4 691.9M722.3 685.1L733.1 689M702.7 668.6L706.8 674.7M701.3 662.3L702.7 668.6M817.7 669.8L830 665.1M715 665.7L727.3 670.2M823.3 650.9L837.1 645.7M707.7 646.3L721.6 651.4M828.8 632.1L844.2 626.2M700.4 627L715.8 632.6M834.4 613.2L851.3 606.8M693.1 607.6L710.1 613.8M840 594.3L858.4 587.4M685.8 588.2L704.4 595M659.1 528.1L670.3 518.4M873.3 517.4L884.6 526.9M845.5 575.5L865.5 567.9M678.5 568.9L698.6 576.2M642.1 515L649.6 503.7M893.9 502.5L901.4 513.7M851.1 556.6L872.6 548.5M671.3 549.5L692.9 557.4M898.6 518.5L912.7 506.5M879.7 529.1L898.6 518.5M644.9 519.7L664 530.1M630.8 507.8L644.9 519.7M842.3 667.9L853.7 638.9M829 695L842.3 667.9M838.3 674L852.2 646.1M808.8 723.4L815.8 704M815.8 704L822.9 684.6M822.9 684.6L830 665.1M830 665.1L837.1 645.7M837.1 645.7L844.2 626.2M844.2 626.2L851.3 606.8M851.3 606.8L858.4 587.4M858.4 587.4L865.5 567.9M865.5 567.9L872.6 548.5M872.6 548.5L879.7 529.1M801.1 726.3L815.8 704M812.2 688.6L830 665.1M817.7 669.8L837.1 645.7M823.3 650.9L844.2 626.2M828.8 632.1L851.3 606.8M834.4 613.2L858.4 587.4M840 594.3L865.5 567.9M845.5 575.5L872.6 548.5M851.1 556.6L879.7 529.1M801.1 726.3L806.6 707.5M812.2 688.6L817.7 669.8M817.7 669.8L823.3 650.9M823.3 650.9L828.8 632.1M828.8 632.1L834.4 613.2M834.4 613.2L840 594.3M840 594.3L845.5 575.5M845.5 575.5L851.1 556.6M851.1 556.6L856.6 537.8M796.1 710.1L812.2 688.6M792.3 728.5L796.1 710.1M796.1 710.1L799.9 691.7M784.6 711.7L799.9 691.7M749.4 710.3L753.4 728.7M745.4 691.9L749.4 710.3M738.8 707.8L745.4 691.9M738.8 707.8L744.6 726.6M727.3 670.2L733.1 689M721.6 651.4L727.3 670.2M715.8 632.6L721.6 651.4M710.1 613.8L715.8 632.6M704.4 595L710.1 613.8M698.6 576.2L704.4 595M692.9 557.4L698.6 576.2M687.1 538.6L692.9 557.4M722.3 685.1L727.3 670.2M715 665.7L721.6 651.4M707.7 646.3L715.8 632.6M700.4 627L710.1 613.8M693.1 607.6L704.4 595M685.8 588.2L698.6 576.2M678.5 568.9L692.9 557.4M671.3 549.5L687.1 538.6M729.6 704.4L736.8 723.8M722.3 685.1L729.6 704.4M715 665.7L722.3 685.1M707.7 646.3L715 665.7M700.4 627L707.7 646.3M693.1 607.6L700.4 627M685.8 588.2L693.1 607.6M678.5 568.9L685.8 588.2M671.3 549.5L678.5 568.9M664 530.1L671.3 549.5M729.6 704.4L730.5 720.3M697.3 653.8L702.7 668.6M629.3 504.1L642.1 515M642.1 515L659.1 528.1M891.6 537.3L893.9 502.5M904 525.4L911.3 490.1M771.8 527.2L801.6 525.7M742.1 526L771.8 527.2M898.4 473.2L912.4 461.1M801.5 503L830.1 499M771.7 504.5L801.5 503M741.9 503.3L771.7 504.5M713.3 499.5L741.9 503.3M630.6 462.5L644.7 474.4M879.4 461.1L898.3 450.5M856.3 469.8L879.4 461.1M830 476.3L856.3 469.8M801.4 480.4L830 476.3M771.6 481.9L801.4 480.4M741.8 480.7L771.6 481.9M713.2 476.9L741.8 480.7M686.8 470.6L713.2 476.9M663.6 462.1L686.8 470.6M644.6 451.8L663.6 462.1M856.2 447.1L879.3 438.4M829.8 453.6L856.2 447.1M801.2 457.7L829.8 453.6M771.5 459.2L801.2 457.7M741.7 458L771.5 459.2M713.1 454.2L741.7 458M686.7 448L713.1 454.2M663.5 439.5L686.7 448M829.7 431L856.1 424.5M801.1 435.1L829.7 431M771.4 436.5L801.1 435.1M741.6 435.4L771.4 436.5M713 431.6L741.6 435.4M686.6 425.3L713 431.6M912.6 483.8L921.1 448.1M898.4 473.2L912.3 438.5M879.5 483.7L898.3 450.5M879.4 461.1L898.2 427.8M856.3 469.8L879.3 438.4M856.2 447.1L879.2 415.8M830 476.3L856.2 447.1M829.8 453.6L856.1 424.5M829.6 408.3L829.7 431M801.5 503L830 476.3M801.4 480.4L829.8 453.6M801.2 457.7L829.7 431M801.1 435.1L829.6 408.3M771.9 549.8L801.6 525.7M771.8 527.2L801.5 503M771.7 504.5L801.4 480.4M771.6 481.9L801.2 457.7M771.5 459.2L801.1 435.1M771.4 436.5L801 412.4M771.8 527.2L771.9 549.8M771.7 504.5L771.8 527.2M771.6 481.9L771.7 504.5M771.5 459.2L771.6 481.9M771.4 436.5L771.5 459.2M771.3 413.9L771.4 436.5M742.2 548.7L771.8 527.2M742.1 526L771.7 504.5M741.9 503.3L771.6 481.9M741.8 480.7L771.5 459.2M741.7 458L771.4 436.5M741.6 435.4L771.3 413.9M713.4 522.2L741.9 503.3M713.3 499.5L741.8 480.7M713.2 476.9L741.7 458M713.1 454.2L741.6 435.4M713 431.6L741.5 412.7M712.9 408.9L713 431.6M686.8 470.6L713.1 454.2M686.7 448L713 431.6M663.6 462.1L686.7 448M663.5 439.5L686.6 425.3M644.7 474.4L663.6 462.1M644.6 451.8L663.5 439.5M630.6 462.5L644.6 451.8M621.9 472.3L630.6 462.5" stroke="#787878" stroke-opacity="0.6"/>
<path d="M813.2 348.3L813.4 375.4M813 293.9L813.1 321.1M728.7 348.7L728.8 375.9M728.4 294.3L728.5 321.5M728.7 350.2L728.8 377.4M728.4 295.9L728.5 323.1M813.2 349.8L813.4 377M813 295.4L813.1 322.6" stroke="#848484" stroke-opacity="0.15"/>
<path d="M728.5 323.1L734.8 319.5M806.8 319.2L813.1 322.6M806.8 324.6L806.9 351.8M734.9 324.9L735 352.1M734.8 319.5L735 346.7M806.8 319.2L806.9 346.4" stroke="#848484" stroke-opacity="0.2"/>
<path d="M834.1 300.2L841.2 294.2M700.2 294.8L707.3 300.8M700.2 295.6L707.2 289.6M834.1 288.9L841.2 294.9M707.6 371.1L717.1 365.9M825 365.3L834.5 370.5M841 267L841.2 294.2M841.2 294.2L841.3 321.3M834 273L841.2 294.2M834.1 300.2L841.3 321.3M834.5 381.7L834.7 408.9M707.7 382.4L707.8 409.6M700.1 267.7L707.3 300.8M700.2 294.8L707.4 328M700.1 267.7L700.2 294.8M700.2 294.8L700.3 322M700.1 268.4L700.2 295.6M700.2 295.6L700.4 322.8M700.2 295.6L707.1 262.4M700.4 322.8L707.2 289.6M834.1 288.9L841 267.7M834.2 316.1L841.2 294.9M841 267.7L841.2 294.9M841.2 294.9L841.3 322.1M723.3 218.3L728 214.3M812.6 213.9L817.3 217.8M812.6 212.3L817.2 208.3M723.3 208.7L728 212.7M812.7 239.5L817.2 208.3M812.6 212.3L817.1 181.1M723.4 235.9L728 212.7M723.3 208.7L727.9 185.5M723.2 191.1L728 214.3M812.4 186.7L817.3 217.8" stroke="#848484" stroke-opacity="0.25"/>
<path d="M824.8 332.6L834.3 327.4M707.4 328L716.9 333.2M824.9 359.8L834.4 354.6M707.6 355.2L717.1 360.4M707.5 343.9L717 338.7M824.8 338.1L834.3 343.3M834.3 327.4L834.4 354.6M834.4 354.6L834.5 381.7M824.8 332.6L834.4 354.6M824.7 305.5L824.8 332.6M824.8 332.6L824.9 359.8M716.8 306L716.9 333.2M716.9 333.2L717.1 360.4M707.4 328L717.1 360.4M707.4 328L707.6 355.2M707.6 355.2L707.7 382.4M707.4 316.8L707.5 343.9M707.5 343.9L707.6 371.1M707.5 343.9L716.8 311.5M707.6 371.1L717 338.7M716.8 311.5L717 338.7M717 338.7L717.1 365.9M824.7 310.9L824.8 338.1M824.8 338.1L825 365.3M824.8 338.1L834.2 316.1M825 365.3L834.3 343.3M834.2 316.1L834.3 343.3M834.3 343.3L834.5 370.5M799.4 381.9L807.1 379M735.1 379.3L742.9 382.2M728.3 268.7L734.6 265.1M806.5 264.8L812.8 268.2M806.5 270.2L812.8 266.7M728.3 267.1L734.6 270.5M728.1 241.5L734.4 237.9M806.4 237.6L812.7 241.1M806.4 243L812.7 239.5M728.1 239.9L734.5 243.4M806.7 297.4L812.8 266.7M806.5 270.2L812.7 239.5M806.4 243L812.6 212.3M799.5 409.1L807.1 379M799.4 381.9L799.5 409.1M742.9 382.2L743 409.3M735.3 406.5L742.9 382.2M728.4 294.3L734.6 270.5M728.3 267.1L734.5 243.4M728.1 239.9L734.3 216.2M728.3 268.7L734.7 292.3M728.1 241.5L734.6 265.1M728 214.3L734.4 237.9M806.5 264.8L813 295.4M806.4 237.6L812.8 268.2M806.2 210.4L812.7 241.1" stroke="#848484" stroke-opacity="0.3"/>
<path d="M834 273L841 267M700.1 267.7L707.2 273.6M813.7 418.6L825.2 414.2M717.3 414.8L728.9 419" stroke="#848484" stroke-opacity="0.35"/>
<path d="M820.9 942.5L823.7 938.2M724 938.7L726.9 943M820.9 942.5L823.6 915.5M724 938.7L726.8 920.3M620.9 264L629.5 251M911.4 249.6L920.1 262.5M620.8 241.3L629.4 228.3M911.3 226.9L920 239.8M620.9 264L629.6 273.6M620.8 241.3L629.5 251M911.4 249.6L920.3 285.2M911.3 226.9L920.1 262.5M719.9 113.8L722.8 109.5M816.7 109L819.7 113.4" stroke="#848484" stroke-opacity="0.4"/>
<path d="M920.2 266.8L923 253.3M617.9 254.8L620.9 268.3M617.9 254.8L620.9 264M920 239.8L923.1 276" stroke="#848484" stroke-opacity="0.5"/>
<path d="M823.6 915.5L824.6 911M722.9 911.5L723.9 916M722.9 911.5L723.8 907M823.6 906.5L824.6 911M823.5 892.8L824.5 888.3M722.8 888.8L723.8 893.3M722.8 888.8L723.7 884.3M823.5 883.9L824.5 888.3M823.4 870.2L824.3 865.7M722.6 866.2L723.6 870.7M722.6 866.2L723.6 861.7M823.3 861.2L824.3 865.7M823.3 847.5L824.2 843M722.5 843.5L723.5 848M722.5 843.5L723.5 839M823.2 838.5L824.2 843M823.2 824.9L824.1 820.4M722.4 820.9L723.4 825.4M722.4 820.9L723.4 816.4M823.1 815.9L824.1 820.4M823.1 802.2L824 797.7M722.3 798.2L723.3 802.7M722.3 798.2L723.3 793.7M823 793.2L824 797.7M822.9 779.5L823.9 775M722.2 775.5L723.2 780M722.2 775.5L723.2 771M822.9 770.5L823.9 775M822.8 756.9L823.8 752.4M722.1 752.9L723.1 757.4M722.1 752.9L723 748.4M822.8 747.9L823.8 752.4M822.7 734.2L823.7 729.7M722 730.2L723 734.7M722 730.2L722.9 725.7M822.7 725.2L823.7 729.7M822.6 711.6L823.6 707.1M721.9 707.6L722.9 712M721.9 707.6L722.8 703.1M822.6 702.6L823.6 707.1M823.7 938.2L824.6 911M823.6 915.5L824.5 888.3M823.5 892.8L824.3 865.7M823.4 870.2L824.2 843M823.3 847.5L824.1 820.4M823.2 824.9L824 797.7M823.1 802.2L823.9 775M822.9 779.5L823.8 752.4M822.8 756.9L823.7 729.7M822.7 734.2L823.6 707.1M723 934.2L723.9 916M722.9 911.5L723.8 893.3M722.8 888.8L723.6 870.7M722.6 866.2L723.5 848M722.5 843.5L723.4 825.4M722.4 820.9L723.3 802.7M722.3 798.2L723.2 780M722.2 775.5L723.1 757.4M722.1 752.9L723 734.7M722 730.2L722.9 712M722.9 911.5L723.9 929.7M722.8 888.8L723.8 907M722.6 866.2L723.7 884.3M722.5 843.5L723.6 861.7M722.4 820.9L723.5 839M722.3 798.2L723.4 816.4M722.2 775.5L723.3 793.7M722.1 752.9L723.2 771M722 730.2L723 748.4M721.9 707.6L722.9 725.7M823.6 906.5L824.7 933.7M823.5 883.9L824.6 911M823.3 861.2L824.5 888.3M823.2 838.5L824.3 865.7M823.1 815.9L824.2 843M823 793.2L824.1 820.4M822.9 770.5L824 797.7M822.8 747.9L823.9 775M822.7 725.2L823.8 752.4M822.6 702.6L823.7 729.7M832.5 689.7L833.6 684.3M829 695L832.5 689.7M784.6 711.7L796.1 710.1M772.7 712.3L784.6 711.7M760.8 711.8L772.7 712.3M749.4 710.3L760.8 711.8M712.8 690.3L716.3 695.5M711.6 684.9L712.8 690.3M772.7 694.3L786.5 693.6M758.8 693.7L772.7 694.3M803.7 673.2L817.7 669.8M788.4 675.4L803.7 673.2M741.4 673.6L756.7 675.6M727.3 670.2L741.4 673.6M807.5 654.8L823.3 650.9M790.3 657.3L807.5 654.8M737.4 655.2L754.6 657.4M721.6 651.4L737.4 655.2M811.3 636.4L828.8 632.1M792.2 639.1L811.3 636.4M733.4 636.8L752.5 639.3M715.8 632.6L733.4 636.8M815.1 618L834.4 613.2M794.1 621L815.1 618M729.5 618.4L750.5 621.2M710.1 613.8L729.5 618.4M818.9 599.6L840 594.3M796 602.8L818.9 599.6M725.5 600L748.4 603.1M704.4 595L725.5 600M822.7 581.1L845.5 575.5M797.9 584.7L822.7 581.1M721.5 581.6L746.3 584.9M698.6 576.2L721.5 581.6M826.5 562.7L851.1 556.6M799.8 566.5L826.5 562.7M717.5 563.3L744.2 566.8M692.9 557.4L717.5 563.3M856.6 537.8L879.7 529.1M664 530.1L687.1 538.6M822.6 711.6L833.6 684.3M832.5 689.7L843.7 661.6M819.7 715.9L832.5 689.7M792.3 728.5L806.6 707.5M799.9 691.7L817.7 669.8M803.7 673.2L823.3 650.9M807.5 654.8L828.8 632.1M811.3 636.4L834.4 613.2M815.1 618L840 594.3M818.9 599.6L845.5 575.5M822.7 581.1L851.1 556.6M826.5 562.7L856.6 537.8M799.9 691.7L803.7 673.2M803.7 673.2L807.5 654.8M807.5 654.8L811.3 636.4M811.3 636.4L815.1 618M815.1 618L818.9 599.6M818.9 599.6L822.7 581.1M822.7 581.1L826.5 562.7M826.5 562.7L830.3 544.3M782.7 729.9L796.1 710.1M786.5 693.6L803.7 673.2M788.4 675.4L807.5 654.8M790.3 657.3L811.3 636.4M792.2 639.1L815.1 618M794.1 621L818.9 599.6M796 602.8L822.7 581.1M797.9 584.7L826.5 562.7M799.8 566.5L830.3 544.3M782.7 729.9L784.6 711.7M784.6 711.7L786.5 693.6M772.8 730.4L784.6 711.7M772.7 712.3L786.5 693.6M772.7 694.3L788.4 675.4M772.7 712.3L772.8 730.4M772.7 694.3L772.7 712.3M772.6 676.2L772.7 694.3M762.9 730L772.7 712.3M760.8 711.8L772.7 694.3M758.8 693.7L772.6 676.2M760.8 711.8L762.9 730M758.8 693.7L760.8 711.8M753.4 728.7L760.8 711.8M749.4 710.3L758.8 693.7M745.4 691.9L756.7 675.6M741.4 673.6L754.6 657.4M737.4 655.2L752.5 639.3M733.4 636.8L750.5 621.2M729.5 618.4L748.4 603.1M725.5 600L746.3 584.9M721.5 581.6L744.2 566.8M717.5 563.3L742.2 548.7M741.4 673.6L745.4 691.9M737.4 655.2L741.4 673.6M733.4 636.8L737.4 655.2M729.5 618.4L733.4 636.8M725.5 600L729.5 618.4M721.5 581.6L725.5 600M717.5 563.3L721.5 581.6M713.5 544.9L717.5 563.3M744.6 726.6L749.4 710.3M733.1 689L741.4 673.6M727.3 670.2L737.4 655.2M721.6 651.4L733.4 636.8M715.8 632.6L729.5 618.4M710.1 613.8L725.5 600M704.4 595L721.5 581.6M698.6 576.2L717.5 563.3M692.9 557.4L713.5 544.9M736.8 723.8L738.8 707.8M716.3 695.5L722.9 712M706.8 674.7L712.8 690.3M712.8 690.3L721.9 707.6M702.7 668.6L711.6 684.9M707.1 262.4L716.6 257.1M824.4 256.5L833.9 261.7M707 235.2L707.1 262.4M707.1 262.4L716.4 229.9M707.2 289.6L716.6 257.1M716.4 229.9L716.6 257.1M716.6 257.1L716.7 284.3M824.3 229.4L824.4 256.5M824.4 256.5L824.6 283.7M824.4 256.5L833.8 234.5M824.6 283.7L833.9 261.7M833.8 234.5L833.9 261.7M820 176.7L820.9 172.2M719.2 172.7L720.2 177.2M719.2 172.7L720.2 168.2M819.9 167.7L820.9 172.2M819.8 149.5L820.8 145M719.1 145.5L720.1 150M719.1 145.5L720.1 141M819.8 140.6L820.8 145M820.1 203.9L820.9 172.2M820 176.7L820.8 145M819.8 149.5L820.7 117.9M719.4 199.9L720.2 177.2M719.2 172.7L720.1 150M719.1 145.5L720 122.8M719.2 172.7L720.3 195.4M719.1 145.5L720.2 168.2M719 118.4L720.1 141M819.9 167.7L821.1 199.4M819.8 140.6L820.9 172.2M819.7 113.4L820.8 145" stroke="#848484" stroke-opacity="0.6"/>
<path d="M813.4 375.4L818 371.4M724.1 371.9L728.8 375.9M723.7 299.9L728.4 295.9M813 295.4L817.7 299.4M813 293.9L817.6 289.9M723.7 290.3L728.4 294.3M813.1 321.1L817.6 289.9M723.8 317.5L728.4 294.3M724 354.3L728.8 377.4M723.7 299.9L728.5 323.1M723.6 272.7L728.4 295.9M813.2 349.8L818.1 381M813 295.4L817.8 326.6M812.8 268.2L817.7 299.4" stroke="#909090" stroke-opacity="0.15"/>
<path d="M728.8 377.4L735.1 373.9M807 373.6L813.4 377M728.7 350.2L735 346.7M806.9 346.4L813.2 349.8M806.9 351.8L813.2 348.3M728.7 348.7L735 352.1M813.1 321.1L817.8 317.1M806.8 324.6L813.1 321.1M728.5 321.5L734.9 324.9M723.8 317.5L728.5 321.5M806.9 351.8L813.1 321.1M728.7 348.7L734.9 324.9M728.5 323.1L735 346.7M806.8 319.2L813.2 349.8" stroke="#909090" stroke-opacity="0.2"/>
<path d="M841.2 294.2L845.5 287.6M695.8 288.4L700.2 294.8M695.8 274.9L700.1 268.4M841 267.7L845.4 274.2M695.9 302.1L700.2 295.6M841.2 294.9L845.5 301.3M834.5 381.7L841.6 375.7M700.6 376.4L707.7 382.4M700.6 377.2L707.6 371.1M834.5 370.5L841.6 376.5M841 267L845.5 287.6M841.2 294.2L845.6 314.8M834.5 381.7L841.7 402.9M700.6 376.4L707.8 409.6M695.7 261.2L700.2 294.8M695.8 288.4L700.3 322M695.9 302.1L700.1 268.4M696 329.3L700.2 295.6M841.2 294.9L845.4 274.2M841.3 322.1L845.5 301.3M807.2 406.2L813.5 402.6M728.9 403.1L735.3 406.5M817.2 208.3L817.4 235.5M817.1 181.1L817.2 208.3M723.3 208.7L723.4 235.9M723.1 181.5L723.3 208.7M723.2 191.1L723.3 218.3M817.2 190.6L817.3 217.8" stroke="#909090" stroke-opacity="0.25"/>
<path d="M834.3 327.4L841.3 321.3M700.3 322L707.4 328M834.4 354.6L841.4 348.5M700.5 349.2L707.6 355.2M700.4 322.8L707.4 316.8M834.2 316.1L841.3 322.1M700.5 350L707.5 343.9M834.3 343.3L841.4 349.3M834.3 327.4L841.4 348.5M834.4 354.6L841.6 375.7M700.3 322L707.6 355.2M700.5 349.2L707.7 382.4M700.5 350L707.4 316.8M700.6 377.2L707.5 343.9M834.3 343.3L841.3 322.1M834.5 370.5L841.4 349.3M723.6 272.7L728.3 268.7M812.8 268.2L817.6 272.2M812.8 266.7L817.5 262.7M723.5 263.1L728.3 267.1M723.5 245.5L728.1 241.5M812.7 241.1L817.4 245M812.7 239.5L817.4 235.5M723.4 235.9L728.1 239.9M813 293.9L817.5 262.7M812.8 266.7L817.4 235.5M812.8 266.7L813 293.9M812.7 239.5L812.8 266.7M812.6 212.3L812.7 239.5M807.1 379L807.2 406.2M735.1 379.3L735.3 406.5M728.3 267.1L728.4 294.3M728.1 239.9L728.3 267.1M728 212.7L728.1 239.9M723.7 290.3L728.3 267.1M723.5 263.1L728.1 239.9M723.5 245.5L728.3 268.7M723.3 218.3L728.1 241.5M728.3 268.7L728.4 295.9M728.1 241.5L728.3 268.7M728 214.3L728.1 241.5M812.8 268.2L813 295.4M812.7 241.1L812.8 268.2M812.6 213.9L812.7 241.1M812.7 241.1L817.6 272.2M812.6 213.9L817.4 245" stroke="#909090" stroke-opacity="0.3"/>
<path d="M825.2 414.2L834.7 408.9M707.8 409.6L717.3 414.8" stroke="#909090" stroke-opacity="0.35"/>
<path d="M620.8 241.3L620.9 264M920 239.8L920.1 262.5" stroke="#909090" stroke-opacity="0.4"/>
<path d="M700 241.2L707 235.2M833.8 234.5L840.9 240.5" stroke="#909090" stroke-opacity="0.5"/>
<path d="M772.6 676.2L788.4 675.4M756.7 675.6L772.6 676.2M772.5 658.2L790.3 657.3M754.6 657.4L772.5 658.2M772.4 640.1L792.2 639.1M752.5 639.3L772.4 640.1M772.3 622.1L794.1 621M750.5 621.2L772.3 622.1M772.2 604L796 602.8M748.4 603.1L772.2 604M772.1 585.9L797.9 584.7M746.3 584.9L772.1 585.9M772 567.9L799.8 566.5M744.2 566.8L772 567.9M830.3 544.3L856.6 537.8M687.1 538.6L713.5 544.9M786.5 693.6L788.4 675.4M788.4 675.4L790.3 657.3M790.3 657.3L792.2 639.1M792.2 639.1L794.1 621M794.1 621L796 602.8M796 602.8L797.9 584.7M797.9 584.7L799.8 566.5M799.8 566.5L801.7 548.4M772.6 676.2L790.3 657.3M772.5 658.2L792.2 639.1M772.4 640.1L794.1 621M772.3 622.1L796 602.8M772.2 604L797.9 584.7M772.1 585.9L799.8 566.5M772 567.9L801.7 548.4M772.5 658.2L772.6 676.2M772.4 640.1L772.5 658.2M772.3 622.1L772.4 640.1M772.2 604L772.3 622.1M772.1 585.9L772.2 604M772 567.9L772.1 585.9M771.9 549.8L772 567.9M756.7 675.6L772.5 658.2M754.6 657.4L772.4 640.1M752.5 639.3L772.3 622.1M750.5 621.2L772.2 604M748.4 603.1L772.1 585.9M746.3 584.9L772 567.9M744.2 566.8L771.9 549.8M756.7 675.6L758.8 693.7M754.6 657.4L756.7 675.6M752.5 639.3L754.6 657.4M750.5 621.2L752.5 639.3M748.4 603.1L750.5 621.2M746.3 584.9L748.4 603.1M744.2 566.8L746.3 584.9M742.2 548.7L744.2 566.8M700.1 268.4L707.1 262.4M833.9 261.7L841 267.7M700.1 268.4L707 235.2M833.9 261.7L840.9 240.5" stroke="#909090" stroke-opacity="0.6"/>
<path d="M817.6 289.9L817.8 317.1M723.7 290.3L723.8 317.5M724 354.3L724.1 381.5M723.7 299.9L723.9 327.1M723.6 272.7L723.7 299.9M818 353.8L818.1 381M817.7 299.4L817.8 326.6M817.6 272.2L817.7 299.4" stroke="#9c9c9c" stroke-opacity="0.15"/>
<path d="M724.1 381.5L728.8 377.4M813.4 377L818.1 381M724 354.3L728.7 350.2M813.2 349.8L818 353.8M813.2 348.3L817.9 344.2M724 344.7L728.7 348.7M723.9 327.1L728.5 323.1M813.1 322.6L817.8 326.6M813.4 375.4L817.9 344.2M813.2 348.3L817.8 317.1M813.1 321.1L813.2 348.3M728.5 321.5L728.7 348.7M724.1 371.9L728.7 348.7M724 344.7L728.5 321.5M723.9 327.1L728.7 350.2M728.5 323.1L728.7 350.2M813.1 322.6L813.2 349.8M813.1 322.6L818 353.8" stroke="#9c9c9c" stroke-opacity="0.2"/>
<path d="M845.3 260.4L845.5 287.6M845.5 287.6L845.6 314.8M841.6 375.7L841.7 402.9M700.6 376.4L700.8 403.6M695.7 261.2L695.8 288.4M695.8 288.4L696 315.6M695.8 274.9L695.9 302.1M845.4 274.2L845.5 301.3M720.5 222.6L723.3 218.3M817.3 217.8L820.2 222.1M817.2 208.3L820.1 203.9M720.4 204.4L723.3 208.7M720.3 195.4L723.2 191.1M817.2 190.6L820.1 194.9M817.4 235.5L820.1 203.9M817.2 208.3L820 176.7M720.5 231.6L723.3 208.7M720.4 204.4L723.1 181.5M720.3 195.4L723.3 218.3M817.2 190.6L820.2 222.1" stroke="#9c9c9c" stroke-opacity="0.25"/>
<path d="M841.3 321.3L841.4 348.5M841.4 348.5L841.6 375.7M700.3 322L700.5 349.2M700.5 349.2L700.6 376.4M700.4 322.8L700.5 350M700.5 350L700.6 377.2M841.3 322.1L841.4 349.3M841.4 349.3L841.6 376.5M807.1 379L813.4 375.4M728.8 375.9L735.1 379.3M817.5 262.7L817.6 289.9M817.4 235.5L817.5 262.7M813.4 375.4L813.5 402.6M807.2 406.2L813.4 375.4M728.9 403.1L735.1 379.3M728.8 375.9L728.9 403.1M723.5 263.1L723.7 290.3M723.4 235.9L723.5 263.1M723.5 245.5L723.6 272.7M723.3 218.3L723.5 245.5M817.4 245L817.6 272.2M817.3 217.8L817.4 245" stroke="#9c9c9c" stroke-opacity="0.3"/>
<path d="M841 267L845.3 260.4M695.7 261.2L700.1 267.7" stroke="#9c9c9c" stroke-opacity="0.35"/>
<path d="M617.9 254.8L620.8 241.3M920 239.8L923 253.3" stroke="#9c9c9c" stroke-opacity="0.4"/>
<path d="M801.7 548.4L830.3 544.3M771.9 549.8L801.7 548.4M742.2 548.7L771.9 549.8M713.5 544.9L742.2 548.7M700 241.2L700.1 268.4M840.9 240.5L841 267.7" stroke="#9c9c9c" stroke-opacity="0.6"/>
<path d="M818 371.4L820.9 367.1M721.2 367.6L724.1 371.9M817.8 317.1L820.6 312.7M720.9 313.2L723.8 317.5M720.9 304.2L723.7 299.9M817.7 299.4L820.6 303.7M817.6 289.9L820.5 285.5M720.8 286L723.7 290.3M817.8 317.1L820.5 285.5M720.9 313.2L723.7 290.3M721.1 358.6L724.1 381.5M720.9 304.2L723.9 327.1M720.7 277L723.7 299.9M818 353.8L821 385.3M817.7 299.4L820.7 330.9M817.6 272.2L820.6 303.7" stroke="#a8a8a8" stroke-opacity="0.15"/>
<path d="M817.9 344.2L818 371.4M817.8 317.1L817.9 344.2M724 344.7L724.1 371.9M723.8 317.5L724 344.7M723.9 327.1L724 354.3M817.8 326.6L818 353.8" stroke="#a8a8a8" stroke-opacity="0.2"/>
<path d="M845.5 287.6L846.9 280.9M694.3 281.6L695.8 288.4M694.3 281.6L695.8 274.9M845.4 274.2L846.9 280.9M845.6 314.8L847 308.1M694.5 308.8L696 315.6M694.5 308.8L695.9 302.1M845.5 301.3L847 308.1M696.3 383.7L700.6 377.2M841.6 376.5L845.9 382.9M845.3 260.4L846.9 280.9M845.5 287.6L847 308.1M694.2 254.4L695.8 288.4M694.3 281.6L696 315.6M694.3 281.6L695.6 247.7M694.5 308.8L695.8 274.9M845.4 274.2L846.8 253.7M845.5 301.3L846.9 280.9M813.5 402.6L818.2 398.6M724.2 399.1L728.9 403.1M820.1 203.9L820.2 231.1M820 176.7L820.1 203.9M720.4 204.4L720.5 231.6M720.2 177.2L720.4 204.4M720.3 195.4L720.5 222.6M820.1 194.9L820.2 222.1" stroke="#a8a8a8" stroke-opacity="0.25"/>
<path d="M841.3 321.3L845.6 314.8M696 315.6L700.3 322M841.4 348.5L845.7 342M696.1 342.8L700.5 349.2M696 329.3L700.4 322.8M841.3 322.1L845.7 328.5M841.6 375.7L845.9 369.2M696.2 370L700.6 376.4M696.2 356.5L700.5 350M841.4 349.3L845.8 355.7M845.6 314.8L845.7 342M845.7 342L845.9 369.2M841.3 321.3L845.7 342M841.4 348.5L845.9 369.2M696 315.6L700.5 349.2M696.1 342.8L700.6 376.4M696 315.6L696.1 342.8M696.1 342.8L696.2 370M695.9 302.1L696 329.3M696 329.3L696.2 356.5M696.2 356.5L696.3 383.7M696.2 356.5L700.4 322.8M696.3 383.7L700.5 350M841.4 349.3L845.7 328.5M841.6 376.5L845.8 355.7M845.5 301.3L845.7 328.5M845.7 328.5L845.8 355.7M845.8 355.7L845.9 382.9M720.7 277L723.6 272.7M817.6 272.2L820.5 276.5M817.5 262.7L820.4 258.3M720.6 258.8L723.5 263.1M720.6 249.8L723.5 245.5M817.4 245L820.3 249.3M817.4 235.5L820.2 231.1M720.5 231.6L723.4 235.9M820.4 258.3L820.5 285.5M820.2 231.1L820.4 258.3M817.6 289.9L820.4 258.3M817.5 262.7L820.2 231.1M813.5 402.6L818 371.4M724.2 399.1L728.8 375.9M720.8 286L723.5 263.1M720.6 258.8L723.4 235.9M720.6 258.8L720.8 286M720.5 231.6L720.6 258.8M720.6 249.8L720.7 277M720.5 222.6L720.6 249.8M720.6 249.8L723.6 272.7M720.5 222.6L723.5 245.5M817.4 245L820.5 276.5M817.3 217.8L820.3 249.3M820.3 249.3L820.5 276.5M820.2 222.1L820.3 249.3" stroke="#a8a8a8" stroke-opacity="0.3"/>
<path d="M834.7 408.9L841.7 402.9M700.8 403.6L707.8 409.6M695.6 247.7L695.8 274.9M845.3 247L845.4 274.2" stroke="#a8a8a8" stroke-opacity="0.35"/>
<path d="M823.7 938.2L824.7 933.7M723 934.2L724 938.7M723 934.2L723.9 929.7M823.7 929.2L824.7 933.7M819.7 122.4L820.7 117.9M719 118.4L720 122.8M719 118.4L719.9 113.8M819.7 113.4L820.7 117.9" stroke="#a8a8a8" stroke-opacity="0.4"/>
<path d="M695.6 247.7L700 241.2M840.9 240.5L845.3 247" stroke="#a8a8a8" stroke-opacity="0.5"/>
<path d="M695.8 274.9L700 241.2M841 267.7L845.3 247" stroke="#a8a8a8" stroke-opacity="0.6"/>
<path d="M820.9 367.1L821 394.3M820.5 285.5L820.6 312.7M721.2 367.6L721.3 394.8M720.8 286L720.9 313.2M721.1 358.6L721.3 385.8M720.9 304.2L721 331.4M720.7 277L720.9 304.2M820.9 358.1L821 385.3M820.6 303.7L820.7 330.9M820.5 276.5L820.6 303.7" stroke="#b4b4b4" stroke-opacity="0.15"/>
<path d="M721.3 385.8L724.1 381.5M818.1 381L821 385.3M721.1 358.6L724 354.3M818 353.8L820.9 358.1M817.9 344.2L820.8 339.9M721 340.4L724 344.7M721 331.4L723.9 327.1M817.8 326.6L820.7 330.9M818.2 398.6L820.9 367.1M818 371.4L820.8 339.9M817.9 344.2L820.6 312.7M721.3 394.8L724.1 371.9M721.2 367.6L724 344.7M721 340.4L723.8 317.5M721 331.4L724 354.3M817.8 326.6L820.9 358.1" stroke="#b4b4b4" stroke-opacity="0.2"/>
<path d="M845.9 369.2L846 396.4M841.6 375.7L846 396.4M696.2 370L700.8 403.6M696.2 370L696.4 397.2" stroke="#b4b4b4" stroke-opacity="0.25"/>
<path d="M845.7 342L847.2 335.3M694.6 336L696.1 342.8M694.6 336L696 329.3M845.7 328.5L847.2 335.3M845.9 369.2L847.3 362.5M694.7 363.2L696.2 370M694.7 363.2L696.2 356.5M845.8 355.7L847.3 362.5M845.6 314.8L847.2 335.3M845.7 342L847.3 362.5M845.9 369.2L847.4 389.7M694.5 308.8L696.1 342.8M694.6 336L696.2 370M694.7 363.2L696.4 397.2M694.6 336L695.9 302.1M694.7 363.2L696 329.3M694.9 390.4L696.2 356.5M845.7 328.5L847 308.1M845.8 355.7L847.2 335.3M845.9 382.9L847.3 362.5M818 371.4L818.2 398.6M724.1 371.9L724.2 399.1" stroke="#b4b4b4" stroke-opacity="0.3"/>
<path d="M845.3 260.4L846.8 253.7M694.2 254.4L695.7 261.2" stroke="#b4b4b4" stroke-opacity="0.35"/>
<path d="M820.8 339.9L820.9 367.1M820.6 312.7L820.8 339.9M721 340.4L721.2 367.6M720.9 313.2L721 340.4M721 331.4L721.1 358.6M820.7 330.9L820.9 358.1" stroke="#c0c0c0" stroke-opacity="0.2"/>
<path d="M694.9 390.4L696.3 383.7M845.9 382.9L847.4 389.7" stroke="#c0c0c0" stroke-opacity="0.25"/>
<path d="M846.8 253.7L846.9 280.9M846.9 280.9L847 308.1M694.2 254.4L694.3 281.6M694.3 281.6L694.5 308.8M821.1 199.4L821.2 226.6M719.4 199.9L719.5 227.1" stroke="#c0c0c0" stroke-opacity="0.3"/>
<path d="M821.5 281L821.6 308.2M719.8 281.5L719.9 308.7" stroke="#cccccc" stroke-opacity="0.2"/>
<path d="M818.2 398.6L821 394.3M721.3 394.8L724.2 399.1" stroke="#cccccc" stroke-opacity="0.25"/>
<path d="M719.5 227.1L720.5 222.6M820.2 222.1L821.2 226.6M820.1 203.9L821.1 199.4M719.4 199.9L720.4 204.4M719.4 199.9L720.3 195.4M820.1 194.9L821.1 199.4M820.2 231.1L821.1 199.4M719.5 227.1L720.4 204.4M719.4 199.9L720.5 222.6M820.1 194.9L821.2 226.6" stroke="#cccccc" stroke-opacity="0.3"/>
<path d="M841.7 402.9L846 396.4M696.4 397.2L700.8 403.6" stroke="#cccccc" stroke-opacity="0.35"/>
<path d="M694.2 254.4L695.6 247.7M845.3 247L846.8 253.7" stroke="#cccccc" stroke-opacity="0.5"/>
<path d="M820.9 367.1L821.9 362.6M720.2 363.1L721.2 367.6M820.6 312.7L821.6 308.2M719.9 308.7L720.9 313.2M719.9 308.7L720.9 304.2M820.6 303.7L821.6 308.2M820.5 285.5L821.5 281M719.8 281.5L720.8 286M821.9 362.6L822 389.8M821 394.3L821.9 362.6M820.6 312.7L821.5 281M720.3 390.3L721.2 367.6M719.9 308.7L720.8 286M720.2 363.1L720.3 390.3M720.2 363.1L721.3 385.8M719.8 281.5L720.9 304.2M820.9 358.1L822 389.8M820.5 276.5L821.6 308.2" stroke="#d8d8d8" stroke-opacity="0.2"/>
<path d="M821.3 253.8L821.5 281M821.2 226.6L821.3 253.8M719.6 254.3L719.8 281.5M719.5 227.1L719.6 254.3" stroke="#d8d8d8" stroke-opacity="0.4"/>
<path d="M821.7 335.4L821.9 362.6M821.6 308.2L821.7 335.4M720 335.9L720.2 363.1M719.9 308.7L720 335.9" stroke="#e4e4e4" stroke-opacity="0.25"/>
<path d="M846 396.4L847.4 389.7M694.9 390.4L696.4 397.2" stroke="#e4e4e4" stroke-opacity="0.35"/>
<path d="M847 308.1L847.2 335.3M847.2 335.3L847.3 362.5M847.3 362.5L847.4 389.7M694.5 308.8L694.6 336M694.6 336L694.7 363.2M694.7 363.2L694.9 390.4M719.8 281.5L720.7 277M820.5 276.5L821.5 281M820.4 258.3L821.3 253.8M719.6 254.3L720.6 258.8M719.6 254.3L720.6 249.8M820.3 249.3L821.3 253.8M820.2 231.1L821.2 226.6M719.5 227.1L720.5 231.6M820.5 285.5L821.3 253.8M820.4 258.3L821.2 226.6M719.8 281.5L720.6 258.8M719.6 254.3L720.5 231.6M719.6 254.3L720.7 277M719.5 227.1L720.6 249.8M820.3 249.3L821.5 281M820.2 222.1L821.3 253.8" stroke="#e4e4e4" stroke-opacity="0.4"/>
<path d="M821 394.3L822 389.8M720.3 390.3L721.3 394.8M720.3 390.3L721.3 385.8M821 385.3L822 389.8M720.2 363.1L721.1 358.6M820.9 358.1L821.9 362.6M820.8 339.9L821.7 335.4M720 335.9L721 340.4M720 335.9L721 331.4M820.7 330.9L821.7 335.4M820.9 367.1L821.7 335.4M820.8 339.9L821.6 308.2M720.2 363.1L721 340.4M720 335.9L720.9 313.2M720 335.9L721.1 358.6M719.9 308.7L721 331.4M820.7 330.9L821.9 362.6M820.6 303.7L821.7 335.4" stroke="#f0f0f0" stroke-opacity="0.25"/>
</g>
</svg>
<svg style="left:615px;top:865px" width="60" height="60" viewBox="615 865 60 60"><path d="M633.8 905V892" stroke="#8ee88e" stroke-width="1.2"/><rect x="632.6" y="889.6" width="2.6" height="2.6" fill="#19d219"/><path d="M635 905.600L648.500 908.600" stroke="#f46060" stroke-width="1"/><path d="M647.500 907.300L651.500 909.300L647.200 910.300z" fill="#e01010"/><path d="M633 906.500L628 912.500" stroke="#5050f0" stroke-width="1.100"/><rect x="626.300" y="911.700" width="2.600" height="2.600" fill="#1010b0"/><g font-family="Liberation Sans, sans-serif" font-weight="bold" font-style="italic" font-size="14px"><text x="637.300" y="885.800" fill="#12e012">Y</text><text x="651.500" y="903" fill="#f00808">X</text><text x="630.300" y="907.600" fill="#1414f0">Z</text></g></svg>
<svg style="left:604px;top:50px" width="16" height="16" viewBox="0 0 16 16"><rect x="1.450" y="2.950" width="12.600" height="10" rx="1" stroke="#000" fill="none" stroke-width="1.500"/><path d="M7.150 4.300h1.200v1.100H7.150zM7.150 10.600h1.200v1.100H7.150zM2.800 7.300h1v1.300h-1zM11.800 7.300h1v1.300h-1z" fill="#000"/></svg>
<svg style="left:628px;top:50px" width="16" height="16" viewBox="0 0 16 16"><path d="M2 1.300V14H14.600" fill="none" stroke-width="1.400" stroke="#7a7a7a"/><text x="3.800" y="10.900" font-size="10.500" font-family="DejaVu Sans, sans-serif" textLength="10.800" lengthAdjust="spacingAndGlyphs" fill="#000" stroke="#000" stroke-width="0.250">XY</text></svg>
<svg style="left:652px;top:50px" width="16" height="16" viewBox="0 0 16 16"><path d="M2 1.300V14H14.600" fill="none" stroke-width="1.400" stroke="#7a7a7a"/><text x="3.800" y="10.900" font-size="10.500" font-family="DejaVu Sans, sans-serif" textLength="10.800" lengthAdjust="spacingAndGlyphs" fill="#000" stroke="#000" stroke-width="0.250">YZ</text></svg>
<svg style="left:676px;top:50px" width="16" height="16" viewBox="0 0 16 16"><path d="M2 1.300V14H14.600" fill="none" stroke-width="1.400" stroke="#7a7a7a"/><text x="3.800" y="10.900" font-size="10.500" font-family="DejaVu Sans, sans-serif" textLength="10.800" lengthAdjust="spacingAndGlyphs" fill="#000" stroke="#000" stroke-width="0.250">XZ</text></svg>
<svg style="left:700px;top:50px" width="16" height="16" viewBox="0 0 16 16"><path d="M8.200 3.700A4.600 4.600 0 0 1 8.200 12.900" stroke="#000" fill="none" stroke-width="1.500"/><path d="M8.200 12.900A4.600 4.600 0 0 1 8.200 3.700" stroke="#000" fill="none" stroke-width="1.500" stroke-dasharray="1.700 1.700" stroke-dashoffset="0.800"/><path d="M9.300 1.300L6.300 3.700L9.300 6.100z" fill="#000"/></svg>
<svg style="left:724px;top:50px" width="16" height="16" viewBox="0 0 16 16"><g transform="translate(16.400 0) scale(-1 1)"><path d="M8.200 3.700A4.600 4.600 0 0 1 8.200 12.900" stroke="#000" fill="none" stroke-width="1.500"/><path d="M8.200 12.900A4.600 4.600 0 0 1 8.200 3.700" stroke="#000" fill="none" stroke-width="1.500" stroke-dasharray="1.700 1.700" stroke-dashoffset="0.800"/><path d="M9.300 1.300L6.300 3.700L9.300 6.100z" fill="#000"/></g></svg>
<svg style="left:748px;top:50px" width="16" height="16" viewBox="0 0 16 16"><path d="M2.600 5.600L5.600 2.500H13.800v8L10.800 13.500H2.600zM2.600 5.600h8.200V13.500M10.800 5.600L13.800 2.500" stroke="#000" fill="none" stroke-width="1.400" stroke-linejoin="round"/><path d="M5.300 8h3v3h-3zM2.600 13.500l2.700-2.500M10.800 5.600L8.300 8M13.800 10.500L8.300 11" stroke="#000" fill="none" stroke-width="0.700"/></svg>
<svg style="position:absolute;left:772px;top:50px" width="16" height="16" viewBox="0 0 24 24"><path fill="#000" d="M8.8 12a3.2 3.2 0 1 0 6.4 0a3.2 3.2 0 1 0-6.4 0z M9 2L7.17 4H4c-1.1 0-2 .9-2 2v12c0 1.1.9 2 2 2h16c1.1 0 2-.9 2-2V6c0-1.1-.9-2-2-2h-3.17L15 2H9zm3 15c-2.76 0-5-2.24-5-5s2.24-5 5-5 5 2.24 5 5-2.24 5-5 5z" /></svg>
<svg style="left:801px;top:52px" width="12" height="12" viewBox="0 0 12 12"><g fill="none" stroke="#000" stroke-width="0.9" stroke-linejoin="round"><path d="M2.400 .900L11.300 2.600V9.500L5.500 11.100L.700 7.400Z"/><path d="M5.800 6.100L2.400 .900M5.800 6.100L11.300 2.600M5.800 6.100L11.300 9.500M5.800 6.100L5.500 11.100M5.800 6.100L.700 7.400"/></g></svg>
<svg style="left:823px;top:50px" width="16" height="16" viewBox="0 0 16 16"><circle cx="8" cy="8" r="5.6" stroke="#000" fill="none" stroke-width="1.3"/><path d="M8 2.4v5.6l-3 4.4M8 8h5.6" stroke="#000" fill="none" stroke-width="1.2"/></svg>
<svg style="left:847px;top:50px" width="16" height="16" viewBox="0 0 16 16"><path d="M1.8 4.6h9.4v9.6H1.8zM1.8 4.6L4.6 1.6h9.6v9.6l-3 3M11.2 4.6l3-3" stroke="#000" fill="none" stroke-width="1.3" stroke-linejoin="round"/></svg>
<svg style="left:871px;top:50px" width="16" height="16" viewBox="0 0 16 16"><ellipse cx="8" cy="4.2" rx="5.3" ry="2.2" stroke="#000" fill="none" stroke-width="1.3"/><path d="M2.7 4.2v7.6a5.3 2.2 0 0 0 10.6 0V4.2" stroke="#000" fill="none" stroke-width="1.3"/></svg>
<svg style="left:895px;top:50px" width="16" height="16" viewBox="0 0 16 16"><path d="M8 1.6C7 4 2.4 9.5 2.4 11.6c0 1.4 2.5 2.4 5.6 2.4s5.6-1 5.6-2.4C13.600 9.500 9 4 8 1.600z" stroke="#000" fill="none" stroke-width="1.4" stroke-linejoin="round"/></svg>
<svg style="left:919px;top:50px" width="16" height="16" viewBox="0 0 16 16"><ellipse cx="8" cy="8.2" rx="6" ry="4.6" stroke="#000" fill="none" stroke-width="1.3"/><path d="M5.6 7.6a2.6 1.6 0 0 0 4.800 0" stroke="#000" fill="none" stroke-width="1.2"/></svg>
<div style="left:940px;top:70px;width:221px;height:928px;background:#fafafa"></div>
<svg style="left:952px;top:76px" width="8" height="10" viewBox="0 0 8 10"><path d="M2 1.4L5.8 5 2 8.600" fill="none" stroke="#000" stroke-width="1.3"/></svg>
<div style="left:944px;top:93.5px;width:23px;height:23px;background:#dcdcdc;border:1px solid #c3c3c3;border-radius:3px"></div><svg style="left:948px;top:96.5px" width="16" height="16" viewBox="0 0 16 16"><g transform="translate(2 2)" fill="none" stroke="#000" stroke-width="0.9" stroke-linejoin="round"><path d="M2.400 .900L11.300 2.600V9.500L5.500 11.100L.700 7.400Z"/><path d="M5.800 6.100L2.400 .900M5.800 6.100L11.300 2.600M5.800 6.100L11.300 9.500M5.800 6.100L5.500 11.100M5.800 6.100L.700 7.400"/></g></svg>
<div class="t b" style="left:973px;top:97px">Geometry</div>
<svg style="left:1138px;top:102px" width="8" height="5" viewBox="0 0 8 5"><path d="M0 4.500h8L4 0.500z" fill="#4a4a4a"/></svg>
<div class="t" style="left:973px;top:125px">Color</div>
<div style="left:1025px;top:121px;width:24px;height:23px;background:linear-gradient(#f6f6f6,#e6e6e6);border:1px solid #b4b4b4;border-radius:3px"></div>
<div class="t" style="left:973px;top:153px">Style</div>
<div style="left:1025px;top:149px;width:129px;height:23px;background:linear-gradient(#fdfdfd,#eaeaea);border:1px solid #b4b4b4;border-radius:3px"><div class="t" style="left:4px;top:3px">edges</div><svg style="right:7px;top:9px" width="8" height="4" viewBox="0 0 8 4"><path d="M0 0h8L4 4z" fill="#3c3c3c"/></svg></div>
<div class="t" style="left:973px;top:181px">Opacity</div>
<div style="left:1025px;top:178px;width:129px;height:21px;background:#fff;border:1px solid #b4b4b4;border-radius:3px"><div class="t" style="left:4px;top:2px">0.90</div><div style="right:0;top:0;width:14px;height:19px;border-left:1px solid #b4b4b4;background:linear-gradient(#fafafa,#ebebeb);border-radius:0 2px 2px 0"></div><svg style="right:4px;top:4px" width="7" height="12" viewBox="0 0 7 12"><path d="M0 4.500h7L3.500 1z M0 7.500h7L3.500 11z" fill="#4a4a4a"/></svg></div>
<div style="left:973px;top:209px;width:13px;height:13px;background:#fff;border:1px solid #b8b8b8;border-radius:2px"></div>
<div class="t" style="left:992px;top:207px;">Show normals</div>
<div class="t dis" style="left:940px;width:80px;text-align:right;top:235px">Scale</div>
<div style="left:1025px;top:231px;width:129px;height:23px;background:#f0f0f0;border:1px solid #cdcdcd;border-radius:3px"><div class="t dis" style="left:2px;top:3px">0.1</div></div>
<div class="t dis" style="left:940px;width:80px;text-align:right;top:263px">Color</div>
<div style="left:1025px;top:259px;width:24px;height:23px;background:linear-gradient(#7676fb,#5c5cea);border:1px solid #4a4ad8;border-radius:3px"></div>
<div class="t dis" style="left:940px;width:80px;text-align:right;top:291px">Count</div>
<div style="left:1025px;top:287px;width:129px;height:23px;background:#f0f0f0;border:1px solid #cdcdcd;border-radius:3px"><div class="t dis" style="left:2px;top:3px">1000</div></div>
<svg style="left:948px;top:333px" width="16" height="16" viewBox="0 0 24 24"><path d="M20 2H4c-1.1 0-2 .9-2 2v16c0 1.1.9 2 2 2h16c1.1 0 2-.9 2-2V4c0-1.1-.9-2-2-2zM8 20H4v-4h4v4zm0-6H4v-4h4v4zm0-6H4V4h4v4zm6 12h-4v-4h4v4zm0-6h-4v-4h4v4zm0-6h-4V4h4v4zm6 12h-4v-4h4v4zm0-6h-4v-4h4v4zm0-6h-4V4h4v4z"/></svg>
<div class="t b" style="left:973px;top:334px">Background mesh</div>
<svg style="left:1138px;top:339px" width="8" height="5" viewBox="0 0 8 5"><path d="M0 4.500h8L4 0.500z" fill="#4a4a4a"/></svg>
<div class="t dis" style="left:973px;top:362px">Color</div>
<div style="left:1025px;top:358px;width:24px;height:23px;background:linear-gradient(#a6d2fb,#8cc2f5);border:1px solid #62a6e8;border-radius:3px"></div>
<div class="t dis" style="left:973px;top:390px">Style</div>
<div style="left:1025px;top:386px;width:129px;height:23px;background:linear-gradient(#f4f4f4,#ebebeb);border:1px solid #cdcdcd;border-radius:3px"><div class="t dis" style="left:4px;top:3px">wire</div><svg style="right:7px;top:9px" width="8" height="4" viewBox="0 0 8 4"><path d="M0 0h8L4 4z" fill="#c4c4c4"/></svg></div>
<div class="t dis" style="left:973px;top:418px">Opacity</div>
<div style="left:1025px;top:415px;width:129px;height:21px;background:#f0f0f0;border:1px solid #cdcdcd;border-radius:3px"><div class="t dis" style="left:4px;top:2px">1.00</div><div style="right:0;top:0;width:14px;height:19px;border-left:1px solid #cdcdcd;background:linear-gradient(#fafafa,#ebebeb);border-radius:0 2px 2px 0"></div><svg style="right:4px;top:4px" width="7" height="12" viewBox="0 0 7 12"><path d="M0 4.500h7L3.500 1z M0 7.500h7L3.500 11z" fill="#c8c8c8"/></svg></div>
<div style="left:944px;top:447.5px;width:23px;height:23px;background:#dcdcdc;border:1px solid #c3c3c3;border-radius:3px"></div><svg style="left:948px;top:450.5px" width="16" height="16" viewBox="0 0 16 16"><rect x="2.500" y="2.500" width="11" height="11" fill="none" stroke="#555" stroke-width="1.2"/><path d="M8 5v1M8 10v1M5 8h1M10 8h1M7.500 8h1" stroke="#777" stroke-width="1"/></svg>
<div class="t b" style="left:973px;top:451px;color:#b4b4b4">Boundary mesh</div>
<svg style="left:1138px;top:456px" width="8" height="5" viewBox="0 0 8 5"><path d="M0 4.500h8L4 0.500z" fill="#4a4a4a"/></svg>
<div class="t" style="left:973px;top:479px">Color by</div>
<div style="left:1028px;top:475px;width:126px;height:23px;background:linear-gradient(#fdfdfd,#eaeaea);border:1px solid #b4b4b4;border-radius:3px"><div class="t" style="left:4px;top:3px">bc_id</div><svg style="right:7px;top:9px" width="8" height="4" viewBox="0 0 8 4"><path d="M0 0h8L4 4z" fill="#3c3c3c"/></svg></div>
<div class="t" style="left:973px;top:507px">Style</div>
<div style="left:1028px;top:503px;width:126px;height:23px;background:linear-gradient(#fdfdfd,#eaeaea);border:1px solid #b4b4b4;border-radius:3px"><div class="t" style="left:4px;top:3px">edges</div><svg style="right:7px;top:9px" width="8" height="4" viewBox="0 0 8 4"><path d="M0 0h8L4 4z" fill="#3c3c3c"/></svg></div>
<div class="t" style="left:973px;top:535px">Opacity</div>
<div style="left:1028px;top:532px;width:126px;height:21px;background:#fff;border:1px solid #b4b4b4;border-radius:3px"><div class="t" style="left:4px;top:2px">1.00</div><div style="right:0;top:0;width:14px;height:19px;border-left:1px solid #b4b4b4;background:linear-gradient(#fafafa,#ebebeb);border-radius:0 2px 2px 0"></div><svg style="right:4px;top:4px" width="7" height="12" viewBox="0 0 7 12"><path d="M0 4.500h7L3.500 1z M0 7.500h7L3.500 11z" fill="#4a4a4a"/></svg></div>
<div style="left:944px;top:564.5px;width:23px;height:23px;background:#dcdcdc;border:1px solid #c3c3c3;border-radius:3px"></div><svg style="left:948px;top:567.5px" width="16" height="16" viewBox="0 0 16 16"><g fill="none" stroke="#666" stroke-width="1"><path d="M1.500 4.500h10v10h-10zM1.500 4.500l3-3h10v10l-3 3M11.500 4.500l3-3"/><path d="M4.500 1.500v10h10M1.500 14.500l3-3M5 4.500v10M8 4.500v10M1.500 8h10M1.500 11h10"/></g></svg>
<div class="t b" style="left:973px;top:568px">Mesh</div>
<svg style="left:1138px;top:573px" width="8" height="5" viewBox="0 0 8 5"><path d="M0 4.500h8L4 0.500z" fill="#4a4a4a"/></svg>
<div class="btn" style="left:973px;top:592px;width:181px;height:23px;"><div class="t" style="left:0;width:179px;text-align:center;top:3px">Reload</div></div>
<div class="t" style="left:973px;top:624px">Color by</div>
<div style="left:1040px;top:620px;width:114px;height:23px;background:linear-gradient(#f4f4f4,#ebebeb);border:1px solid #cdcdcd;border-radius:3px"><div class="t dis" style="left:4px;top:3px"></div><svg style="right:7px;top:9px" width="8" height="4" viewBox="0 0 8 4"><path d="M0 0h8L4 4z" fill="#c4c4c4"/></svg></div>
<div class="t" style="left:973px;top:652px">Color map</div>
<div style="left:1040px;top:648px;width:114px;height:24px;background:linear-gradient(#f4f4f4,#ebebeb);border:1px solid #cdcdcd;border-radius:3px"><div class="t dis" style="left:4px;top:3px"><span style="display:inline-block;width:14px;height:4px;vertical-align:2px;margin:0 4px 0 2px;background:linear-gradient(90deg,#f0f0f0,#c0c0c0)"></span>pinks</div><svg style="right:7px;top:9px" width="8" height="4" viewBox="0 0 8 4"><path d="M0 0h8L4 4z" fill="#c4c4c4"/></svg></div>
<div class="t" style="left:973px;top:681px">Style</div>
<div style="left:1040px;top:677px;width:114px;height:23px;background:linear-gradient(#f4f4f4,#ebebeb);border:1px solid #cdcdcd;border-radius:3px"><div class="t dis" style="left:4px;top:3px">solid</div><svg style="right:7px;top:9px" width="8" height="4" viewBox="0 0 8 4"><path d="M0 0h8L4 4z" fill="#c4c4c4"/></svg></div>
<div class="t" style="left:973px;top:709px">Opacity</div>
<div style="left:1040px;top:706px;width:114px;height:21px;background:#f0f0f0;border:1px solid #cdcdcd;border-radius:3px"><div class="t dis" style="left:4px;top:2px">1.00</div><div style="right:0;top:0;width:14px;height:19px;border-left:1px solid #cdcdcd;background:linear-gradient(#fafafa,#ebebeb);border-radius:0 2px 2px 0"></div><svg style="right:4px;top:4px" width="7" height="12" viewBox="0 0 7 12"><path d="M0 4.500h7L3.500 1z M0 7.500h7L3.500 11z" fill="#c8c8c8"/></svg></div>
<svg style="left:948px;top:741px" width="16" height="16" viewBox="0 0 16 16"><g fill="none" stroke="#000" stroke-width="1.4" stroke-linejoin="round"><path d="M1.800 4.800h9.400v9.400H1.800zM4.800 1.800h9.400v9.400H4.800z"/><path d="M1.800 4.800l3-3M11.200 4.800l3-3M1.800 14.200l3-3M11.200 14.200l3-3" stroke-width="1"/></g></svg>
<div class="t b" style="left:973px;top:742px">Regions</div>
<svg style="left:1138px;top:747px" width="8" height="5" viewBox="0 0 8 5"><path d="M0 4.500h8L4 0.500z" fill="#4a4a4a"/></svg>
<div class="t dis" style="left:973px;top:770px">Style</div>
<div style="left:1040px;top:766px;width:114px;height:23px;background:linear-gradient(#f4f4f4,#ebebeb);border:1px solid #cdcdcd;border-radius:3px"><div class="t dis" style="left:4px;top:3px">solid</div><svg style="right:7px;top:9px" width="8" height="4" viewBox="0 0 8 4"><path d="M0 0h8L4 4z" fill="#c4c4c4"/></svg></div>
<div class="t dis" style="left:973px;top:798px">Opacity</div>
<div style="left:1040px;top:795px;width:114px;height:21px;background:#f0f0f0;border:1px solid #cdcdcd;border-radius:3px"><div class="t dis" style="left:4px;top:2px">0.50</div><div style="right:0;top:0;width:14px;height:19px;border-left:1px solid #cdcdcd;background:linear-gradient(#fafafa,#ebebeb);border-radius:0 2px 2px 0"></div><svg style="right:4px;top:4px" width="7" height="12" viewBox="0 0 7 12"><path d="M0 4.500h7L3.500 1z M0 7.500h7L3.500 11z" fill="#c8c8c8"/></svg></div>
<div class="t dis" style="left:973px;top:826px">Line width</div>
<div style="left:1040px;top:823px;width:114px;height:21px;background:#f0f0f0;border:1px solid #cdcdcd;border-radius:3px"><div class="t dis" style="left:4px;top:2px">1.00</div><div style="right:0;top:0;width:14px;height:19px;border-left:1px solid #cdcdcd;background:linear-gradient(#fafafa,#ebebeb);border-radius:0 2px 2px 0"></div><svg style="right:4px;top:4px" width="7" height="12" viewBox="0 0 7 12"><path d="M0 4.500h7L3.500 1z M0 7.500h7L3.500 11z" fill="#c8c8c8"/></svg></div>
<div style="left:944px;top:855.5px;width:23px;height:23px;background:#dcdcdc;border:1px solid #c3c3c3;border-radius:3px"></div><svg style="left:948px;top:858.5px" width="16" height="16" viewBox="0 0 16 16"><path d="M7.500 1.500v9.300h7M7.500 10.800L2.300 13.800" fill="none" stroke="#000" stroke-width="1.400"/></svg>
<div class="t b" style="left:973px;top:859px">Axes</div>
<div style="left:872px;top:1002px;width:14px;height:1px;background:repeating-linear-gradient(90deg,#bbb 0 1px,transparent 1px 2px)"></div>
<div style="left:596px;top:506px;width:1px;height:14px;background:repeating-linear-gradient(0deg,#bbb 0 1px,transparent 1px 2px)"></div>
<div style="left:1px;top:1005px;width:1160px;height:30px;background:#e1e1e1"></div>
<div style="left:0px;top:1035px;width:1161px;height:1px;background:#555"></div>
<div style="left:0px;top:1036px;width:1161px;height:6px;background:#ececec"></div>
<div style="left:0px;top:1042px;width:1161px;height:1px;background:#777"></div>
<div style="left:0px;top:1036px;width:21px;height:6px;background:#696a64"></div>
<div style="left:1140px;top:1036px;width:21px;height:6px;background:#696a64"></div>
<div style="left:2px;top:1008px;width:61px;height:23px;background:#b9b9b9;border:1px solid #9a9a9a;border-radius:3px"></div>
<div class="t" style="left:7px;top:1012px;color:#1a73e8;font-weight:bold">Mesher</div>
<div class="t" style="left:72px;top:1012px;color:#8c8c8c">Modeler</div>
<div class="t" style="left:138px;top:1012px;color:#8c8c8c">Nodeworks</div>
<div class="t" style="left:223px;top:1012px;">Editor</div>
<div class="t" style="left:277px;top:1012px;">History</div>
<div class="t" style="left:339px;top:1012px;">Python</div>
<div class="t" style="left:964px;top:1012px;">Ready</div>
<div class="t" style="left:1018px;top:1012px;">CPU:&nbsp; 1%</div>
<div class="t" style="left:1095px;top:1012px;">RAM:&nbsp; 71%</div>
<div style="left:1009px;top:1008px;width:1px;height:23px;background:#a8a8a8"></div>
<div style="left:1010px;top:1008px;width:1px;height:23px;background:#f6f6f6"></div>
<div style="left:1086px;top:1008px;width:1px;height:23px;background:#a8a8a8"></div>
<div style="left:1087px;top:1008px;width:1px;height:23px;background:#f6f6f6"></div>
</body></html>
